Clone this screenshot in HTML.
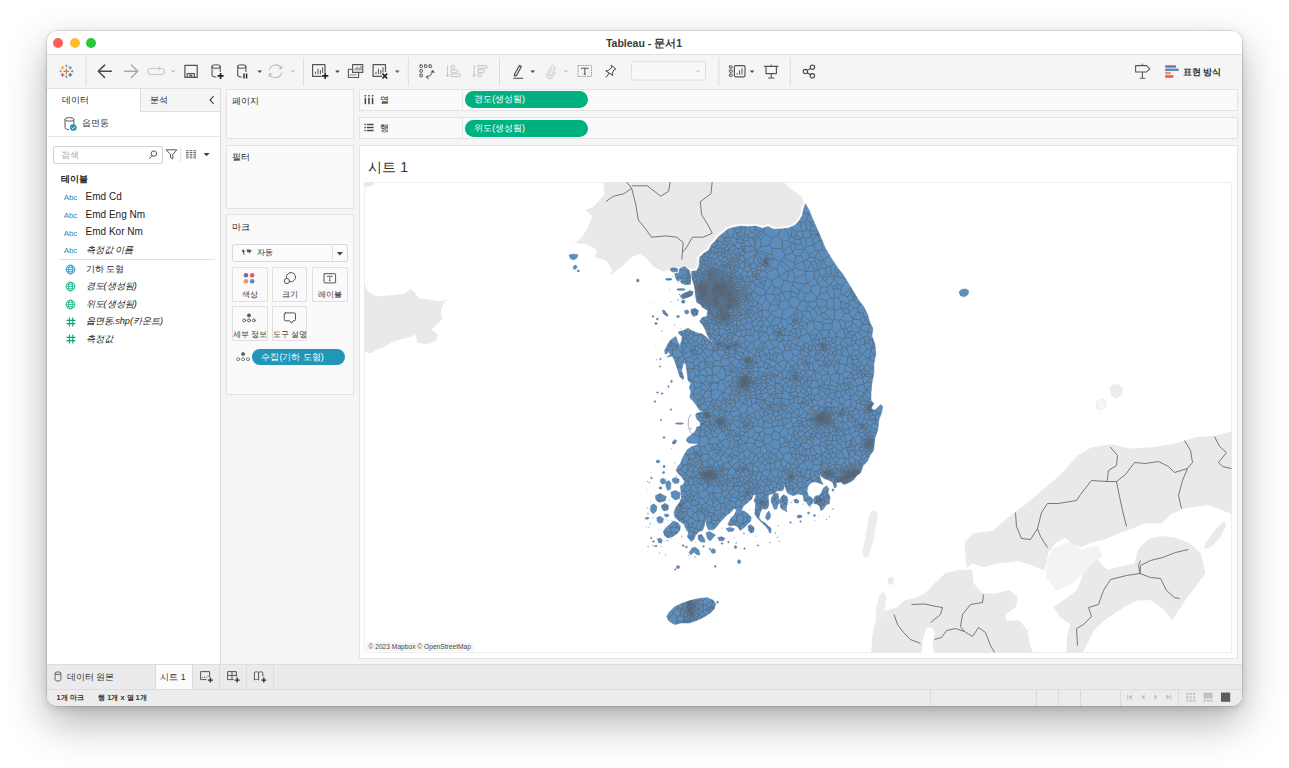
<!DOCTYPE html>
<html lang="ko">
<head>
<meta charset="utf-8">
<title>Tableau - 문서1</title>
<style>
*{box-sizing:border-box;margin:0;padding:0}
html,body{width:1289px;height:768px;overflow:hidden;background:#fff}
body{font-family:"Liberation Sans",sans-serif;font-size:11px;color:#333;position:relative}
#win{position:absolute;left:46.5px;top:31px;width:1195.5px;height:675px;border-radius:10px;background:#f5f5f5;overflow:hidden}
#shadow{position:absolute;left:46.5px;top:31px;width:1195.5px;height:675px;border-radius:10px;box-shadow:0 0 0 .5px rgba(0,0,0,.2),0 17px 42px rgba(0,0,0,.30),0 3px 9px rgba(0,0,0,.13)}
#o{position:absolute;left:-46.5px;top:-31px;width:1289px;height:768px}
.a{position:absolute}
.t{position:absolute;white-space:nowrap;line-height:14px;height:14px;overflow:visible}
svg{position:absolute;overflow:visible}
.card{position:absolute;background:#fafafa;border:1px solid #e3e3e3}
.vsep{position:absolute;width:1px;background:#dcdcdc}
.hsep{position:absolute;height:1px;background:#e0e0e0}
.pill{position:absolute;border-radius:8px;color:#fff;font-size:10.5px;line-height:15px;white-space:nowrap;overflow:hidden}
.mbtn{position:absolute;background:#fafafa;border:1px solid #dedede;border-radius:1px}
.mbtn .t{width:100%;text-align:center;left:0;font-size:9px}
.fld{font-size:10px;color:#222}
.fldk{font-size:9.2px;color:#222}
.it{font-style:italic}
.abc{position:absolute;font-size:8px;color:#2b8cb0;letter-spacing:-.2px;line-height:10px;white-space:nowrap}
.hash{position:absolute;font-size:11px;color:#00a27a;line-height:12px;font-weight:bold}
</style>
</head>
<body>
<div id="shadow"></div>
<div id="win"><div id="o">

<!-- title bar -->
<div class="a" id="titlebar" style="left:46px;top:31px;width:1197px;height:24px;background:#fff;border-bottom:1px solid #e2e2e2"></div>
<div class="a" style="left:53px;top:38px;width:10.4px;height:10.4px;border-radius:50%;background:#fe5f57"></div>
<div class="a" style="left:69.6px;top:38px;width:10.4px;height:10.4px;border-radius:50%;background:#febc2e"></div>
<div class="a" style="left:86.1px;top:38px;width:10.4px;height:10.4px;border-radius:50%;background:#28c840"></div>
<div class="t" id="wtitle" style="left:544px;width:200px;text-align:center;top:35.9px;font-size:10.5px;font-weight:bold;color:#3a3a3a">Tableau - 문서1</div>

<!-- toolbar placeholder -->

<svg id="tbicons" width="1289" height="768" viewBox="0 0 1289 768" style="left:0;top:0" fill="none" stroke-linecap="round" stroke-linejoin="round">
<!-- tableau logo -->
<g stroke-width="1.25" stroke-linecap="butt">
<path d="M66.4 68.4v5.8M63.5 71.3h5.8" stroke="#e8762d" stroke-width="1.3"/>
<path d="M62.6 65.9v3.6M60.8 67.7h3.6" stroke="#f5a623" stroke-width="1.1"/>
<path d="M70.2 65.9v3.6M68.4 67.7h3.6" stroke="#4e9bb8" stroke-width="1.1"/>
<path d="M62.6 73.1v3.6M60.8 74.9h3.6" stroke="#ea4a5a" stroke-width="1.1"/>
<path d="M70.2 73.1v3.6M68.4 74.9h3.6" stroke="#3f6fa5" stroke-width="1.1"/>
<path d="M66.4 64.6v2.4M65.2 65.8h2.4" stroke="#5b8fb5" stroke-width=".9"/>
<path d="M66.4 75.6v2.4M65.2 76.8h2.4" stroke="#6d8cab" stroke-width=".9"/>
<path d="M60.6 70.1v2.4M59.4 71.3h2.4" stroke="#6aa0c4" stroke-width=".9"/>
<path d="M72.2 70.1v2.4M71 71.3h2.4" stroke="#5d7fa8" stroke-width=".9"/>
</g>
<!-- separators -->
<g stroke="#dcdcdc" stroke-width="1" stroke-linecap="butt">
<path d="M86 57.5v28.5M303.4 57.5v28.5M408.3 57.5v28.5M499.5 57.5v28.5M718.9 57.5v28.5M790.3 57.5v28.5"/>
</g>
<!-- back / forward -->
<path d="M111.4 71.3H98.6M104.6 65.1l-6.3 6.2 6.3 6.2" stroke="#4a4a4a" stroke-width="1.5"/>
<path d="M124.6 71.3h12.8M131.4 65.1l6.3 6.2-6.3 6.2" stroke="#a9a9a9" stroke-width="1.4"/>
<!-- replay -->
<path d="M159.6 68.5h1.8a3 3 0 0 1 0 6h-10.6a3 3 0 0 1 0-6h8.8M158.6 66.9l1.8 1.6-1.8 1.6" stroke="#c9c9c9" stroke-width="1.1"/>
<path d="M170.9 70.4h4.4l-2.2 2.4z" fill="#b5b5b5" stroke="none"/>
<!-- save -->
<path d="M184.9 65.4h12.3v12h-12.3z" stroke="#555" stroke-width="1.25"/>
<path d="M187.2 77.2v-3.6h7.2v3.6M189.8 77.2v-1.8h2v1.8" stroke="#555" stroke-width="1.1"/>
<!-- db add -->
<g stroke="#555" stroke-width="1.1">
<ellipse cx="216.1" cy="66.5" rx="4.1" ry="1.8"/>
<path d="M212 66.5v8.6c0 1 1.6 1.9 4 1.9M220.2 66.5v5"/>
</g>
<path d="M220.6 72.9v6M217.6 75.9h6" stroke="#222" stroke-width="1.7" stroke-linecap="butt"/>
<!-- db pause -->
<g stroke="#555" stroke-width="1.1">
<ellipse cx="241.8" cy="66.5" rx="4.1" ry="1.8"/>
<path d="M237.7 66.5v8.6c0 1 1.6 1.9 3.6 1.9M245.9 66.5v5"/>
</g>
<path d="M244 73.4v5.2M246.6 73.4v5.2" stroke="#222" stroke-width="1.4" stroke-linecap="butt"/>
<path d="M257.4 70.4h4.6l-2.3 2.5z" fill="#444" stroke="none"/>
<!-- refresh -->
<g stroke="#bdbdbd" stroke-width="1.1">
<path d="M269.6 69.6a6.2 6.2 0 0 1 11.6-1.2M281.4 73a6.2 6.2 0 0 1-11.6 1.2"/>
<path d="M281.6 66.2v2.6h-2.6M269.4 76.4v-2.6h2.6"/>
</g>
<path d="M290.7 70.4h4.4l-2.2 2.4z" fill="#c4c4c4" stroke="none"/>
<!-- new worksheet -->
<path d="M325 72v-7.4h-12.4v11.8h8.6" stroke="#555" stroke-width="1.2"/>
<path d="M315.6 74.2v-2.4M318 74.2v-5.6M320.4 74.2v-4.2M322.6 73v-5.8" stroke="#555" stroke-width="1" stroke-linecap="butt"/>
<path d="M325.2 72.8v6.2M322.1 75.9h6.2" stroke="#222" stroke-width="1.7" stroke-linecap="butt"/>
<path d="M335.1 70.4h4.6l-2.3 2.5z" fill="#444" stroke="none"/>
<!-- duplicate -->
<g stroke="#555" stroke-width="1.1">
<path d="M352.6 64.6h10.2v7.8h-10.2z" fill="#f5f5f5"/>
<path d="M352.6 69.2h-4.2v8.3h10.2v-5"/>
</g>
<path d="M355 70.4v-2M357 70.4v-3.6M359 70.4v-2.8M361 70.4v-4.2M350.4 75.6v-1.4M352.2 75.6v-1.4M354 75.6v-1.4M355.8 75.6v-1.4" stroke="#555" stroke-width=".9" stroke-linecap="butt"/>
<!-- clear sheet -->
<path d="M385.5 71.6v-7h-12.4v11.8h8.4" stroke="#555" stroke-width="1.2"/>
<path d="M376 74.2v-2.4M378.4 74.2v-5.6M380.8 74.2v-4.2M383 72.6v-5.4" stroke="#555" stroke-width="1" stroke-linecap="butt"/>
<path d="M382.4 73.7l4.8 4.8M387.2 73.7l-4.8 4.8" stroke="#222" stroke-width="1.7" stroke-linecap="butt"/>
<path d="M395 70.4h4.6l-2.3 2.5z" fill="#555" stroke="none"/>
<!-- swap -->
<g stroke="#555" stroke-width="1">
<rect x="419.8" y="64.9" width="2.6" height="2.6" rx=".6"/><rect x="424.4" y="64.9" width="2.6" height="2.6" rx=".6"/><rect x="429" y="64.9" width="2.6" height="2.6" rx=".6"/>
<rect x="419.8" y="69.6" width="2.6" height="2.6" rx=".6"/><rect x="419.8" y="74.2" width="2.6" height="2.6" rx=".6"/>
<path d="M426.4 77.2c3.4-.4 6-3 6.4-6.4M428.2 75.6l-2 1.7 2.1 1.4M431 72.4l1.8-1.9 1.3 2.2"/>
</g>
<!-- sort asc / desc (disabled) -->
<g stroke="#c6c6c6" stroke-width="1">
<path d="M447.6 65.6v11M446.2 75l1.4 1.7 1.4-1.7"/>
<rect x="451" y="65.6" width="3.6" height="2.6" rx=".7"/><rect x="451" y="69.8" width="6.6" height="2.6" rx=".7"/><rect x="451" y="74" width="9.4" height="2.6" rx=".7"/>
<path d="M474.2 65.6v11M472.8 75l1.4 1.7 1.4-1.7"/>
<rect x="477.6" y="65.6" width="9.6" height="2.6" rx=".7"/><rect x="477.6" y="69.8" width="6.8" height="2.6" rx=".7"/><rect x="477.6" y="74" width="3.8" height="2.6" rx=".7"/>
</g>
<!-- highlighter -->
<path d="M519.6 65.4l1.8 1-4.8 9-2.3.6.5-2.3zM513.8 78.3h9" stroke="#444" stroke-width="1.1"/>
<path d="M530.4 70.4h4.6l-2.3 2.5z" fill="#444" stroke="none"/>
<!-- paperclip -->
<path d="M552.4 68.2l-3.6 6.6a1.3 1.3 0 0 0 2.3 1.2l3.8-7.2a2.3 2.3 0 0 0-4-2.2l-4 7.4a3.3 3.3 0 0 0 5.8 3.1l2.6-4.9" stroke="#c2c2c2" stroke-width=".9"/>
<path d="M563.6 70.4h4.4l-2.2 2.4z" fill="#c4c4c4" stroke="none"/>
<!-- text box -->
<rect x="578.1" y="65.5" width="13.4" height="11" stroke="#777" stroke-width=".8" stroke-dasharray="1.4 1.1" stroke-linecap="butt"/>
<path d="M581.6 68.2h6.4M581.6 68.2v1M588 68.2v1M584.8 68.2v6M583.6 74.2h2.4" stroke="#444" stroke-width=".9" stroke-linecap="butt"/>
<!-- pin -->
<path d="M611.6 65.4l4.2 3.6-1.6.6-2 3.6.6 2.2-7-4.4 2.4-.4 3.4-3zM609.2 73.2l-3 4" stroke="#444" stroke-width="1"/>
<!-- combo -->
<rect x="631.5" y="61.8" width="74" height="18.2" rx="2" fill="#f8f8f8" stroke="#dedede" stroke-width="1"/>
<path d="M695.8 70.4h4.4l-2.2 2.4z" fill="#cdcdcd" stroke="none"/>
<!-- show/hide cards -->
<g stroke="#555" stroke-width="1">
<rect x="729.4" y="66" width="2.9" height="2.2" rx=".5"/><rect x="729.4" y="70.1" width="2.9" height="2.2" rx=".5"/><rect x="729.4" y="74.2" width="2.9" height="2.2" rx=".5"/>
<rect x="734.4" y="65.6" width="10.6" height="11.2" rx="1.2" stroke-width="1.2"/>
<path d="M737.2 74.6v-1.6M739.6 74.6v-4.4M742 74.6v-6.4" stroke-linecap="butt"/>
</g>
<path d="M749.8 70.4h4.6l-2.3 2.5z" fill="#444" stroke="none"/>
<!-- presentation -->
<path d="M764.4 66.4h13.6M766 66.6v7h10.4v-7M771.2 73.8v4M768.4 78h5.6M771.2 65v1.2" stroke="#555" stroke-width="1.15"/>
<!-- share -->
<g stroke="#444" stroke-width="1.1">
<circle cx="812.4" cy="67.2" r="2.2"/><circle cx="805.4" cy="71.6" r="2.2"/><circle cx="812.4" cy="75.8" r="2.2"/>
<path d="M807.3 70.4l3.2-2M807.3 72.8l3.2 1.9"/>
</g>
<!-- guide signpost -->
<path d="M1135.6 65.6h11l3.2 3.2-3.2 3.2h-11zM1142.4 64v1.4M1142.4 72.2v6.1M1140.2 78.3h4.6" stroke="#555" stroke-width="1.05"/>
<!-- show me -->
<g stroke="none">
<rect x="1165.2" y="65.3" width="10.7" height="2.4" fill="#7f6c9e"/>
<rect x="1165.2" y="68.6" width="13.5" height="2.4" fill="#4e8fc4"/>
<rect x="1165.2" y="71.9" width="5.6" height="2.4" fill="#f59350"/>
<rect x="1165.2" y="75.2" width="8.2" height="2.6" fill="#ec5563"/>
</g>
</svg>
<div class="t" style="left:1182.5px;top:64.5px;font-size:8.6px;font-weight:bold;color:#2e2e2e">표현 방식</div>


<!-- left data pane -->
<div class="a" id="leftpane" style="left:46px;top:88px;width:175px;height:576px;background:#fff;border-right:1px solid #dedede;border-top:1px solid #e2e2e2"></div>


<!-- left pane content -->
<div class="a" style="left:139.5px;top:88px;width:81.5px;height:23.5px;background:#f5f5f5;border-left:1px solid #dedede;border-right:1px solid #dedede;border-bottom:1px solid #dedede;border-top:1px solid #e2e2e2"></div>
<div class="t" style="left:61.5px;top:93px;font-size:8.8px;color:#2a2a2a">데이터</div>
<div class="t" style="left:150.3px;top:93px;font-size:8.8px;color:#2a2a2a">분석</div>
<svg width="8" height="10" viewBox="0 0 8 10" style="left:207.5px;top:95px" fill="none" stroke="#444" stroke-width="1.1"><path d="M5.6 1.2L2 5l3.6 3.8"/></svg>
<svg width="14" height="16" viewBox="0 0 14 16" style="left:63px;top:116px" fill="none" stroke="#555" stroke-width="1"><ellipse cx="6.4" cy="3.4" rx="4.4" ry="1.8"/><path d="M2 3.4v8.4c0 1 1.8 1.8 4 1.8M10.8 3.4v5"/><circle cx="10.3" cy="11.5" r="3.3" fill="#1b8fb8" stroke="none"/><path d="M8.7 11.6l1.2 1.2 2-2.3" stroke="#fff" stroke-width="1"/></svg>
<div class="t" style="left:81.5px;top:116.3px;font-size:8.8px;color:#333">읍면동</div>
<div class="hsep" style="left:47px;top:136px;width:173px;background:#e6e6e6"></div>
<div class="a" style="left:53.3px;top:145.5px;width:109.4px;height:18.8px;border:1px solid #d2d2d2;border-radius:2px;background:#fff"></div>
<div class="t" style="left:60.5px;top:148px;font-size:8.8px;color:#a8a8a8">검색</div>
<svg width="130" height="20" viewBox="145 145 130 20" style="left:145px;top:145px" fill="none" stroke="#555" stroke-width="1" stroke-linecap="round" stroke-linejoin="round">
<circle cx="153.9" cy="153.6" r="2.7"/><path d="M152.1 155.7l-2.6 3"/>
<path d="M166.4 149.8h10.4l-4 4.8v4.2l-2.4-1.2v-3z"/>
<path d="M180.8 147v14.4" stroke="#dcdcdc"/>
<g stroke="#666" stroke-width="1" stroke-linecap="butt"><path d="M186 150.7h2.6M189.7 150.7h2.6M193.4 150.7h2.6M186 152.5h2.6M189.7 152.5h2.6M193.4 152.5h2.6M186 154.3h2.6M189.7 154.3h2.6M193.4 154.3h2.6M186 156.1h2.6M189.7 156.1h2.6M193.4 156.1h2.6M186 157.9h2.6M189.7 157.9h2.6M193.4 157.9h2.6"/></g>
<path d="M203.6 153h6l-3 3.2z" fill="#444" stroke="none"/>
</svg>
<div class="t" style="left:61.2px;top:171.5px;font-size:8.8px;font-weight:bold;color:#222">테이블</div>

<div class="abc" style="left:63.8px;top:193.3px">Abc</div><div class="t fld" style="left:85.6px;top:189.8px">Emd Cd</div>
<div class="abc" style="left:63.8px;top:211px">Abc</div><div class="t fld" style="left:85.6px;top:207.5px">Emd Eng Nm</div>
<div class="abc" style="left:63.8px;top:228.5px">Abc</div><div class="t fld" style="left:85.6px;top:225px">Emd Kor Nm</div>
<div class="abc" style="left:63.8px;top:246.2px">Abc</div><div class="t fldk it" style="left:85.6px;top:242.8px">측정값 이름</div>
<div class="hsep" style="left:59.3px;top:259px;width:155.7px"></div>
<svg width="11" height="11" viewBox="-5.5 -5.5 11 11" style="left:64.9px;top:263.7px" fill="none" stroke="#2b9bc8" stroke-width="1"><circle r="4.4"/><ellipse rx="2" ry="4.4"/><path d="M-4.4 0h8.8M-3.8 -2.2h7.6M-3.8 2.2h7.6" stroke-width=".8"/></svg>
<div class="t fldk" style="left:85.6px;top:261.8px">기하 도형</div>
<svg width="11" height="11" viewBox="-5.5 -5.5 11 11" style="left:64.9px;top:281.1px" fill="none" stroke="#1fb98c" stroke-width="1"><circle r="4.4"/><ellipse rx="2" ry="4.4"/><path d="M-4.4 0h8.8M-3.8 -2.2h7.6M-3.8 2.2h7.6" stroke-width=".8"/></svg>
<div class="t fldk it" style="left:85.6px;top:279.2px">경도(생성됨)</div>
<svg width="11" height="11" viewBox="-5.5 -5.5 11 11" style="left:64.9px;top:298.6px" fill="none" stroke="#1fb98c" stroke-width="1"><circle r="4.4"/><ellipse rx="2" ry="4.4"/><path d="M-4.4 0h8.8M-3.8 -2.2h7.6M-3.8 2.2h7.6" stroke-width=".8"/></svg>
<div class="t fldk it" style="left:85.6px;top:296.8px">위도(생성됨)</div>
<svg width="10" height="10" viewBox="0 0 10 10" style="left:65.6px;top:317px" fill="none" stroke="#00a67c" stroke-width="1.1"><path d="M3.4 .6v8.8M6.8 .6v8.8M.6 3.4h8.8M.6 6.6h8.8"/></svg>
<div class="t fldk it" style="left:85.6px;top:314.4px">읍면동.shp(카운트)</div>
<svg width="10" height="10" viewBox="0 0 10 10" style="left:65.6px;top:334.3px" fill="none" stroke="#00a67c" stroke-width="1.1"><path d="M3.4 .6v8.8M6.8 .6v8.8M.6 3.4h8.8M.6 6.6h8.8"/></svg>
<div class="t fldk it" style="left:85.6px;top:332px">측정값</div>

<!-- cards -->
<div class="card" style="left:226px;top:88.5px;width:128px;height:50.5px"></div>
<div class="card" style="left:226px;top:144.5px;width:128px;height:64.5px"></div>
<div class="card" style="left:226px;top:214px;width:128px;height:181px"></div>

<!-- shelves -->
<div class="card" style="left:359px;top:88.5px;width:879px;height:22.5px"></div>
<div class="card" style="left:359px;top:116.5px;width:879px;height:22.5px"></div>


<!-- card contents -->
<div class="t" style="left:231.7px;top:93.8px;font-size:8.8px;color:#2a2a2a">페이지</div>
<div class="t" style="left:231.7px;top:150.3px;font-size:8.8px;color:#2a2a2a">필터</div>
<div class="t" style="left:231.7px;top:220.3px;font-size:8.8px;color:#2a2a2a">마크</div>
<div class="a" style="left:231.8px;top:244.2px;width:116px;height:17.5px;border:1px solid #d8d8d8;border-radius:2px;background:#fbfbfb"></div>
<div class="vsep" style="left:332.3px;top:245.6px;height:15px;background:#dedede"></div>
<svg width="12" height="8" viewBox="0 0 12 8" style="left:241px;top:248.6px" fill="#555" stroke="none"><path d="M.6 1.2l1.8-.6 1 .8.4 1.6-.8.2.6 2.6-.8.2-.8-2.4-.6-1zM5 .6l2.2-.2 2.4.4 1.2 1-.6.8-1 .2-.4 1.6-.8-.2-.2-1.2-1 .6-.8-.6.2-1.2z"/></svg>
<div class="t" style="left:257px;top:246.3px;font-size:7.6px;color:#333">자동</div>
<svg width="8" height="6" viewBox="0 0 8 6" style="left:336.4px;top:251.2px"><path d="M.8 1h6.2L3.9 4.6z" fill="#444"/></svg>

<div class="mbtn" style="left:231.8px;top:266.8px;width:35.8px;height:34.8px"><div class="t" style="top:20.4px;font-size:7.6px">색상</div></div>
<div class="mbtn" style="left:272.2px;top:266.8px;width:35.3px;height:34.8px"><div class="t" style="top:20.4px;font-size:7.6px">크기</div></div>
<div class="mbtn" style="left:312.1px;top:266.8px;width:35.7px;height:34.8px"><div class="t" style="top:20.4px;font-size:7.6px">레이블</div></div>
<div class="mbtn" style="left:231.8px;top:306.3px;width:35.8px;height:34.9px"><div class="t" style="top:20.6px;font-size:7.6px">세부 정보</div></div>
<div class="mbtn" style="left:272.2px;top:306.3px;width:35.3px;height:34.9px"><div class="t" style="top:20.6px;font-size:7.6px">도구 설명</div></div>
<svg width="130" height="130" viewBox="226 262 130 130" style="left:226px;top:262px" fill="none" stroke="#555" stroke-width="1" stroke-linecap="round" stroke-linejoin="round">
<g stroke="none"><circle cx="246" cy="275.2" r="2.3" fill="#8165a8"/><circle cx="252.2" cy="275.2" r="2.3" fill="#ec5563"/><circle cx="246" cy="281.3" r="2.3" fill="#f59350"/><circle cx="252.2" cy="281.3" r="2.3" fill="#4e8fc4"/></g>
<circle cx="291" cy="277.2" r="4.6"/><circle cx="286.9" cy="281" r="2.6" fill="#fafafa"/>
<rect x="324" y="273.7" width="11.6" height="9.2" rx=".6"/><path d="M327.4 276.2h4.8M327.4 276.2v.8M332.2 276.2v.8M329.8 276.2v4.4M328.9 280.6h1.8" stroke-width=".85" stroke-linecap="butt"/>
<circle cx="249" cy="315.4" r="1.5" fill="#555"/><circle cx="244.2" cy="320.4" r="1.5" stroke-width=".9"/><circle cx="249" cy="320.4" r="1.5" stroke-width=".9"/><circle cx="253.8" cy="320.4" r="1.5" stroke-width=".9"/>
<path d="M285.4 312.9h9a1.1 1.1 0 0 1 1.1 1.1v5.7a1.1 1.1 0 0 1-1.1 1.1h-1.4l-1.4 2.4-1.9-2.4h-4.3a1.1 1.1 0 0 1-1.1-1.1V314a1.1 1.1 0 0 1 1.1-1.1z"/>
<circle cx="243.1" cy="354" r="1.5" fill="#666" stroke="#666"/><circle cx="238.2" cy="359.2" r="1.5" stroke="#777" stroke-width=".9"/><circle cx="243.1" cy="359.2" r="1.5" stroke="#777" stroke-width=".9"/><circle cx="248" cy="359.2" r="1.5" stroke="#777" stroke-width=".9"/>
</svg>
<div class="pill" style="left:252.4px;top:348.8px;width:92.6px;height:16.5px;background:#2196b7;line-height:16.5px;padding-left:9px;font-size:8.8px">수집(기하 도형)</div>

<!-- shelf contents -->
<div class="vsep" style="left:461.7px;top:89.5px;height:20.5px;background:#e6e6e6"></div>
<div class="vsep" style="left:461.7px;top:117.5px;height:20.5px;background:#e6e6e6"></div>
<svg width="12" height="10" viewBox="0 0 12 10" style="left:364.4px;top:95px" fill="#444" stroke="none"><rect x=".6" y="0" width="1.5" height="1.5"/><rect x=".6" y="2.8" width="1.5" height="6.4"/><rect x="4.2" y="0" width="1.5" height="1.5"/><rect x="4.2" y="2.8" width="1.5" height="6.4"/><rect x="7.8" y="0" width="1.5" height="1.5"/><rect x="7.8" y="2.8" width="1.5" height="6.4"/></svg>
<div class="t" style="left:380px;top:92.8px;font-size:8.8px;color:#2a2a2a">열</div>
<svg width="12" height="10" viewBox="0 0 12 10" style="left:364.4px;top:123.2px" fill="#444" stroke="none"><rect x=".4" y=".8" width="1.4" height="1.4"/><rect x="2.8" y=".8" width="6.8" height="1.4"/><rect x=".4" y="3.8" width="1.4" height="1.4"/><rect x="2.8" y="3.8" width="6.8" height="1.4"/><rect x=".4" y="6.8" width="1.4" height="1.4"/><rect x="2.8" y="6.8" width="6.8" height="1.4"/></svg>
<div class="t" style="left:380px;top:120.8px;font-size:8.8px;color:#2a2a2a">행</div>
<div class="pill" style="left:464.8px;top:91px;width:123.5px;height:17px;border-radius:8.5px;background:#00b180;line-height:17px;padding-left:9.4px;font-size:8.8px">경도(생성됨)</div>
<div class="pill" style="left:464.8px;top:119.5px;width:123.5px;height:17px;border-radius:8.5px;background:#00b180;line-height:17px;padding-left:9.4px;font-size:8.8px">위도(생성됨)</div>

<!-- view -->
<div class="card" id="view" style="left:359px;top:144.5px;width:879px;height:514.5px;background:#fff"></div>


<!-- view content -->
<div class="t" style="left:368.4px;top:155.6px;font-size:14px;line-height:22px;height:22px;color:#333">시트 1</div>
<div id="map" class="a" style="left:363.5px;top:181.5px;width:868.5px;height:471.5px;overflow:hidden;background:#fff;outline:1px solid #f0f0f0;outline-offset:-1px"><!--MAP--><svg id="mapsvg" width="868.5" height="471.5" viewBox="363.5 181.5 868.5 471.5" style="left:0;top:0">
<defs><clipPath id="skc"><polygon points="804.9,203.2 808.5,209.6 812.2,218.7 816.7,228.7 820.4,236.9 824.9,247.9 830.4,257 836.8,267 842.2,273.4 847.7,282.5 853.2,291.6 857.7,298.9 863.2,306.2 866.9,313.5 869.6,322.6 872.4,327.8 871.4,335.6 874.4,343.4 875.4,353.2 873.4,363 873.4,372.7 871.4,382.5 870.5,392.3 870.5,400 873.4,403 870.5,407.9 874.4,409.8 880.2,404 882.2,405.9 881.2,411.8 878.3,419.6 877.3,429.4 874.4,437.2 873.4,447 873,450 869.5,454.7 867.1,460.5 862.5,465.2 860.1,472.3 856,475.2 853.1,479.3 849.6,481.6 843.7,484 840.2,481.6 835.5,482.2 834.3,487.5 832,481.6 827.3,479.3 823.8,478.1 820.3,475.2 818.5,472.8 820.3,479.3 822.6,484 815.6,481.6 812.1,481.6 808.6,484 807,487 806.5,491 808,495.5 811,497 812.7,499.5 811.8,502.9 809.3,505.5 807.6,504.6 805.9,501.2 803.4,500.4 803,496 802.5,494.5 797.5,493.2 792.4,495.3 787.3,492.8 785.6,489.4 784.3,483.5 783,489 781.4,490.2 777.1,490.2 772.9,492.8 767.8,494.5 767.8,498.7 768.3,503.8 767.4,507.6 765.3,508.8 761.9,508 760.5,510 759.4,513.1 758.5,517.3 761.1,520.7 764.5,522.4 767.8,525.8 770.4,527.5 770.4,532.5 768.8,532 767.8,529.1 764.5,524.9 760.7,521.5 756,516.5 754.3,513.1 754.7,508 755.2,503 753.5,500.4 754.5,497.5 756,493.5 752.5,494.7 751.3,498.2 747.8,501.7 743.1,505.2 740.8,509.9 744.3,511.1 747.8,513.4 750.7,517 750.2,520.5 746.6,524 743.1,527.5 739.6,529.8 737.3,526.3 733.8,524.6 729.1,525.2 727.3,524 730.2,518.1 733.8,514.6 736.1,509.9 733.8,507.6 730.2,511.7 725.5,515.2 722,519.3 718.5,522.8 716.2,526.3 712.7,529.3 708,529.3 706.2,525.2 705,518.1 703.9,525.2 702.1,529.8 698.6,531 695.1,534.5 693.3,539.2 690.4,541 686.9,536.3 688,532.2 685.7,528.7 683.4,523.4 678.7,520.5 674.6,517 673.4,511.7 675.7,506.4 679.3,501.7 681,497 680.4,490 679.9,485.3 682.8,484.2 684,480.7 681,476 678.1,473.6 675.8,470.1 676.9,466.6 679.9,463.1 681.6,458.4 684,453.7 686.9,449 691.6,446.1 698.6,444.1 695.1,443.1 688.1,442.5 685.7,440.2 686.9,437.3 691.6,433.8 695.1,430.2 696.3,426.7 699.8,425.6 699.8,422 696.3,418.5 695.1,415 695.7,413 703.9,410.6 699.2,410 696.3,405.3 692.8,400.7 689.3,397.1 690.4,391.3 688.7,386.6 690.4,383.1 687.5,379.5 686.3,370.2 685.2,363.1 683,362.3 681.1,370.2 683.4,377.2 682.2,379 679.3,376 677.5,370.2 675.2,363.1 673.4,358.4 671.7,355.5 666.4,356.7 669.9,353.8 668.2,351.4 664.7,353.8 664.1,350.2 666.4,345.6 669.3,340.3 673.4,337.3 675.5,336 677,341 679.3,345.5 681,340.6 681.7,335.9 678.5,333.5 678.1,331.2 682.8,330 687.5,327.7 691,330 696.9,332.4 701.6,333.5 706.3,337.1 711,341.2 713.3,340 709.8,339.4 706.9,334.7 705.1,330 702.8,325.3 699.2,320.7 701.6,317.1 706.3,316 707.4,310.1 701.6,306.6 700.4,304.2 696.3,301.9 695.1,296 694.5,290.2 694,285.5 691.6,278.4 691,270.8 696.3,270.2 698.1,266.7 698.6,264.3 699.2,257 702.8,253.3 708.3,249.7 711,244.2 714.7,240.6 718.3,236 722.9,232.4 727.4,228.7 732.9,226.9 740.2,225.6 747.5,226.3 754.8,225.6 762.1,227.8 767.5,226 773,228.7 780.3,228.4 787.6,227.8 794,225.1 798.5,220.5 801.8,215 803.1,208.7" /><polygon points="666.2,616.2 668.1,612.4 673.9,606.5 681.7,602.7 690.4,599.8 700.1,597.8 706.9,597.2 712.7,599.8 715.3,603.6 713.7,608.5 709.8,612.4 704,616.2 696.2,620.1 688.5,622.5 680.7,622.5 674.9,624 672,623 668.1,620.1" /><polygon points="679.3,267.9 684,266.1 688.7,269.7 690.4,276.1 689.9,283.7 685.2,284.3 680.5,282.5 679.9,278.4 677.5,274.9 678.7,270.2" /><polygon points="669.9,268.2 673.5,267.2 677.3,268.4 676.8,271.2 672.5,271.6 670.4,270.4" /><polygon points="674.2,273 677.2,272.6 678.6,276 679.2,280 676.8,280.3 675,277" /><polygon points="679.3,295.4 684,292.5 689.9,290.2 692.8,291.3 691.6,294.9 686.3,297.2 682.2,298.4" /><polygon points="662.9,531 665.2,527.5 669.3,524 672.8,520.5 677.5,522.2 679.8,525.7 679.3,529.8 676.3,533.4 671.6,536.3 667.5,537.5 664,535.1" /><polygon points="697.4,535.1 700.9,533.9 703.9,538 704.5,541.6 700.4,541.6 698,539.2" /><polygon points="705.6,532.2 709.1,531 715,534.5 712.7,536.9 709.7,540.4 706.8,538" /><polygon points="717.3,537 721,536.3 724.4,538 722.5,540.4 718.5,540" /><polygon points="725.5,528 729.5,526.9 733.8,528.2 732.5,530.8 727.5,531" /><polygon points="688.6,552.1 691.6,547.4 695.1,546.8 698.6,549.8 699.2,554.5 696,554 693.5,551.5 690.4,554.5" /><polygon points="710.1,550 712.5,548 715,549.5 714.6,552.4 711.5,552.7" /><polygon points="771.2,497 773.8,492.3 777.6,493.2 778.4,498.7 779.7,502.1 777.1,504.6 776.3,508.4 773.8,508.8 772.1,504.6 770.4,500.4" /><polygon points="780.5,497 783.1,494 786.5,496.2 787.3,500.4 786.5,504.6 785.6,508.8 786.5,511.4 783.9,509.7 781.4,508.8 779.7,506.3 780.1,502.9 779,500" /><polygon points="826.2,485.2 828.3,488.5 827.5,491.9 829.6,497 828.8,502.9 825.4,504.6 822.8,508.8 820.3,510.1 819.5,506.3 816.9,503.8 813.5,502.9 812.9,498.7 815.2,495.3 818.6,495.3 821.1,491.9 822.8,487.7" /><polygon points="833.6,483 835.6,482.6 836,486 834.6,487.7 833.4,485.5" /><polygon points="747.5,526 750,524 753.5,527 753,531.5 750,532.5 748,530" /><polygon points="796.6,515.5 799,514.8 800.8,516 799.5,517.3 797,517.2" /><polygon points="650.3,505 653.5,503.5 656.4,506 655.8,510.5 652.8,513.4 650,510.5" /><polygon points="655.2,495 659.5,493 663.4,495.5 662.5,500 658.5,501.7 655.6,499" /><polygon points="661.1,504.5 664.5,502.9 668.1,505 667.5,509.5 663.5,510.5 661.3,508" /><polygon points="656.4,517 659.5,515.8 662.9,518 662.3,522 658.5,522.8 656.6,520.5" /><polygon points="664,513.8 667,513.4 668.7,515 667,516.4 664.4,516" /><polygon points="644.7,517.2 647,516.7 648.8,517.6 647.2,518.7 645,518.6" /><polygon points="659.9,479 663,477.7 665.2,480 664.6,483 661.5,483.6 660,481.5" /><polygon points="665.2,481.5 668.5,480 670.5,483 670,488.5 667.2,490 665.5,486" /><polygon points="671.7,478.5 675,477.1 678.7,479 678,482.5 674,483 672,481" /><polygon points="670.5,491.5 675,490 679.9,492.5 679,498 674.5,499.4 671,496.5" /><polygon points="655.2,495.5 660,493.5 665.8,496 664.5,500.5 659,501.8 655.6,499.5" /><polygon points="671.7,441.5 674.5,439 676.3,440.2 675,442.8 672.5,443.7" /><polygon points="568.5,254.6 572,253.6 577.3,254.2 576.5,257.3 573.5,259.3 570,258.2" /><polygon points="572.6,266 575,264.6 576.7,266 575.5,268.5 573.2,268.7" /><polygon points="958.6,291.5 961,289 965.5,288.4 968.2,290.3 967.5,294 964,296.2 960,295.3" /><polygon points="793.3,499.6 796,498.6 798.6,500.4 797.5,502.7 794.5,502.3" /><polygon points="766.2,513.1 768.3,510.5 770,513.9 769.5,518.1 767,519.8 764.9,517.3" /><polygon points="690.4,309 694.5,307.8 698,310 697,314.5 693,316 690.8,313" /><polygon points="684,310.2 686.8,309.5 688.7,311.3 687.2,313.6 684.6,313" /><polygon points="661.7,310 663.5,309.5 667.6,314.6 666.6,316 663,313" /><polygon points="657,538.5 659.5,537.5 661.7,539.5 660.8,542.7 658,542" /><ellipse cx="577.8" cy="270.4" rx="1.1" ry="1"/><ellipse cx="637.3" cy="280" rx="1.3" ry="1.6"/><ellipse cx="668.2" cy="278.8" rx="3.2" ry="1"/><ellipse cx="680.5" cy="289" rx="4.2" ry="0.9"/><ellipse cx="682.8" cy="301.2" rx="1.7" ry="1.6"/><ellipse cx="664" cy="312.3" rx="1.2" ry="1.2"/><ellipse cx="656.8" cy="318.5" rx="1" ry="1"/><ellipse cx="652.5" cy="316" rx="1" ry="0.8"/><ellipse cx="655.5" cy="323" rx="1.3" ry="1"/><ellipse cx="677.5" cy="316" rx="1.5" ry="1"/><ellipse cx="657.5" cy="461" rx="1.8" ry="1.4"/><ellipse cx="663.6" cy="466" rx="1" ry="1.2"/><ellipse cx="663" cy="472" rx="1.2" ry="1"/><ellipse cx="651" cy="477.5" rx="1" ry="0.8"/><ellipse cx="660" cy="487.5" rx="1.5" ry="1.2"/><ellipse cx="735" cy="546.5" rx="1.2" ry="1.5"/><ellipse cx="738.6" cy="561.2" rx="1.6" ry="2"/><ellipse cx="714.7" cy="565.9" rx="0.9" ry="0.9"/><ellipse cx="677.5" cy="566.5" rx="1.6" ry="1.6"/><ellipse cx="674.8" cy="569" rx="0.8" ry="0.8"/><ellipse cx="717" cy="601.7" rx="0.9" ry="1"/><ellipse cx="799.2" cy="515.9" rx="2.2" ry="1.4"/><ellipse cx="751.7" cy="529" rx="1.7" ry="2.8"/><ellipse cx="808" cy="512.5" rx="1" ry="1"/><ellipse cx="814" cy="515" rx="1" ry="1"/><ellipse cx="800" cy="521" rx="0.8" ry="0.8"/><ellipse cx="790" cy="522" rx="0.8" ry="0.8"/><ellipse cx="832.5" cy="489.5" rx="0.9" ry="1.2"/><ellipse cx="653" cy="541" rx="1" ry="0.8"/><ellipse cx="655.5" cy="545.5" rx="1.2" ry="0.8"/><ellipse cx="650.8" cy="537.5" rx="0.8" ry="0.8"/><ellipse cx="682.5" cy="545" rx="1" ry="0.8"/><ellipse cx="686" cy="546.5" rx="0.8" ry="1"/><ellipse cx="703" cy="546" rx="0.8" ry="0.8"/><ellipse cx="721.5" cy="543" rx="0.9" ry="0.8"/><ellipse cx="728" cy="541.5" rx="0.8" ry="0.8"/><ellipse cx="683.5" cy="343.5" rx="0.8" ry="0.8"/><ellipse cx="660" cy="358.5" rx="0.8" ry="0.8"/><ellipse cx="659.5" cy="366" rx="0.7" ry="0.7"/><ellipse cx="671" cy="381" rx="0.9" ry="1.1"/><ellipse cx="668" cy="386" rx="0.6" ry="0.9"/><ellipse cx="657" cy="392" rx="0.9" ry="0.7"/><ellipse cx="661.5" cy="393" rx="0.9" ry="0.7"/><ellipse cx="654.5" cy="401" rx="0.9" ry="0.8"/><ellipse cx="670.5" cy="409" rx="0.8" ry="0.8"/><ellipse cx="660.5" cy="419.5" rx="0.7" ry="0.7"/><ellipse cx="679" cy="423" rx="4" ry="0.7"/><ellipse cx="663.5" cy="437" rx="0.9" ry="1"/><ellipse cx="709.5" cy="548.5" rx="0.8" ry="0.8"/><ellipse cx="744" cy="548" rx="0.8" ry="0.8"/><ellipse cx="757.5" cy="545" rx="0.7" ry="0.7"/></clipPath>
<radialGradient id="cg"><stop offset="0" stop-color="#525a65" stop-opacity=".95"/><stop offset=".6" stop-color="#525a65" stop-opacity=".7"/><stop offset="1" stop-color="#525a65" stop-opacity="0"/></radialGradient>
<filter id="sb" x="-5%" y="-5%" width="110%" height="110%"><feGaussianBlur stdDeviation=".7"/></filter></defs>
<g fill="#e9e9e9" filter="url(#sb)">
<polygon points="602.5,180 604.1,193.7 593,206.3 585,209.5 591.5,215.8 586.8,228.4 580.5,237.8 574.2,242.6 586.8,244.1 596.2,248.9 594.6,256.7 605.7,259.9 612,269.3 608.8,275.6 621.4,266.2 630.9,256.7 638.7,253.6 645,256.7 652.9,266.2 662.4,270.9 670.2,269.3 680,266.2 690,268 697.4,269.7 700,300 760,300 800,240 804.9,203.2 800,195 790,188 781.6,180" />
<polygon points="360,283.5 363.8,283.5 367.9,291.4 375.7,296.1 391.5,294.5 404.1,293 410.4,288.2 415.1,293 418.3,297.7 429.3,299.3 438.7,300.8 447.6,299.3 443.5,302.4 440.3,310.3 441.9,318.2 435.6,324.5 430.9,329.2 437.2,333.9 435.6,340.2 426.1,344.3 416.7,341.8 415.1,333.9 408.8,337 400.9,338.6 391.5,341.8 383.6,346.5 375.7,349.6 371,352.8 363.8,351.2 360,351.2" />
<polygon points="360,180 374,180 373,184.5 368,186 363.8,187.5 360,188" />
<polygon points="1240,428 1231.3,430.5 1214.9,435.2 1196.1,436.4 1172.7,443.4 1149.2,447 1128.2,448.1 1111.7,443.4 1090.6,447 1076.6,455.2 1060.2,473.9 1043.8,488 1027.4,502 1008.6,516.1 992.2,530.2 973.4,532.5 964.1,541.9 965,556 966.4,567.7 971.1,563 982.8,566.5 996.9,563 1018,560.6 1032,565.3 1043.8,570 1046.1,560.6 1048.4,551.3 1055.5,541.9 1064.9,537.2 1071.9,544.2 1081.3,546.6 1090.6,541.9 1102.4,539.5 1118.8,532.5 1132.8,527.8 1144.6,523.1 1161,523.1 1170.3,513.8 1184.4,507.9 1207.9,504.4 1231.3,513.8 1240,517" />
<polygon points="1086.7,565.9 1096.8,559.1 1107,569.3 1120.5,565.9 1134.1,562.5 1137.4,549 1147.6,538.8 1161.1,535.4 1174.7,537.1 1188.2,542.2 1200.1,552.3 1205.1,572.7 1195,586.2 1184.8,599.7 1178.1,609.9 1171.3,620 1164.5,609.9 1151,599.7 1137.4,599.7 1123.9,606.5 1113.7,613.3 1103.6,620 1093.4,630.2 1086.7,643.7 1079.9,656 1066.3,656 1066.3,637 1069.7,623.4 1059.6,616.7 1052.8,606.5 1063,599.7 1076.5,589.6 1081.6,576" />
<polygon points="1223.8,520.2 1215.3,528.6 1205.1,542.2 1203.5,549 1211.9,545.6 1220.4,535.4 1225.5,525.3" />
<polygon points="971.6,569.3 958,569.3 944.5,572.7 934.3,582.8 924.2,593 914,598 903.9,599.7 897.1,606.5 886.9,609.9 880,612.5 876,618 873,628 871.5,640 870.5,656 1034.2,656 1029.1,643.7 1027.4,630.2 1019,620 1005.4,620 1005.4,613.3 1015.6,606.5 1017.3,596.3 1008.8,589.6 995.3,593 981.7,593 973.2,582.8" />
<polygon points="887,579 890.5,576 893.7,578.5 893,583 889.5,584.5 887.2,582.5" />
</g>
<polygon points="1046,562 1052,548 1066,542 1082,549 1098,545 1102,556 1092,562 1084,572 1070,584 1056,590 1046,578" fill="#f3f3f3" filter="url(#sb)"/>
<polygon points="920.8,656 922,640 926,628 931,626.8 934.3,632 932,644 934,656" fill="#fff" filter="url(#sb)"/>
<g fill="#ececec" filter="url(#sb)"><polygon points="870.5,510.5 875.5,510 877.5,515 876,523 874.5,531 872.5,541 870,550 867,557 863,556.5 862,550 864,541 866,531 867.5,520" /><polygon points="878,597 882.5,590.5 886,597 884,611 879,622 875,617 876,606" /><polygon points="1109,388 1112,384 1118,383.7 1122.5,388 1121.5,394.5 1116,398 1110.5,395.5" /></g>
<polygon points="1095.5,402 1100,398.7 1105,400 1106,405.5 1101.5,409.7 1096.5,408" fill="#f6f6f6" stroke="#e6e6e6" stroke-width=".8"/>
<g fill="none" stroke="#626262" stroke-width=".85" stroke-linejoin="round">
<polyline points="626,181.5 631.2,187.9 635.2,203.7 637.8,219.6 644.4,227.5 651,236.7 665.5,235.4 676.1,236.7 682.7,242 681.3,259.1" />
<polyline points="631.2,187.9 623.3,193.2 612.8,195.8 605.4,201.1" />
<polyline points="631.2,185.3 647,185.3 660.2,195.8 668.2,190.6 669.5,181.5" />
<polyline points="711.7,181.5 710.4,193.2 699.8,201.1 701.1,214.3 707.7,224.8 711.7,232.8 702.4,236.7 691.9,236.7 686.6,246 682.7,251.2" />
<polyline points="1109.7,446.4 1117,455 1116,465 1108,470 1106.5,481 1091,480 1080,494 1076,500 1058,503 1047,503 1041,512 1037,528 1040,536 1047,547" />
<polyline points="1015,512 1016,526 1021,538 1030,539 1037,528" />
<polyline points="1106.5,481 1116,481 1125,474 1134,462 1145,463 1158,461 1168,466 1174,472 1187,468 1192,462 1190,450 1184,440" />
<polyline points="1116,481 1119,496 1122,510 1126,526" />
<polyline points="1187,468 1182,480 1178,495 1181,508" />
<polyline points="1214,436 1219,446 1226,452 1218,462 1222,466 1231,468" />
<polyline points="1188,549 1175,552 1162,557 1150,560 1140,565 1139.5,573 1126,575 1110,579 1103,590 1098,604 1088,607 1091,616 1083,624 1076,628 1077,645" />
<polyline points="1139.5,573 1150,577 1160,578 1166,590 1174,597 1179,598" />
<polyline points="1139.5,573 1138,565 1140,560" />
<polyline points="911,604 924,603.5 936,606 942,607 940,614 930,622" />
<polyline points="893.5,614 897,624 903,632 910,639 920,643" />
<polyline points="983,594 982,602 970,604 962,614 960,626 964,631 972,636 978,627 985,632 990,645 994,652" />
<polyline points="964,631 955,628 946,630 941,637 934,639" />
</g>
<polygon points="804.9,203.2 808.5,209.6 812.2,218.7 816.7,228.7 820.4,236.9 824.9,247.9 830.4,257 836.8,267 842.2,273.4 847.7,282.5 853.2,291.6 857.7,298.9 863.2,306.2 866.9,313.5 869.6,322.6 872.4,327.8 871.4,335.6 874.4,343.4 875.4,353.2 873.4,363 873.4,372.7 871.4,382.5 870.5,392.3 870.5,400 873.4,403 870.5,407.9 874.4,409.8 880.2,404 882.2,405.9 881.2,411.8 878.3,419.6 877.3,429.4 874.4,437.2 873.4,447 873,450 869.5,454.7 867.1,460.5 862.5,465.2 860.1,472.3 856,475.2 853.1,479.3 849.6,481.6 843.7,484 840.2,481.6 835.5,482.2 834.3,487.5 832,481.6 827.3,479.3 823.8,478.1 820.3,475.2 818.5,472.8 820.3,479.3 822.6,484 815.6,481.6 812.1,481.6 808.6,484 807,487 806.5,491 808,495.5 811,497 812.7,499.5 811.8,502.9 809.3,505.5 807.6,504.6 805.9,501.2 803.4,500.4 803,496 802.5,494.5 797.5,493.2 792.4,495.3 787.3,492.8 785.6,489.4 784.3,483.5 783,489 781.4,490.2 777.1,490.2 772.9,492.8 767.8,494.5 767.8,498.7 768.3,503.8 767.4,507.6 765.3,508.8 761.9,508 760.5,510 759.4,513.1 758.5,517.3 761.1,520.7 764.5,522.4 767.8,525.8 770.4,527.5 770.4,532.5 768.8,532 767.8,529.1 764.5,524.9 760.7,521.5 756,516.5 754.3,513.1 754.7,508 755.2,503 753.5,500.4 754.5,497.5 756,493.5 752.5,494.7 751.3,498.2 747.8,501.7 743.1,505.2 740.8,509.9 744.3,511.1 747.8,513.4 750.7,517 750.2,520.5 746.6,524 743.1,527.5 739.6,529.8 737.3,526.3 733.8,524.6 729.1,525.2 727.3,524 730.2,518.1 733.8,514.6 736.1,509.9 733.8,507.6 730.2,511.7 725.5,515.2 722,519.3 718.5,522.8 716.2,526.3 712.7,529.3 708,529.3 706.2,525.2 705,518.1 703.9,525.2 702.1,529.8 698.6,531 695.1,534.5 693.3,539.2 690.4,541 686.9,536.3 688,532.2 685.7,528.7 683.4,523.4 678.7,520.5 674.6,517 673.4,511.7 675.7,506.4 679.3,501.7 681,497 680.4,490 679.9,485.3 682.8,484.2 684,480.7 681,476 678.1,473.6 675.8,470.1 676.9,466.6 679.9,463.1 681.6,458.4 684,453.7 686.9,449 691.6,446.1 698.6,444.1 695.1,443.1 688.1,442.5 685.7,440.2 686.9,437.3 691.6,433.8 695.1,430.2 696.3,426.7 699.8,425.6 699.8,422 696.3,418.5 695.1,415 695.7,413 703.9,410.6 699.2,410 696.3,405.3 692.8,400.7 689.3,397.1 690.4,391.3 688.7,386.6 690.4,383.1 687.5,379.5 686.3,370.2 685.2,363.1 683,362.3 681.1,370.2 683.4,377.2 682.2,379 679.3,376 677.5,370.2 675.2,363.1 673.4,358.4 671.7,355.5 666.4,356.7 669.9,353.8 668.2,351.4 664.7,353.8 664.1,350.2 666.4,345.6 669.3,340.3 673.4,337.3 675.5,336 677,341 679.3,345.5 681,340.6 681.7,335.9 678.5,333.5 678.1,331.2 682.8,330 687.5,327.7 691,330 696.9,332.4 701.6,333.5 706.3,337.1 711,341.2 713.3,340 709.8,339.4 706.9,334.7 705.1,330 702.8,325.3 699.2,320.7 701.6,317.1 706.3,316 707.4,310.1 701.6,306.6 700.4,304.2 696.3,301.9 695.1,296 694.5,290.2 694,285.5 691.6,278.4 691,270.8 696.3,270.2 698.1,266.7 698.6,264.3 699.2,257 702.8,253.3 708.3,249.7 711,244.2 714.7,240.6 718.3,236 722.9,232.4 727.4,228.7 732.9,226.9 740.2,225.6 747.5,226.3 754.8,225.6 762.1,227.8 767.5,226 773,228.7 780.3,228.4 787.6,227.8 794,225.1 798.5,220.5 801.8,215 803.1,208.7" fill="none" stroke="#fff" stroke-width="4.5" stroke-opacity=".85" filter="url(#sb)"/>
<g fill="#5b8ebf" stroke="#56789a" stroke-width=".5" stroke-linejoin="round">
<polygon points="804.9,203.2 808.5,209.6 812.2,218.7 816.7,228.7 820.4,236.9 824.9,247.9 830.4,257 836.8,267 842.2,273.4 847.7,282.5 853.2,291.6 857.7,298.9 863.2,306.2 866.9,313.5 869.6,322.6 872.4,327.8 871.4,335.6 874.4,343.4 875.4,353.2 873.4,363 873.4,372.7 871.4,382.5 870.5,392.3 870.5,400 873.4,403 870.5,407.9 874.4,409.8 880.2,404 882.2,405.9 881.2,411.8 878.3,419.6 877.3,429.4 874.4,437.2 873.4,447 873,450 869.5,454.7 867.1,460.5 862.5,465.2 860.1,472.3 856,475.2 853.1,479.3 849.6,481.6 843.7,484 840.2,481.6 835.5,482.2 834.3,487.5 832,481.6 827.3,479.3 823.8,478.1 820.3,475.2 818.5,472.8 820.3,479.3 822.6,484 815.6,481.6 812.1,481.6 808.6,484 807,487 806.5,491 808,495.5 811,497 812.7,499.5 811.8,502.9 809.3,505.5 807.6,504.6 805.9,501.2 803.4,500.4 803,496 802.5,494.5 797.5,493.2 792.4,495.3 787.3,492.8 785.6,489.4 784.3,483.5 783,489 781.4,490.2 777.1,490.2 772.9,492.8 767.8,494.5 767.8,498.7 768.3,503.8 767.4,507.6 765.3,508.8 761.9,508 760.5,510 759.4,513.1 758.5,517.3 761.1,520.7 764.5,522.4 767.8,525.8 770.4,527.5 770.4,532.5 768.8,532 767.8,529.1 764.5,524.9 760.7,521.5 756,516.5 754.3,513.1 754.7,508 755.2,503 753.5,500.4 754.5,497.5 756,493.5 752.5,494.7 751.3,498.2 747.8,501.7 743.1,505.2 740.8,509.9 744.3,511.1 747.8,513.4 750.7,517 750.2,520.5 746.6,524 743.1,527.5 739.6,529.8 737.3,526.3 733.8,524.6 729.1,525.2 727.3,524 730.2,518.1 733.8,514.6 736.1,509.9 733.8,507.6 730.2,511.7 725.5,515.2 722,519.3 718.5,522.8 716.2,526.3 712.7,529.3 708,529.3 706.2,525.2 705,518.1 703.9,525.2 702.1,529.8 698.6,531 695.1,534.5 693.3,539.2 690.4,541 686.9,536.3 688,532.2 685.7,528.7 683.4,523.4 678.7,520.5 674.6,517 673.4,511.7 675.7,506.4 679.3,501.7 681,497 680.4,490 679.9,485.3 682.8,484.2 684,480.7 681,476 678.1,473.6 675.8,470.1 676.9,466.6 679.9,463.1 681.6,458.4 684,453.7 686.9,449 691.6,446.1 698.6,444.1 695.1,443.1 688.1,442.5 685.7,440.2 686.9,437.3 691.6,433.8 695.1,430.2 696.3,426.7 699.8,425.6 699.8,422 696.3,418.5 695.1,415 695.7,413 703.9,410.6 699.2,410 696.3,405.3 692.8,400.7 689.3,397.1 690.4,391.3 688.7,386.6 690.4,383.1 687.5,379.5 686.3,370.2 685.2,363.1 683,362.3 681.1,370.2 683.4,377.2 682.2,379 679.3,376 677.5,370.2 675.2,363.1 673.4,358.4 671.7,355.5 666.4,356.7 669.9,353.8 668.2,351.4 664.7,353.8 664.1,350.2 666.4,345.6 669.3,340.3 673.4,337.3 675.5,336 677,341 679.3,345.5 681,340.6 681.7,335.9 678.5,333.5 678.1,331.2 682.8,330 687.5,327.7 691,330 696.9,332.4 701.6,333.5 706.3,337.1 711,341.2 713.3,340 709.8,339.4 706.9,334.7 705.1,330 702.8,325.3 699.2,320.7 701.6,317.1 706.3,316 707.4,310.1 701.6,306.6 700.4,304.2 696.3,301.9 695.1,296 694.5,290.2 694,285.5 691.6,278.4 691,270.8 696.3,270.2 698.1,266.7 698.6,264.3 699.2,257 702.8,253.3 708.3,249.7 711,244.2 714.7,240.6 718.3,236 722.9,232.4 727.4,228.7 732.9,226.9 740.2,225.6 747.5,226.3 754.8,225.6 762.1,227.8 767.5,226 773,228.7 780.3,228.4 787.6,227.8 794,225.1 798.5,220.5 801.8,215 803.1,208.7" />
<polygon points="666.2,616.2 668.1,612.4 673.9,606.5 681.7,602.7 690.4,599.8 700.1,597.8 706.9,597.2 712.7,599.8 715.3,603.6 713.7,608.5 709.8,612.4 704,616.2 696.2,620.1 688.5,622.5 680.7,622.5 674.9,624 672,623 668.1,620.1" />
<polygon points="679.3,267.9 684,266.1 688.7,269.7 690.4,276.1 689.9,283.7 685.2,284.3 680.5,282.5 679.9,278.4 677.5,274.9 678.7,270.2" />
<polygon points="669.9,268.2 673.5,267.2 677.3,268.4 676.8,271.2 672.5,271.6 670.4,270.4" />
<polygon points="674.2,273 677.2,272.6 678.6,276 679.2,280 676.8,280.3 675,277" />
<polygon points="679.3,295.4 684,292.5 689.9,290.2 692.8,291.3 691.6,294.9 686.3,297.2 682.2,298.4" />
<polygon points="662.9,531 665.2,527.5 669.3,524 672.8,520.5 677.5,522.2 679.8,525.7 679.3,529.8 676.3,533.4 671.6,536.3 667.5,537.5 664,535.1" />
<polygon points="697.4,535.1 700.9,533.9 703.9,538 704.5,541.6 700.4,541.6 698,539.2" />
<polygon points="705.6,532.2 709.1,531 715,534.5 712.7,536.9 709.7,540.4 706.8,538" />
<polygon points="717.3,537 721,536.3 724.4,538 722.5,540.4 718.5,540" />
<polygon points="725.5,528 729.5,526.9 733.8,528.2 732.5,530.8 727.5,531" />
<polygon points="688.6,552.1 691.6,547.4 695.1,546.8 698.6,549.8 699.2,554.5 696,554 693.5,551.5 690.4,554.5" />
<polygon points="710.1,550 712.5,548 715,549.5 714.6,552.4 711.5,552.7" />
<polygon points="771.2,497 773.8,492.3 777.6,493.2 778.4,498.7 779.7,502.1 777.1,504.6 776.3,508.4 773.8,508.8 772.1,504.6 770.4,500.4" />
<polygon points="780.5,497 783.1,494 786.5,496.2 787.3,500.4 786.5,504.6 785.6,508.8 786.5,511.4 783.9,509.7 781.4,508.8 779.7,506.3 780.1,502.9 779,500" />
<polygon points="826.2,485.2 828.3,488.5 827.5,491.9 829.6,497 828.8,502.9 825.4,504.6 822.8,508.8 820.3,510.1 819.5,506.3 816.9,503.8 813.5,502.9 812.9,498.7 815.2,495.3 818.6,495.3 821.1,491.9 822.8,487.7" />
<polygon points="833.6,483 835.6,482.6 836,486 834.6,487.7 833.4,485.5" />
<polygon points="747.5,526 750,524 753.5,527 753,531.5 750,532.5 748,530" />
<polygon points="796.6,515.5 799,514.8 800.8,516 799.5,517.3 797,517.2" />
<polygon points="650.3,505 653.5,503.5 656.4,506 655.8,510.5 652.8,513.4 650,510.5" />
<polygon points="655.2,495 659.5,493 663.4,495.5 662.5,500 658.5,501.7 655.6,499" />
<polygon points="661.1,504.5 664.5,502.9 668.1,505 667.5,509.5 663.5,510.5 661.3,508" />
<polygon points="656.4,517 659.5,515.8 662.9,518 662.3,522 658.5,522.8 656.6,520.5" />
<polygon points="664,513.8 667,513.4 668.7,515 667,516.4 664.4,516" />
<polygon points="644.7,517.2 647,516.7 648.8,517.6 647.2,518.7 645,518.6" />
<polygon points="659.9,479 663,477.7 665.2,480 664.6,483 661.5,483.6 660,481.5" />
<polygon points="665.2,481.5 668.5,480 670.5,483 670,488.5 667.2,490 665.5,486" />
<polygon points="671.7,478.5 675,477.1 678.7,479 678,482.5 674,483 672,481" />
<polygon points="670.5,491.5 675,490 679.9,492.5 679,498 674.5,499.4 671,496.5" />
<polygon points="655.2,495.5 660,493.5 665.8,496 664.5,500.5 659,501.8 655.6,499.5" />
<polygon points="671.7,441.5 674.5,439 676.3,440.2 675,442.8 672.5,443.7" />
<polygon points="568.5,254.6 572,253.6 577.3,254.2 576.5,257.3 573.5,259.3 570,258.2" />
<polygon points="572.6,266 575,264.6 576.7,266 575.5,268.5 573.2,268.7" />
<polygon points="958.6,291.5 961,289 965.5,288.4 968.2,290.3 967.5,294 964,296.2 960,295.3" />
<polygon points="793.3,499.6 796,498.6 798.6,500.4 797.5,502.7 794.5,502.3" />
<polygon points="766.2,513.1 768.3,510.5 770,513.9 769.5,518.1 767,519.8 764.9,517.3" />
<polygon points="690.4,309 694.5,307.8 698,310 697,314.5 693,316 690.8,313" />
<polygon points="684,310.2 686.8,309.5 688.7,311.3 687.2,313.6 684.6,313" />
<polygon points="661.7,310 663.5,309.5 667.6,314.6 666.6,316 663,313" />
<polygon points="657,538.5 659.5,537.5 661.7,539.5 660.8,542.7 658,542" />
<ellipse cx="577.8" cy="270.4" rx="1.1" ry="1"/>
<ellipse cx="637.3" cy="280" rx="1.3" ry="1.6"/>
<ellipse cx="668.2" cy="278.8" rx="3.2" ry="1"/>
<ellipse cx="680.5" cy="289" rx="4.2" ry="0.9"/>
<ellipse cx="682.8" cy="301.2" rx="1.7" ry="1.6"/>
<ellipse cx="664" cy="312.3" rx="1.2" ry="1.2"/>
<ellipse cx="656.8" cy="318.5" rx="1" ry="1"/>
<ellipse cx="652.5" cy="316" rx="1" ry="0.8"/>
<ellipse cx="655.5" cy="323" rx="1.3" ry="1"/>
<ellipse cx="677.5" cy="316" rx="1.5" ry="1"/>
<ellipse cx="657.5" cy="461" rx="1.8" ry="1.4"/>
<ellipse cx="663.6" cy="466" rx="1" ry="1.2"/>
<ellipse cx="663" cy="472" rx="1.2" ry="1"/>
<ellipse cx="651" cy="477.5" rx="1" ry="0.8"/>
<ellipse cx="660" cy="487.5" rx="1.5" ry="1.2"/>
<ellipse cx="735" cy="546.5" rx="1.2" ry="1.5"/>
<ellipse cx="738.6" cy="561.2" rx="1.6" ry="2"/>
<ellipse cx="714.7" cy="565.9" rx="0.9" ry="0.9"/>
<ellipse cx="677.5" cy="566.5" rx="1.6" ry="1.6"/>
<ellipse cx="674.8" cy="569" rx="0.8" ry="0.8"/>
<ellipse cx="717" cy="601.7" rx="0.9" ry="1"/>
<ellipse cx="799.2" cy="515.9" rx="2.2" ry="1.4"/>
<ellipse cx="751.7" cy="529" rx="1.7" ry="2.8"/>
<ellipse cx="808" cy="512.5" rx="1" ry="1"/>
<ellipse cx="814" cy="515" rx="1" ry="1"/>
<ellipse cx="800" cy="521" rx="0.8" ry="0.8"/>
<ellipse cx="790" cy="522" rx="0.8" ry="0.8"/>
<ellipse cx="832.5" cy="489.5" rx="0.9" ry="1.2"/>
<ellipse cx="653" cy="541" rx="1" ry="0.8"/>
<ellipse cx="655.5" cy="545.5" rx="1.2" ry="0.8"/>
<ellipse cx="650.8" cy="537.5" rx="0.8" ry="0.8"/>
<ellipse cx="682.5" cy="545" rx="1" ry="0.8"/>
<ellipse cx="686" cy="546.5" rx="0.8" ry="1"/>
<ellipse cx="703" cy="546" rx="0.8" ry="0.8"/>
<ellipse cx="721.5" cy="543" rx="0.9" ry="0.8"/>
<ellipse cx="728" cy="541.5" rx="0.8" ry="0.8"/>
<ellipse cx="683.5" cy="343.5" rx="0.8" ry="0.8"/>
<ellipse cx="660" cy="358.5" rx="0.8" ry="0.8"/>
<ellipse cx="659.5" cy="366" rx="0.7" ry="0.7"/>
<ellipse cx="671" cy="381" rx="0.9" ry="1.1"/>
<ellipse cx="668" cy="386" rx="0.6" ry="0.9"/>
<ellipse cx="657" cy="392" rx="0.9" ry="0.7"/>
<ellipse cx="661.5" cy="393" rx="0.9" ry="0.7"/>
<ellipse cx="654.5" cy="401" rx="0.9" ry="0.8"/>
<ellipse cx="670.5" cy="409" rx="0.8" ry="0.8"/>
<ellipse cx="660.5" cy="419.5" rx="0.7" ry="0.7"/>
<ellipse cx="679" cy="423" rx="4" ry="0.7"/>
<ellipse cx="663.5" cy="437" rx="0.9" ry="1"/>
<ellipse cx="709.5" cy="548.5" rx="0.8" ry="0.8"/>
<ellipse cx="744" cy="548" rx="0.8" ry="0.8"/>
<ellipse cx="757.5" cy="545" rx="0.7" ry="0.7"/>
<circle cx="652.1" cy="517.4" r="0.60" stroke="none" opacity="0.56"/>
<circle cx="648.9" cy="482.3" r="0.77" stroke="none" opacity="0.80"/>
<circle cx="665.3" cy="518.6" r="0.63" stroke="none" opacity="0.66"/>
<circle cx="652.6" cy="544.9" r="0.64" stroke="none" opacity="0.75"/>
<circle cx="664.4" cy="526.2" r="0.42" stroke="none" opacity="0.87"/>
<circle cx="646.8" cy="489.1" r="0.47" stroke="none" opacity="0.74"/>
<circle cx="663.7" cy="471.6" r="0.38" stroke="none" opacity="0.95"/>
<circle cx="649.9" cy="486.4" r="0.31" stroke="none" opacity="0.89"/>
<circle cx="648.4" cy="526.8" r="0.75" stroke="none" opacity="0.56"/>
<circle cx="650.1" cy="471.7" r="0.45" stroke="none" opacity="0.84"/>
<circle cx="669.0" cy="499.9" r="0.67" stroke="none" opacity="0.57"/>
<circle cx="648.7" cy="508.4" r="0.42" stroke="none" opacity="0.89"/>
<circle cx="681.4" cy="535.8" r="0.69" stroke="none" opacity="0.92"/>
<circle cx="653.2" cy="529.5" r="0.37" stroke="none" opacity="0.73"/>
<circle cx="688.2" cy="555.0" r="0.68" stroke="none" opacity="0.56"/>
<circle cx="658.4" cy="503.9" r="0.33" stroke="none" opacity="0.90"/>
<circle cx="647.1" cy="480.9" r="0.58" stroke="none" opacity="0.80"/>
<circle cx="649.7" cy="523.3" r="0.78" stroke="none" opacity="0.91"/>
<circle cx="647.7" cy="546.2" r="0.66" stroke="none" opacity="0.87"/>
<circle cx="658.2" cy="529.1" r="0.48" stroke="none" opacity="0.84"/>
<circle cx="661.0" cy="545.9" r="0.51" stroke="none" opacity="0.77"/>
<circle cx="650.3" cy="500.9" r="0.57" stroke="none" opacity="0.56"/>
<circle cx="653.5" cy="545.9" r="0.69" stroke="none" opacity="0.80"/>
<circle cx="694.6" cy="541.8" r="0.45" stroke="none" opacity="0.81"/>
<circle cx="663.7" cy="541.2" r="0.49" stroke="none" opacity="0.61"/>
<circle cx="676.1" cy="475.9" r="0.58" stroke="none" opacity="0.88"/>
<circle cx="683.8" cy="546.3" r="0.55" stroke="none" opacity="0.90"/>
<circle cx="665.4" cy="478.6" r="0.61" stroke="none" opacity="0.73"/>
<circle cx="668.6" cy="550.9" r="0.37" stroke="none" opacity="0.80"/>
<circle cx="667.8" cy="520.2" r="0.55" stroke="none" opacity="0.60"/>
<circle cx="654.4" cy="471.1" r="0.33" stroke="none" opacity="0.73"/>
<circle cx="656.4" cy="537.8" r="0.57" stroke="none" opacity="0.67"/>
<circle cx="659.0" cy="552.4" r="0.68" stroke="none" opacity="0.72"/>
<circle cx="667.3" cy="540.1" r="0.79" stroke="none" opacity="0.58"/>
<circle cx="672.9" cy="476.8" r="0.33" stroke="none" opacity="0.64"/>
<circle cx="666.2" cy="540.2" r="0.60" stroke="none" opacity="0.56"/>
<circle cx="647.5" cy="512.9" r="0.74" stroke="none" opacity="0.92"/>
<circle cx="665.1" cy="554.3" r="0.76" stroke="none" opacity="0.71"/>
<circle cx="653.4" cy="524.6" r="0.34" stroke="none" opacity="0.82"/>
<circle cx="689.5" cy="557.0" r="0.52" stroke="none" opacity="0.60"/>
<circle cx="654.1" cy="516.3" r="0.38" stroke="none" opacity="0.92"/>
<circle cx="671.9" cy="501.5" r="0.38" stroke="none" opacity="0.79"/>
<circle cx="646.8" cy="507.2" r="0.59" stroke="none" opacity="0.76"/>
<circle cx="694.5" cy="556.6" r="0.77" stroke="none" opacity="0.87"/>
<circle cx="671.3" cy="519.8" r="0.50" stroke="none" opacity="0.71"/>
<circle cx="647.3" cy="545.9" r="0.42" stroke="none" opacity="0.56"/>
<circle cx="670.7" cy="538.2" r="0.52" stroke="none" opacity="0.70"/>
<circle cx="645.6" cy="526.3" r="0.57" stroke="none" opacity="0.90"/>
<circle cx="756.1" cy="540.9" r="0.31" stroke="none" opacity="0.56"/>
<circle cx="780.8" cy="511.8" r="0.33" stroke="none" opacity="0.60"/>
<circle cx="749.4" cy="509.6" r="0.59" stroke="none" opacity="0.55"/>
<circle cx="752.0" cy="516.5" r="0.49" stroke="none" opacity="0.57"/>
<circle cx="774.8" cy="532.5" r="0.67" stroke="none" opacity="0.93"/>
<circle cx="747.9" cy="534.1" r="0.52" stroke="none" opacity="0.64"/>
<circle cx="755.6" cy="535.8" r="0.52" stroke="none" opacity="0.76"/>
<circle cx="802.7" cy="503.7" r="0.64" stroke="none" opacity="0.57"/>
<circle cx="733.6" cy="537.6" r="0.64" stroke="none" opacity="0.71"/>
<circle cx="809.4" cy="506.4" r="0.79" stroke="none" opacity="0.64"/>
<circle cx="741.3" cy="530.4" r="0.45" stroke="none" opacity="0.70"/>
<circle cx="822.8" cy="514.6" r="0.44" stroke="none" opacity="0.82"/>
<circle cx="819.2" cy="515.4" r="0.49" stroke="none" opacity="0.84"/>
<circle cx="777.8" cy="535.5" r="0.49" stroke="none" opacity="0.69"/>
<circle cx="777.7" cy="525.1" r="0.65" stroke="none" opacity="0.92"/>
<circle cx="814.4" cy="520.1" r="0.49" stroke="none" opacity="0.92"/>
<circle cx="753.3" cy="541.6" r="0.35" stroke="none" opacity="0.73"/>
<circle cx="769.7" cy="542.1" r="0.74" stroke="none" opacity="0.61"/>
<circle cx="783.3" cy="532.7" r="0.38" stroke="none" opacity="0.88"/>
<circle cx="743.7" cy="533.4" r="0.60" stroke="none" opacity="0.75"/>
<circle cx="762.3" cy="524.7" r="0.43" stroke="none" opacity="0.65"/>
<circle cx="828.8" cy="516.3" r="0.73" stroke="none" opacity="0.79"/>
<circle cx="832.4" cy="508.5" r="0.77" stroke="none" opacity="0.86"/>
<circle cx="776.7" cy="536.9" r="0.66" stroke="none" opacity="0.73"/>
<circle cx="785.7" cy="511.9" r="0.31" stroke="none" opacity="0.82"/>
<circle cx="735.6" cy="542.5" r="0.79" stroke="none" opacity="0.91"/>
<circle cx="830.2" cy="508.3" r="0.38" stroke="none" opacity="0.64"/>
<circle cx="748.8" cy="506.0" r="0.38" stroke="none" opacity="0.56"/>
<circle cx="826.0" cy="518.8" r="0.61" stroke="none" opacity="0.73"/>
<circle cx="730.1" cy="516.0" r="0.46" stroke="none" opacity="0.78"/>
<circle cx="729.4" cy="547.8" r="0.42" stroke="none" opacity="0.76"/>
<circle cx="778.6" cy="540.9" r="0.75" stroke="none" opacity="0.68"/>
<circle cx="721.5" cy="527.6" r="0.60" stroke="none" opacity="0.83"/>
<circle cx="790.6" cy="502.2" r="0.62" stroke="none" opacity="0.92"/>
<circle cx="769.1" cy="542.1" r="0.37" stroke="none" opacity="0.91"/>
<circle cx="743.3" cy="532.5" r="0.72" stroke="none" opacity="0.83"/>
<circle cx="676.8" cy="465.0" r="0.34" stroke="none" opacity="0.59"/>
<circle cx="674.1" cy="462.3" r="0.64" stroke="none" opacity="0.67"/>
<circle cx="671.2" cy="379.6" r="0.61" stroke="none" opacity="0.66"/>
<circle cx="656.3" cy="359.3" r="0.77" stroke="none" opacity="0.61"/>
<circle cx="665.9" cy="443.3" r="0.32" stroke="none" opacity="0.91"/>
<circle cx="661.5" cy="330.7" r="0.67" stroke="none" opacity="0.95"/>
<circle cx="690.4" cy="427.9" r="0.76" stroke="none" opacity="0.94"/>
<circle cx="674.1" cy="324.6" r="0.72" stroke="none" opacity="0.71"/>
<circle cx="653.4" cy="303.2" r="0.43" stroke="none" opacity="0.79"/>
<circle cx="675.5" cy="313.8" r="0.33" stroke="none" opacity="0.85"/>
<circle cx="670.6" cy="301.2" r="0.58" stroke="none" opacity="0.73"/>
<circle cx="655.0" cy="344.4" r="0.45" stroke="none" opacity="0.69"/>
<circle cx="680.3" cy="328.4" r="0.52" stroke="none" opacity="0.79"/>
<circle cx="689.9" cy="319.5" r="0.34" stroke="none" opacity="0.63"/>
<circle cx="658.7" cy="316.1" r="0.43" stroke="none" opacity="0.62"/>
<circle cx="671.2" cy="448.1" r="0.66" stroke="none" opacity="0.63"/>
<circle cx="672.4" cy="275.8" r="0.64" stroke="none" opacity="0.58"/>
<circle cx="677.7" cy="281.6" r="0.75" stroke="none" opacity="0.60"/>
<circle cx="677.6" cy="299.2" r="0.79" stroke="none" opacity="0.78"/>
<circle cx="685.4" cy="288.5" r="0.37" stroke="none" opacity="0.79"/>
<circle cx="667.2" cy="275.6" r="0.38" stroke="none" opacity="0.55"/>
<circle cx="689.1" cy="289.2" r="0.68" stroke="none" opacity="0.67"/>
<circle cx="679.1" cy="293.9" r="0.69" stroke="none" opacity="0.92"/>
<circle cx="669.0" cy="289.0" r="0.54" stroke="none" opacity="0.71"/>
</g>
<g clip-path="url(#skc)">
<path d="M540.1 751.1l132.7-137.9M632.5 576.6l39.9 35.6M672.8 613.2l-.4-1M671.4 357l6.2-.2M671.8 368.8l5.8-12M699.7 429.4l-15.7 .9M699.7 429.4l-.9 6.8M698.8 436.2l-14.8-5.9M838.4 248.1l-17.1 1.6M821.3 249.7l0-9.5M885.4 222.1l-64.2 18.1M706.1 635.1l-10.7-17.1M706.1 635.1l-7.1-17.1M699 618l-1.4-1.5M695.4 618.1l1.5-1.3M697.6 616.5l-.6 .3M701.1 615.9l2.9 3.4M700.9 615.9l-.2 1.1M704 619.3l-3.3-2.3M698.5 613.9l2.4 2M698.5 613.9l-.9 2.6M699 618l1.7-1M595 832.1l81.6-211M672.8 613.2l3.9 3.1M676.6 616.3l-.1 4.8M684 623.4l-1.7-2.5M676.6 621.1l5.7-.2M671.4 357l.7-7.4M672.1 349.6l-7-.5M648 349l17.1 .2M761.5 526.2l-10.4 2.2M750.7 534.1l.4-5.7M431.9 443.3l221.1 60.3M653 503.6l4.4 3.1M768.2 404.5l1.6 1.4M768.9 407l1-1.2M767.5 408.1l1.4-1.1M768.2 404.5l-1.9 0M767.5 408.1l-1.4-.9M766.3 404.4l-.3 2.8M768.4 409.9l-.9-1.8M767.4 411.5l-2.9-1.2M764.5 410.3l-.7-2.1M768.4 409.9l-1 1.6M763.8 408.2l2.2-1M637.6 416.3l42.9-40.5M669.6 370l11.5 2.9M681.1 372.8l-.6 3M677.6 356.7l1.4-.2M678.9 356.6l-3.7 10.4M874.7 297.5l-11.9 15.1M913.8 290.8l-48.8 26.3M862.8 312.7l.6 4M865.1 317.1l-1.6-.4M693.8 575.9l5.3 23.5M724 580.2l-21.7 20.2M702.3 600.3l-3.2-.9M796.4 508.6l-2-8.8M796.4 508.6l-11.9-5.8M794.4 499.9l-11.9-.6M784.4 502.8l-2.1-3.1M782.3 499.7l.1-.5M777.7 510.7l6.8-7.8M777.8 505l4.5-5.3M743 532.9l-3.4-5M739.6 527.9l-13.3 16.9M666.3 498.6l-8.6 2M661.5 489.1l-3.9 11.5M653 503.6l4.7-3M666.1 500.9l-2.8 4.8M666.1 500.9l.2 6M663.3 505.6l1.5 1.5M666.3 506.9l-1.6 .2M657.8 507.2l5.5-1.5M661.4 513.3l3.4-6.2M817.3 233.8l-5.4 4.6M817.3 233.8l1.8 6.8M811.8 238.4l1.5 5.2M819 240.6l-5.7 3.1M821.2 240.2l-2.2 .4M819 230.7l-1.3 2.1M817.7 232.8l-.5 1.1M823 259.2l-6-8M823 259.2l15.4-11.1M821.3 249.7l-4.3 .8M817 250.5l0 .7M800.3 222.2l-18.1-8.4M801 230.6l-.8-8.4M795.8 230.9l5.2-.4M795.8 230.9l-4.1-3M791.7 228l-8.8-7.7M822.9 259.4l-2.1 .7M822.9 259.4l.3 .9M816.7 269.7l0-5.4M816.7 269.7l1-.4M823.2 260.2l-5.5 9.1M820.7 260.1l-4 4.2M848.4 304l-.9 2.8M848.4 304l5.5 3.5M847.6 306.9l1.1 5.2M854 307.6l-5.2 4.5M856.8 296.9l-3.6-.8M856.8 296.9l-4.1 3M852.7 299.9l-.8-.3M851.9 299.6l1-3.2M853.2 296.1l-.3 .3M854.1 294.4l56.4-25.6M854.1 294.4l-.9 1.7M859.5 304.2l15.2-6.6M859.5 304.2l-6.8-4.3M856.9 307.6l2.6-3.4M856.9 307.6l-2.9 0M848 302.7l.5 1.4M848 302.7l1.2-2.3M849.2 300.4l2.8-.7M834.2 297.3l3.2-.3M834.2 297.3l-1.7-9.4M837.4 297l3.2-2.9M832.5 287.9l5.4 .9M840.6 294.1l-.3-4.5M837.9 288.8l2.4 .8M834.1 310l5.8-1.9M834.1 310l-.4 8.9M833.7 318.9l4.4 .7M844.3 313.1l-2.6-3.9M844.3 313.1l-4.3 6M840.1 319.1l-1.9 .5M841.8 309.2l-1-.8M840.7 308.4l-.8-.3M848.4 313l.3-1M848.4 313l-4 0M847.6 306.9l-5.8 2.3M848 302.7l-1.3 .1M846.6 302.8l-5.9 5.7M846.6 302.8l-6.6-1.9M840.1 300.9l-.2 7.3M768.9 407l1.1 .8M770 405.9l.6 1M770.5 406.9l-.5 .9M768.4 409.9l2.3 0M770.1 407.8l.7 2.1M773.6 403.6l.6 .5M770 405.9l3.7-2.3M770.5 406.9l2.9 2.8M774.2 404.1l-.7 5.7M770.7 409.9l2.8 .5M773.5 409.7l0 .7M798.2 416.2l.9 .1M804.1 410.6l-5 5.7M798.7 408.2l1.5-1.1M798.7 408.2l-.6 8M804.1 410.6l-2-2.8M802.1 407.7l-1.9-.6M768.2 404.5l2.4-2.5M773.6 403.6l-.9-1.7M770.7 401.9l2 0M863.8 393.1l5.3 5.6M863.8 393.1l-2.3 2.5M866.6 401l-5.1-5.5M867.4 400.5l.5-.4M866.6 401l.8-.5M869 398.6l-1.1 1.5M861.1 395.8l.4-.3M866.6 401l-1 .9M861.1 395.8l3 5.1M865.6 401.9l-1.5-.9M844.6 400l-2 3.7M844.6 400l-2.6-3.3M838.4 397.1l2.9-.8M838.4 397.1l1.6 6.9M839.9 404l2.7-.3M841.3 396.4l.7 .3M845 392.8l-3 3.9M850.3 396.8l-5.3-4.1M850 398.2l-5.4 1.8M850.3 396.8l-.3 1.4M849.6 355.8l3.9-6.3M858.6 349.7l-5.1-.2M858.6 349.7l1.6 2.4M849.6 355.8l6-.9M855.6 354.9l4.6-2.7M841.4 328.1l-3.2-8.5M841.4 328.1l1.4 .2M840.1 319.1l4.7 1.9M842.8 328.3l1.8-.7M844.6 327.6l.2-6.6M918.1 306.1l-48.6 18.3M869.5 324.4l-1.1-.5M865.1 317.1l.4 1.5M868.4 323.9l-2.9-5.3M868.4 323.9l-6.7 .2M865.5 318.5l-3.8 5.5M684 623.4l1.3-2M682.4 620.8l2.9 .6M683.5 617l-.6 3.2M683.5 617l1.3 3.2M682.9 620.3l1.9-.1M685.3 621.5l.9-1M696.7 653.8l-10.6-33.3M682.4 620.8l.5-.6M684.8 620.2l1.4 .1M724 580.2l-11.7 19.4M712.4 599.6l-1.2 6.1M711.2 605.7l3.1 2.1M730.7 645.5l-17.8-36.1M714.3 607.8l-1.4 1.6M713 609.4l-1.8-2.9M711.2 605.8l0 .6M698.8 436.2l.7 .6M699.5 436.8l-1.2 8M698.3 444.8l-7.4 0M672.1 442.7l18.7 2.1M668.9 441.4l3.2 1.4M671.8 469.8l4.9 .1M676.7 469.9l3.1-.5M679.8 469.4l2.6-4.3M668.9 441.4l13.7 22.9M682.4 465.1l.2-.8M671.8 469.8l5.9 8.8M676.7 469.9l4.1 5.8M677.7 478.6l3.2-2.8M674.8 485.6l3.1-3.3M677.7 478.6l.2 3.7M776.1 534.6l-12.1-11.6M761.8 524.8l2.2-1.8M745.1 442.6l1.6 6.1M745.1 442.6l-5.6 2.2M738.6 445.6l.9-.8M738.6 445.6l4.9 5.3M743.5 450.9l3.2-2.2M745.1 442.4l0 .2M745.1 442.4l-4.8-3.5M740.4 438.9l-3.3 1M737.1 439.9l2.4 4.9M760 407.7l-2.5 2.6M760 407.7l3.2 5.3M757.5 410.3l4 7M763.1 413l-.1 2.9M763 415.9l-1.5 1.4M797.8 416.4l.3-.2M797.8 416.4l-4.3-5.4M798.7 408.2l-2.4 .7M796.4 408.9l-2.9 2M699.6 448.9l.4-2.6M699.6 448.9l2 4.5M700 446.2l3.7-.1M703.7 446.1l4.2 6.3M701.6 453.3l6.3 .7M707.9 454l0-1.6M697.9 451.1l1.8-2.2M697.9 451.1l-3.3 .6M694.6 451.7l-3.7-6.8M698.3 444.8l1.7 1.4M759.5 471.2l-1.9-4.2M757.7 467l-5.2-2.7M752.5 464.3l-.3 5.3M752.2 469.6l.5 1.8M759.5 471.2l-1.3 .3M758.3 471.5l-5.6-.2M782.4 499.2l-1.1-3.1M794.4 499.9l0-1.2M781.3 496.1l13 2.5M780.8 494.9l-5.9 2.9M774.9 497.8l-1.9-6.7M773 491.1l7.3 1.6M781.3 496.1l-.5-1.2M777.8 505l-3.3-5.6M774.5 499.4l0-.9M774.4 498.5l.5-.6M774.4 498.5l-3.3-1.1M772.8 490.9l.2 .2M769.3 494.6l3.5-3.6M771.1 497.4l-1.9-2.8M734.5 523.6l-.3 5.3M734.5 523.6l1.5-3M736 520.6l3.8 2.9M734.2 528.9l4.7-4M739.8 523.5l-.9 1.5M739.6 527.9l-.7-2.9M739.8 523.5l2.6-.3M742.4 523.2l2.9 3.2M751.1 528.4l-3-2.4M748.1 526l-1.6 .4M828.8 204.3l-17.5 17.2M823.1 222l-11.8-.5M823.1 222l-11.6 3.6M811.3 221.5l-1.8 .3M811.5 225.7l-2-3.9M828.8 204.3l-20.7 9.3M808 213.6l-1.2 5.7M809.5 221.8l-2.7-2.5M808 213.6l-29.5-9.9M800.3 222.2l4.8-1.1M806.8 219.3l-1.7 1.8M801.9 231l4.6-1.4M801.9 231l.5 5.5M810.3 236.6l-5.5 1.2M810.3 236.6l-.3-2.5M810 234.1l-1-3.9M806.5 229.6l2.3 .5M802.5 236.5l2.4 1.3M801 230.6l.9 .4M805.1 221.1l1.4 8.5M795.4 233.7l5.3 4.4M795.8 230.9l-.4 2.8M800.7 238.2l1.8-1.7M811.8 238.4l-1.5-1.8M817.7 232.8l-7.8 1.4M819 230.7l-10.1-.4M811.5 225.7l-2.7 4.4M795.4 233.7l-1.1 3.4M800.7 238.2l-.6 .9M800.1 239.1l-5.5-.5M794.3 237.1l.3 1.4M791.7 228l-1 8.3M794.3 237.1l-3.5-.9M782.1 223.9l7 12.6M789.1 236.5l1.7-.2M820.7 260.1l-6.2-2.5M816.7 264.3l-2.5-4.1M814.2 260.2l.3-2.7M817 251.2l-2.5 5.7M814.4 257l.2 .6M814.4 257l-6-.1M810.4 262l.3 0M810.4 262l-4.3-2.6M810.7 262l3.5-1.8M808.4 256.9l-2.3 2.5M837.9 288.8l-2.6-3.8M832.5 287.9l-1.6-2.4M835.3 285l-4.3 .5M841.9 284.7l-1.7 4.9M841.9 284.7l-3.6-.6M835.3 285l3.1-.9M823.2 260.2l3.3 6M817.7 269.3l7.4-2.1M826.5 266.2l-1.4 1M812.3 320.6l-2.2 .3M812.3 320.6l2 7.3M807.1 333.4l-1.5-4.1M807.1 333.4l1.7 .4M807.2 322.7l2.9-1.7M808.8 333.8l5.5-5.8M807.2 322.7l-.2 .2M807.1 322.9l-1.4 6.4M846.8 296.4l2.9-2.8M846.8 296.4l-4.1-2.2M842.7 294.2l7.7-6.9M849.7 293.6l.9-2.2M850.7 291.4l-.3-4.1M849.2 300.4l-2.4-4M852.9 296.5l-3.2-2.9M840.1 300.9l-2.7-3.9M840.6 294.1l2.1 .1M841.9 284.7l6-5.4M853.6 277.7l-3.1 9.6M854.1 294.4l-3.4-3M801.5 417.5l-2.4-1.2M805.5 417l1-3.7M805.5 417l-4 .5M804.1 410.6l1.3 1.2M806.4 413.4l-1-1.6M798.4 403.3l-5.5-1.1M799.3 404.1l-.9-.8M799.3 404.1l1 2.9M796.4 408.9l-6.6-5.9M789.8 403l3.1-.8M767.4 411.5l0 2.7M764.5 410.3l-1.3 2.7M763 415.9l4.1-1.3M767.4 414.2l-.2 .5M773.5 410.4l.3 .4M773.8 410.8l-.7 1.5M767.4 414.2l5.7-1.9M803.8 381.8l-3.8 .4M803.8 381.8l-.1 1.3M803.7 383l-2.3 3.2M799.9 382.2l-.4 2.9M799.5 385l1.8 1.2M830.2 378.5l-.5-2.9M829.1 383.8l1.1-5.3M828.5 384.7l-4.7-.3M829.1 383.8l-.6 .9M823.7 384.4l.2-3.5M829.7 375.7l-5.8 5.3M763.8 408.2l-3.1-.7M760 407.6l.8-.2M766.3 404.4l-1.6-2.5M760.8 407.5l4-5.6M768.7 394.9l4.5 3.4M768.7 394.9l0-.5M768.7 394.4l.6-.3M769.3 394.1l5.7-.3M773.2 398.3l1.8-4.5M764.6 399.5l4-4.6M764.6 399.5l6 2.5M773.2 398.4l-.6 3.5M774.9 393.9l.4-.3M773.2 398.4l5.2-.8M775.3 393.5l3.1 4.1M776.5 355.8l3.1-2.8M776.5 355.8l-3.9-2M779.6 353l-5.6-.8M772.6 353.8l1.4-1.6M782.1 352l-2.5 1M782.1 352l1.6 7.4M777.2 362.7l6.6-3.3M776.5 355.8l-1.6 5.4M777.2 362.7l-1.1 .1M774.9 361.2l1.2 1.5M772 366.4l-3.9-2.7M766.5 368.1l5.5-1.7M766.3 368l1.9-4.3M871.6 448l-.1 .6M876.9 454.1l-5.5-5.6M871.6 448l1.3-2.1M872.9 445.8l1.3-.6M860.3 456l.8 2.7M860.3 456l1.9-1.5M862.2 454.5l3.4-.7M862.5 459.4l-1.4-.7M862.5 459.4l4.9-3.7M865.6 453.7l1.5 1.5M867.4 455.7l-.3-.5M852.3 473.6l1.7-1.1M851.5 472.9l.8 .6M851.5 472.9l1.7-2.1M853.1 470.9l.9 1.5M859.2 398.6l-3.8 2.1M859.2 398.6l.9 1.7M860.1 400.3l.4 2.5M860.5 402.8l-4.6 .3M855.4 400.7l.5 2.4M850.7 396.2l3.6-2.7M850.7 396.2l-.4 .6M860 396.4l-.8 2.1M860 396.4l-5.4-3M854.6 393.4l-.2 .1M850 398.2l5.4 2.4M864.1 401l-4-.7M860 396.4l1.1-.6M817.2 400.8l3.5-3.1M817.2 400.8l-3.1-1.6M813.8 395.3l.3 4M818 392.8l2.8 4.7M818 392.8l-4.2 2.5M820.8 397.8l0-.3M835 396.6l-1.8 2.1M838.4 397.1l-3.4-.5M839.8 404l-6.6-5.3M825.1 401.9l5.7 .2M825.1 401.9l-1.1-2.1M824.1 399.8l4.3-4M828.3 395.8l4 3.3M830.8 402.1l1.5-3M856.5 385.7l.2 4M856.5 385.7l.6-.7M857.1 385.1l6-1.5M856.7 389.7l7.2 2.7M863.1 383.6l2.4 5.4M863.9 392.5l1.8-3M865.6 389l.1 .4M850.9 388.1l3.5 5.4M850.9 388.1l3-2.1M853.9 386l2.6-.3M854.6 393.4l2.1-3.7M863.8 393.1l.1-.6M871.4 398.1l-2.4 .6M873.5 397.2l-7.8-7.7M892.2 389.4l-26.6 .1M853.8 379l4.5-1.8M853.8 379l3.3 6.1M863.1 383.6l.2-.4M858.3 377.2l3.7 .8M863.3 383.2l-1.2-5.3M841.8 355l-.8-1M841 354l0-.8M841 353.2l5.6-5.4M841.8 355l5.6 1.6M846.7 347.8l2 8.3M847.4 356.6l1.2-.6M942.3 355.3l-67.9-1.5M933.1 340.9l-60.7 6.4M872.4 347.3l-1.1 .3M871.3 347.6l-.8 .9M874.4 353.8l-3.7-3.2M870.4 348.5l.2 2.1M874.4 353.8l-6 3.9M870.7 350.6l-2.3 7.1M860.2 352.2l1.3 1.1M856.9 359.1l1 .3M856.9 359.1l-1.3-4.2M857.9 359.4l3.6-6.2M867 348.8l3.5-.3M867 348.8l-4.5 4.7M868.2 358l.2-.3M868.2 358l-2.3-1.2M865.9 356.8l-3.5-3.3M867.3 331.8l-.6 3.4M867.3 331.8l25.3 3.1M866.7 335.2l2.6 3.7M892.6 334.9l-20.6 4.3M871.9 339.2l-2.3 0M869.3 338.9l.3 .4M869.5 324.4l-2.3 7.2M872.4 347.3l-.4-8.1M871.3 347.6l-3-5.5M868.3 342.2l1.3-3M852.3 317.8l4.9-6.6M852.3 317.8l.1 .9M852.4 318.7l7.5 .3M857.2 311.2l.5 .4M857.8 311.6l3.4 6.1M861.2 317.6l-1.2 1.3M856.9 307.6l.3 3.7M848.4 313l3.9 4.7M844.8 321l6.9-.4M851.6 320.6l.8-1.9M862.8 312.7l-5-1.1M863.4 316.7l-2.3 1M861.7 324l-1.8-5M696.7 653.8l-8-32.2M686.2 620.3l1.6 .3M688.7 621.6l-.9-1M693 623.5l-3.1-3.3M688.7 621.6l1.2-1.4M690.2 618.4l-.4 1.3M690.2 618.4l-.3-.4M688.3 617.9l0 2.3M688.3 617.9l1.5 .1M688.3 620.1l1.5-.4M693.2 619.4l-3-.9M693 623.5l.2-4.2M689.9 620.2l-.1-.5M686.4 617.3l-.2 3M686.4 617.3l1.9 .6M687.8 620.6l.5-.5M684.5 610.8l-1.6 5M684.5 610.8l.8 .6M685.3 611.5l-1.5 4.6M682.9 615.8l.7 .3M679.4 615l3.5 .8M679.4 615l.4-1.2M679.9 613.7l4.1-3.5M684.1 610.2l.4 .6M676.6 616.3l2.8-1.3M683.5 617l.1-.9M686.4 617.3l-.7-1M685.8 616.3l-2-.2M695.4 618.1l-.9 .1M693.2 619.4l.6-.7M694.5 618.2l-.7 .4M693.5 615.2l-1.2 1.2M693.5 615.2l.9 3M693.8 618.6l-1.5-1.7M692.3 616.9l.1-.5M702.5 604.7l-.2-4.4M712.4 599.6l-7.4 5.1M702.5 604.7l.4 .4M704.9 604.6l-2.1 .4M714.6 246l3.3-1.3M714.6 246l1.7-6.4M718 244.7l-1-4.6M716.4 239.6l.6 .5M722.9 244l2-3.7M722.9 244l-1.3-.1M721.7 243.9l-.8-2.3M720.9 241.6l2.7-2.3M723.5 239.3l1.4 1M717 240.1l3.9 1.5M720.1 246.3l-2.1-1.6M720.1 246.3l1.6-2.4M631.9 110.7l84.5 128.9M631.7 109.1l91.7 128.9M723.4 238l.2 1.3M699.7 429.4l.9-.7M668.8 426.5l31.5 .6M700.6 428.7l-.4-1.6M707.4 459.3l1.8-1.7M707.4 459.3l-1.2 .7M706.2 460l-4.3 1M709.3 457.6l-1.4-3.6M700.2 457.5l.4 2.4M700.2 457.5l1.4-4.2M700.6 459.9l1.3 1.1M700.2 457.5l-2.3-2.4M697.9 455.1l-.6-1.7M697.9 451.1l-.6 1.8M697.3 452.9l0 .5M694.6 451.7l-1 1.5M697.3 452.9l-3.7 .3M691.2 490.5l-1 1.8M691.2 490.5l-1.1-1.4M687.1 494.6l3.2-2.3M687.1 494.6l-1.7-3.5M690.1 489.1l-4.7 2.1M683.4 490.1l2.2-5.1M678.7 491.1l4.8-1M677.8 482.3l1.8-.1M679.6 482.2l6 2.9M690.1 489.1l.1-4.5M685.4 491.2l-1.9-1M690.1 484.6l-1.8-.6M688.4 484l-2.7 1.1M772.5 489.9l1.3-2.9M772.5 489.9l-2.6-.5M773.8 487l-3.3-3.2M770.5 483.8l-3.4 1.2M769.9 489.4l-2.8-4.4M720.5 448l-.1 2.1M720.5 448l-1.2-.3M719.3 447.7l-.1 2.2M720.3 450.1l-1.2-.2M717 443.7l2.3 4M717 443.7l2.5-2.6M722.9 444.8l-3.2-3.7M722.9 444.8l-2.5 3.2M738.6 445.6l-.8 .3M737.1 439.9l-.5 0M737.8 445.9l-1.2-6M743.5 450.9l-.7 .7M742.8 451.7l-3.2 1M739.6 452.7l-2.8-6.1M737.8 445.9l-1.1 .7M740.5 435.9l-.8-1.3M740.5 435.9l-.1 1.5M740.4 437.4l-4.9-1.6M739.6 434.6l-4.2 1.2M742.8 434.9l-2.3 1M742.8 434.9l1.9-3.3M744.7 431.6l-4.8-1.7M739.9 429.8l-.7 2.9M739.2 432.8l.4 1.8M742.8 434.9l5 3.2M747.8 438.2l-2.6 4.1M740.4 438.9l0-1.5M739.2 432.8l-4.5 .7M734.1 436.1l1.4-.3M734.7 433.5l-.6 2.6M744.7 431.6l2.2-.3M747.8 438.2l1.1-1.1M748.9 437.1l-1.9-5.8M751.6 451.9l5.4-5.3M750.4 451.6l1.2 .3M748.4 449.5l5.7-4.9M748.4 449.5l2 2.1M757 446.6l-2.9-2.1M748.4 449.5l-1.7-.7M745.2 442.3l8.7 .8M754.1 444.5l-.2-1.4M798.8 464.9l-2.6-5.5M796.2 459.4l0-.3M798.8 464.9l4.5-3.8M803.3 461.2l-4.1-3.8M796.2 459.1l3-1.8M762.8 441.1l0 .6M762.8 441.1l1.7-7.9M768.5 443.1l3.4-4.1M771.9 439l-1.3-4.5M764.5 443.8l-.5-.1M764.5 443.8l4-.7M762.7 441.7l1.2 2.1M770.6 434.5l-6.1-1.2M792.8 411.1l-4.4-6.7M792.8 411.1l-1.6 1.7M790.6 412.6l-4.7-4.6M790.6 412.6l.6 .3M785.9 408l.8-2.3M786.7 405.7l1.7-1.2M789.3 403l.5 0M789.3 403l-.9 1.5M793.5 410.9l-.7 .2M796.7 417.4l-5.7-.4M791 417l.3-4.2M797.8 416.4l-1.1 1.1M785.8 412.7l-1.4-3.1M785.8 412.7l4.8-.1M784.4 409.6l1.5-1.6M784.3 417.6l6 .3M785.8 412.7l-1.5 4.8M790.3 417.9l.7-.8M692.4 470.7l-5.1-.3M692.4 470.7l1.4-4.6M690.5 465.8l2-.7M690.5 465.8l-3.1 3.6M687.4 469.4l-.1 .7M687.3 470.1l0 .3M693.7 465.9l-.4-.6M692.4 465.1l.9 .2M687.1 463.3l-.5 .8M687.1 463.3l3.8 .4M690.9 463.8l1.5 1.4M686.9 464.8l-.4-.7M686.9 464.8l3.5 1M686.9 464.8l.5 4.6M682.6 464.2l4-.2M682.4 465.1l4.8 5M701.8 461.5l.1-.6M701.8 461.5l-8 4.4M699.7 459.9l.9 0M694.2 462.3l-.9 3.1M694.2 462.3l5.5-2.4M679.8 469.4l4.6 2.9M680.8 475.7l3.6-3.5M687.3 470.4l-1.8 1.9M684.4 472.3l1.1 .1M766.7 476.8l-5.4-2.4M761.1 471.9l.1 2.5M770.2 472l-3.5 4.9M770.2 472l-.2-1.6M761.1 471.9l4.5-2.8M765.6 469.2l4.4 1.2M774.3 462.2l.1 5.9M774.4 468.2l-3.6 1.6M774.3 462.2l-4.6 .9M769.7 463.2l1.1 6.6M744.9 456.9l-5.9 3M744.9 456.9l.7 .4M745.6 457.3l-2.9 5.3M739 459.9l2.5 2.2M741.5 462.1l1.2 .5M750.4 451.6l-2.1 6.5M742.8 451.7l2.1 5.2M748.4 458.1l-2.8-.8M748.4 458.1l2.1 4.4M750.5 462.5l-3.9 1.1M746.6 463.6l-.8 0M742.7 462.6l1.5 .9M745.8 463.7l-1.6-.1M737.7 460.8l1-1M737.7 460.8l1.1 5.3M741.5 462.1l-1.8 3.9M738.7 459.8l.3 .1M738.7 466.1l1-.1M770.2 472l2 3.2M777 476.6l.4-7.8M774.4 468.2l3 .6M770.8 469.8l-.8 .6M777 476.6l-2.6 .3M774.4 476.9l-2.2-1.8M759.7 479.2l2 .9M759.7 479.2l1.6-4.7M766.7 476.8l.1 1.5M766.8 478.3l-5.2 1.8M811.5 454.7l-1.5-1.4M810 453.3l-2 2M808.1 455.4l.5 4.1M811.5 454.7l.6 6.3M812.1 461.1l-3.6-1.5M806.7 469.4l-5.1-.5M806.7 469.4l.8-.4M801.6 468.9l-3.2-2.8M798.8 464.9l-.4 1.2M807.6 469l-4-7.8M811.5 454.7l3 .1M814.6 454.8l.1 4.1M814.6 458.9l-2.5 2.2M783.8 520.3l-19.6 2.6M804.5 492l2.1 .3M804.5 492l-10.4 4.1M794.4 498.7l8.4-2.2M806.6 492.2l-3.9 4.3M796.5 508.9l9.8-9.3M802.8 496.5l3.5 3.1M799.2 487.8l-4.9 7M794.3 494.7l-.1 1.3M799.2 487.8l.8-.1M804.5 492l-3.7-3.9M800 487.7l.8 .4M806.8 485.5l-5.9 2.6M806.8 485.5l-2.7-2.5M800 487.7l3.1-5.1M803.1 482.6l1 .3M779.1 488.5l1.8-2M779.1 488.5l-3.8-2.1M780.9 486.4l-1.7-2.7M775.3 486.4l1.2-2.7M776.5 483.6l2.7 0M783.6 492.7l1-7.4M784.6 485.3l-3.7 1.1M780.3 492.7l-1.2-4.3M773.8 487l1.6-.7M772.8 490.9l-.3-1M684.1 610.2l.6-1M681.8 607.3l.6 2.2M683.9 610.2l-1.6-.8M681.8 607.3l.8-1.4M684.7 609.2l.2-1.5M684.8 607.7l-2.3-1.8M725 240.4l2.3 .9M726.2 245.3l1-2.2M726.2 245.3l-3.2-1.3M727.3 241.3l-.2 1.9M780.8 260l2.7-3M780.8 260l10.9 9.1M783.5 257l10.3 5.3M791.7 269.1l.4 0M794 267.2l-2 2M794 267.2l.6-3.2M794.6 263.9l-.8-1.6M817 250.5l-1.1-1.1M808.4 256.9l-.1-2.8M808.3 254.1l7.6-4.7M804.8 237.8l.9 8.4M813.4 243.7l-.4 1M813 244.7l-7.3 1.5M813 244.7l2.9 4.7M777.5 234.6l4.4 5.8M782.1 223.9l-4.5 10.8M789.1 236.5l-1.5 3.8M781.9 240.4l5.6-.2M848 279.3l-11.8-3.2M836.2 276l6.9-20.2M826.5 266.2l3.5 0M830 266.2l7-5.3M808.8 333.8l.5 .9M819.5 330.7l-3.2 3.8M814.3 328l5.2 2.7M809.2 334.6l7.1-.2M802 315.1l8.2 5.9M802 315.1l-1.1 3.5M807.2 322.7l-6.6-1.5M800.7 321.1l.3-2.5M802 315.1l-1.6-4.3M800.4 310.8l-2.8-1.4M797.6 309.4l-.2 8.7M800.9 318.6l-3.5-.6M795.1 310.2l.5 9.8M795.6 319.9l.9 .3M797.6 309.4l-1.5-1.1M796.1 308.3l-1 1.9M797.4 318l-.9 2.2M846.7 347.7l1.6-2.4M848.2 345.3l-7.2 .3M846.7 347.7l-5.3-.1M841 345.6l.3 2M841 353.2l-.8-3.1M841.4 347.6l-1.1 2.5M841 345.6l-1.1-2.5M842.9 338.3l5.3 7M842.9 338.3l-1.4 .2M841.5 338.5l-1.5 4.6M769.6 304.2l8.6 .8M769.4 303.4l.2 .8M769.4 303.4l4.3-4M773.7 299.5l4.5 5.6M767.8 309.7l2 2.7M779.3 307.1l-9.6 5.2M769.6 304.2l-1.8 5.5M779.3 307.1l-1-2M823.3 318.8l-2.5 2.8M823.3 318.8l6-.6M829.3 318.2l3.5 1.4M822.4 323.8l-1.5-2.3M822.4 323.8l9.4-1.3M831.8 322.6l1.1-3M820.3 313.9l3 4.9M821.3 312.4l-1 1.5M821.3 312.4l3-.4M824.3 312l5.1 6.2M804.7 283.4l-12.1-1.8M804.7 283.4l-5 6.6M799.7 290l-7.5-5.5M792.6 281.6l-.6 .6M792.2 284.5l-.3-2.4M792 282.1l-6.3-1.8M794.6 277.2l-2 4.4M794.6 277.2l-2.5-8M791.7 269.1l-3 1.4M788.7 270.6l-3 9.8M779.3 261l1.6-1M779.3 261l-.4 1.7M778.8 262.7l7.8 7.9M788.7 270.6l-2.1 .1M797.2 296.7l.4-3.2M797.2 296.7l-6.3-.6M797.6 293.5l-7.6-3.3M791 296.1l-1.2-5.7M790 290.1l-.2 .3M803.2 299.8l2.2-6.2M799.7 290.2l5.7 3.4M800 301l3.2-1.2M800 301l-2.7-4.3M799.7 290.2l-2.1 3.3M796.1 308.3l3.9-7.3M790.1 306l6 2.3M790.1 306l-2-5.3M788.1 300.7l2.9-4.6M792.2 284.5l-2.2 5.6M804.7 283.4l1.7-.7M794.6 277.2l10-3.3M806.5 282.7l-1.9-8.8M810.5 290.8l-.3-4.4M810.5 290.8l-5.1 2.8M810.2 286.3l-3.3-3.4M806.5 282.7l.4 .2M794 267.2l11.5 4.1M804.5 273.9l1-2.7M803.3 260.9l.3-.7M806.1 259.3l-2.6 .9M803.3 260.9l2.4 10.3M810.4 262l-4.1 9.1M806.3 271l-.6 .1M794.6 263.9l8.7-3.1M838.3 284.1l-5-6.2M830.9 285.5l-1.3-.9M829.7 284.6l3.7-6.7M836.2 276l-2.4 .5M833.4 277.9l.4-1.4M837 260.9l-3.5 15.4M833.8 276.6l-.3-.2M819.1 293.6l1.2-7.1M819.1 293.6l7.3-1.9M820.3 286.5l7.1-.1M826.4 291.7l1-5.3M810.2 286.3l7.6-3M810.5 290.8l6 5.9M816.5 296.6l2.6-3.1M817.8 283.3l2.5 3.2M812.3 320.6l.2-.2M805.5 310.2l4.3 1.5M800.4 310.8l5-.7M809.8 311.7l2.7 8.7M820.9 321.6l-8.4-1.2M820.3 313.9l-3 1.5M817.3 315.4l-4.7 5M820.1 330.8l-.5-.1M821.8 329.6l-1.7 1.2M821.8 329.6l.6-5.8M825.9 300.1l-.3 5.6M825.9 300.1l5-2.5M830.9 297.6l2.3 .2M833.3 297.8l-.3 10.9M833 308.7l-5.6-.6M827.3 308.1l-1.7-2.4M826.4 291.7l4.5 5.9M816.5 296.6l.1 1.1M816.6 297.8l9.3 2.4M829.2 284.7l-1.8 1.7M834.2 297.3l-1 .5M829.7 284.6l-.5 .1M834.1 310l-1.2-1.3M833.7 318.9l-.9 .6M824.3 312l3.1-3.9M821.3 312.4l-2.9-5.8M818.4 306.6l7.2-.8M815.5 300.2l.8 4.8M815.5 300.2l-7.7 1.4M807.8 301.6l-.3 3.5M807.5 305.1l5.5 3.4M816.2 305l-2.1 2.7M814.1 307.7l-1 .7M816.6 297.8l-1.2 2.5M818.4 306.6l-2.2-1.6M803.2 299.8l4.5 1.8M805.5 310.2l2-5.1M809.8 311.7l3.3-3.2M817.3 315.4l-3.2-7.6M800.3 335.7l-.4-6.7M807.1 333.4l-6.8 2.3M805.6 329.3l-3.5-1.4M799.9 329l2.2-1.1M807.1 322.9l-4.5 2.8M802.6 325.7l-.5 2.2M788.1 400l4.4-2M788.1 400l1.2 3M792.9 402.2l1.8-4.6M792.5 398l2.2-.3M761.3 417.9l1.6 2.7M761.3 417.9l-3.1 .7M758.1 418.6l-.6 6.9M757.6 425.6l5 1.7M762.5 427.3l.7-5.8M762.9 420.6l.4 1M767.1 414.6l3.2 3.3M773.1 412.3l0 2M773.1 414.3l-2.8 3.6M771.7 422.7l-8.4-1.1M762.9 420.6l7.4-2.6M771.7 422.7l.4-1.4M772.1 421.2l-1.7-3.2M761.3 417.9l.2-.6M780.8 398l-2.4-.3M780.8 398l-.3 1.4M774.2 404.1l6.3-4.7M801.2 401.5l3.7 .1M799.3 404.1l1.9-2.7M802.1 407.7l4.1-2.9M806.2 404.8l-1.3-3.2M811.7 400.1l-3.6 3.4M811.7 400.1l1.2 6.1M811.5 406.8l.5 .1M811.5 406.8l-3.5-2.6M807.9 404.2l.2-.6M812.9 406.3l-.9 .6M806.4 413.4l.9 0M807.3 413.4l5.2-4M805.4 411.7l6-5M812.5 409.4l-.5-2.5M806.2 404.8l1.7-.6M807.1 400.5l1.1 3.1M805.2 399.1l1.8 1.4M804.9 401.6l.3-2.5M819.1 406.2l-1.5-1.5M817.6 404.8l-4.7 1.5M819.1 406.2l-.2 2.1M813.5 410.7l5.2-2.2M818.9 408.3l-.2 .3M812.5 409.4l1 1.3M805.2 399.1l-1.2-2M801.2 401.5l2-4M803.2 397.4l.8-.4M803.7 383l4 3.9M803.8 381.8l1.2-1.5M805 380.3l1 .1M806 380.3l2.7 6.3M807.7 387l1.1-.3M811.3 380.1l-4.5-.3M811.3 380.1l-2 6.6M806 380.3l.8-.6M808.8 386.7l.6 .1M813.8 395.3l-3.2-2.1M818.5 388.8l-.5 4M817.8 386.7l-6.5 1.2M817.8 386.7l.8 2.1M811.3 387.9l-.7 5.3M811.7 400.1l-2.6-1.3M811.7 400.1l.5-.3M812.2 399.8l-3.2-5.5M809.1 398.8l-2.1-3.4M807 395.5l1.3-.8M808.3 394.6l.7-.3M807.1 400.5l2-1.6M817.2 400.8l.4 3.9M814.1 399.2l-2 .6M810.7 393.2l-1.6 1.2M805 395.8l-1 1.3M805 395.8l2.1-.3M850.7 396.2l-2.5-7.6M850.9 388.1l-1.8 .1M848.2 388.6l.2-.2M849.1 388.2l-.6 .2M853.9 386l-3.4-3M849.1 388.2l1.5-5.2M853.4 378.8l-3.4 3.3M853.8 379l-.4-.2M850.5 383l-.5-.9M830.2 378.5l7.6 5.1M837.9 383.6l.1 .2M829.1 383.8l7.2 2.9M836.4 386.7l1.7-2.8M841.3 396.4l-1.5-5.3M835.8 390.6l-.7 1.7M835 396.6l.2-4.4M835.8 390.6l.4-.3M836.1 390.3l3.6 .8M837 372.8l-1.5 0M837 372.8l2.1-9.9M835.5 372.8l-1.5-6.2M834.1 366.6l1.2-2.7M835.2 364l3.3-1.7M839.1 362.8l-.5-.6M829.7 375.7l0-.8M829.7 374.9l5.8-2.1M837.9 383.6l1.1-10.2M839 373.4l-2-.6M843.9 370.6l1.3-5.8M840.5 373.5l3.4-2.9M840.5 373.5l-1.5-.1M845.2 364.6l-6.1-1.8M830.2 364.2l3.8 2.4M831.2 362.3l-.9 2M831.2 362.3l4.1 1.7M831.2 360.9l1.8-1.8M831.2 360.9l0 1.4M833 359.1l5.6 3.1M846 363.4l1.5-6.8M839.2 360l-.6 2.2M841.8 355l-2.6 5M845.2 364.6l.7-1.2M839.2 360l-5.9-4.3M833.4 355.6l-.4 3.5M808.7 375.9l-1.3 1.4M808.7 375.9l-3.5-3.7M807.4 377.4l-3.8-2.3M805.2 372.2l-1.7 2.8M827.8 373.1l-5.8-4.7M822 368.4l-3.9 4.1M828 373.7l-.2-.6M828 373.7l-5.8 1.2M822.2 375l-4.1-2.5M828 373.7l1.7 1.1M830.2 364.2l-1.7 1.4M827.8 373.1l-.2-5.6M828.5 365.6l-.8 2M755.9 402.4l7-2.9M755.9 402.4l2.4 2M758.3 404.4l6.2-4.3M762.9 399.5l1.4-.2M764.5 400.1l.1-.6M764.6 399.5l-.3-.2M755.6 402.2l.6-3.6M756.2 398.6l6.7 .9M755.6 402.2l.3 .2M764.7 401.9l-.2-1.8M760 407.6l-1.7-3.2M757.5 410.3l-2.8 .3M751.6 403.8l-1.4 1.5M755.6 402.2l-3.9 1.6M750.2 405.4l4.5 5.2M772.3 359.8l-1.1-.1M772.3 359.8l.3-6M771.2 359.7l-1-.5M772.6 353.8l-4-1.2M768.6 352.6l1.4 6.1M770.2 359.2l-.2-.5M768.1 363.6l3.1-3.8M774.2 366.6l-2.2-.2M774.9 361.2l-2.6-1.4M776.1 362.8l-1.9 3.8M773.7 347.7l.3 4.5M773.7 347.7l-5.1 2M768.6 349.6l-.5 2.6M768.1 352.2l.5 .4M768.1 352.2l-3.2 1.5M764.9 353.7l5.1 4.9M765.7 359.2l4.4 0M765.7 359.2l-1.1-5.4M818.9 443.8l-.4 .3M818.9 443.8l6.7 4.5M818.5 444.1l2.8 9.3M821.3 453.4l3.1-1.8M824.4 451.6l1.7-2.7M825.6 448.3l.5 .6M865.5 451.7l-1.9-1.7M865.5 451.7l.1 2M862.2 454.5l-1.3-3.9M863.6 450.1l-2.7 .5M854.6 453.5l.1-.7M854.8 452.8l3.7-3.2M860.3 456l-5.7-2.5M860.9 450.6l-2.4-1M867.3 449.2l-1.3 2M867.3 449.2l1.9 .1M866.1 451.2l4 .2M869.2 449.4l.6 .4M869.8 449.7l.5 1.5M870.3 451.2l-.2 .2M865.5 451.7l.5-.6M867.1 455.2l3-3.9M869.6 447.4l2 .5M869.6 447.4l-.4 1.9M871.5 448.5l-1.6 1.2M876.9 454.1l-6.6-3M891.6 474.5l-24.2-18.8M856 469.1l1-1.4M856 469.1l-.9 .1M857 467.7l-3-.3M855 469.2l-1.6-.3M854 467.4l-.6 1.5M862.5 459.4l1.8 2.8M872.2 467.2l-8-5M857 467.7l.4-.1M857.7 470.4l.5-.2M858.2 470.2l.4-1M857.7 470.4l-1.7-1.3M857.4 467.6l1.2 1.6M855.3 471.7l-.1-.3M855.3 471.7l2.2-1.1M855.1 471.4l.7-.8M855.8 470.6l.4-.2M856.3 470.5l1.2 .1M853.2 469.1l.1 1M853.2 469.1l2.6 1.5M853.3 470.1l1.8 1.4M853.2 469.1l.2-.2M855 469.2l1.2 1.3M857.7 470.4l-.2 .2M853.1 469.1l-2.5 .6M853.1 469.1l-3.4-3.2M850.5 469.7l-1.8-1.1M848.7 468.6l0-1.1M849.7 465.9l-1 1.6M860.5 402.8l1 1.6M865.6 401.9l-.6 1.4M865 403.4l-.9 .9M864.1 404.3l-2.7 .1M855.2 408.2l.7-5.1M855.2 408.2l2.1 1.2M861.4 404.4l-4.1 4.9M850 398.2l.7 7.7M842.7 403.8l4 3.1M846.8 406.9l.5 .1M850.7 405.9l-3.4 1.1M855.2 408.2l-.4 0M850.7 405.9l4.1 2.2M830.8 402.1l.9 4.4M831.5 406.7l.2-.2M825.1 401.9l-.7 1.5M828.9 406.6l-3.1-.9M828.9 406.6l2.6 .2M824.4 403.3l1.4 2.3M824.1 399.8l-3.3-2M819.1 406.2l1.2-.1M824.4 403.3l-4.1 2.8M861.7 375.5l-3-3M861.7 375.5l-1.2-5.4M858.6 372.5l1-2.2M860.5 370.2l-.8 .1M858.3 377.2l-1.5-3.6M862.5 377l-.5 1M856.8 373.6l1.8-1.1M862.5 377l-.8-1.4M863.3 383.2l3.4-1.3M864.2 375.4l-1.7 1.6M864.2 375.4l5.5 1.5M869.7 376.9l-3 5.1M865.6 389l8-6.3M866.7 381.9l6.9 .8M868.5 358.6l-2.2 4.6M868.5 358.6l-.3-.7M866.3 363.2l-.8 1.1M863.7 365.6l1.8-1.2M865.9 356.8l-6 5.3M863.7 365.6l-2.5-1.4M861.1 364.2l-1.3-2.2M861.5 353.2l.9 .2M857.9 359.4l.6 1.6M859.9 362l-1.4-1M858.5 361l-3.3 2.7M858.9 365.7l2.3-1.5M858.9 365.7l-1.9 .5M855.1 363.7l1.8 2.5M855.5 369.1l.8-1.7M855.5 369.1l3.3 .7M858.8 369.8l0-4.1M856.3 367.3l.6-1.1M852.4 369.3l2.8-.1M852.4 369.3l-1.7 2.9M855.2 369.2l1.6 4.3M856.8 373.6l-4.7 1M852.1 374.6l-1.3-2M850.9 372.6l-.1-.4M852.9 364.2l3.4 3.2M852 368.1l.5 1.2M852 368.1l1-3.9M855.5 369.1l-.3 .1M843.9 370.6l6.8 1.6M845.3 364.7l6.7 3.4M858.8 369.8l.8 .5M853.4 378.8l-.9-1.5M852.5 377.3l-.3-2.7M850.5 363.5l.4-6.2M850.5 363.5l2.5 .4M853.1 363.7l-.7-5.1M852.4 358.6l-1.6-1.4M846 363.4l4.5 .1M849.4 356l-.8 .1M849.4 356l1.4 1.3M852.9 364.2l.1-.3M855.1 363.7l-2 0M856.9 359.1l-4.5-.5M849.6 355.8l-.2 .2M831.8 444.1l-3.8 .2M831.8 444.1l-.4-3.5M831.4 440.6l-3.1-.8M828 444.3l-2.1-.8M828.3 439.8l-3.2 .7M825.9 443.5l-2.2-2M823.7 441.5l1.4-1M825.6 448.3l.2-4.8M826.2 448.9l1.8-4.5M825.7 436.1l-.6 4.4M825.7 436.1l2-1.2M827.8 434.9l.5 4.8M820.3 441.7l3.4-.3M818.9 443.8l1.4-2.1M820.3 441.7l-.4-1.9M819.9 439.8l.8-2M825.7 436.1l-1.5-.5M824.2 435.6l-3.5 2.2M829.4 432.6l-1.6 2.3M829.4 432.6l-.4-.4M824.2 435.6l-.8-3.5M829 432.3l-5.6-.1M833.2 398.7l-.8 .4M839.8 404l-2.3 2.5M831.7 406.5l1.2 .3M837.5 406.6l-4.5 .2M864.2 433.8l-1.3-2.1M862.9 431.7l-4 1M864.5 434.7l-4.2 2.2M860.3 436.9l-2.3-1.4M864.2 433.8l.3 .9M858.9 432.7l-.9 2.8M846.2 327.9l-1.6-.3M846.2 327.9l4.4-2.8M851.6 320.6l.3 1.2M850.6 325.1l1.3-3.3M861.7 324.1l-2.4 3.4M851.9 321.8l7.4 5.7M867.2 331.6l-7.8-2.7M859.4 328.9l-.1-1.5M848.2 345.3l1.7-.1M853.5 349.5l-2.8-4M850.7 345.5l-.7-.3M869.3 338.9l-5.3 1.6M868.3 342.2l-4.3 1.5M864 340.4l0 3.3M866.7 335.2l-3.6 1.9M864 340.4l-.9-3.4M867 348.8l-3.3-4.7M863.6 344.1l.3-.3M679.7 611.1l1.1-1.6M679.7 611.1l-2.6-3.3M680.9 609.5l-.5-1.4M680.3 608.1l-2.9-1M677.2 607.8l.3-.7M679.9 613.7l-.1-2.7M682.4 609.5l-1.5 0M672.4 612.2l4.8-4.4M681.8 607.3l-1.4 .9M682 604.3l.6 1.6M677.5 599.8l4.5 4.4M677.5 599.8l-.1 7.3M693.5 614.8l-.8-.3M693.5 614.8l.5-.3M692.7 614.5l-.1-1M692.6 613.5l.3-1.6M694.1 614.5l1.3-1.5M695.3 613l-1-1.6M692.9 611.9l1.4-.6M696.9 616.8l-2.9-2.3M693.5 615.2l0-.4M690.6 611.6l2.3 .3M690.2 612.1l.4-.5M690.2 612.1l2.4 1.4M698.5 613.9l0-.3M698.5 613.6l-3.2-.6M685.3 611.5l.2 .1M684.7 609.2l3 .5M687.6 609.7l-2.1 1.9M685.8 616.3l.4-.5M685.5 611.6l1.5 1M687 612.6l-.2 1.8M686.2 615.8l.6-1.4M690.1 612.2l.1 1.8M690.1 612.2l-2.1-.2M688 612l-1 .6M686.8 614.4l3.5-.4M699.1 599.4l-.9 1.2M698.2 600.6l.1 3.1M702.5 604.7l-3.7-.6M698.8 604.1l-.4-.4M691.9 614.7l-1.3-.1M691.9 614.7l.1 1.2M691.9 615.9l-.8 .9M690.5 614.6l-.4 .8M690.2 615.4l.2 1.5M690.3 616.9l.7-.1M690.2 614l.3 .6M692.7 614.5l-.9 .2M692.3 616.5l-.4-.5M692.3 616.9l-1.2-.1M686.2 615.8l4-.4M689.9 618l.4-1.1M707.4 608.8l1.8-2.2M707.4 608.8l-.5 .1M706.9 609l0-1.9M709.2 606.7l-2.3 .4M709.8 608.8l1.4-2.4M709.8 608.8l-2.4 0M711.2 605.8l-2 .8M704.9 604.6l2 2.4M706.7 609.3l-3.4 .2M706.7 609.3l3.1 5.9M704.9 614.3l5.7 4.2M704.9 614.3l-2.6-2.9M703.2 609.4l-.8 1.7M702.4 611.4l0-.3M702.8 605.3l.4 4.1M706.9 609l-.2 .3M709.8 608.8l0 6.3M701.1 615.9l3.8-1.6M698.5 613.6l.4-.5M698.9 613.1l3.5-1.6M698.8 608.4l3.6 2.8M698.8 608.4l4-3M693.7 310.4l-5.3-6.5M693.7 310.4l-1.2 2.5M692.3 313l-5-8.7M695 310.2l2.2 4.2M694.9 310.1l-1.2 .3M697.2 314.4l-4.8-1.5M698.4 315.2l-1.1-.8M684.8 320.2l7.5-7.1M648 349l19.8-4.6M665.1 349.2l4.5-3.8M667.8 344.4l1.8 .9M672.1 349.6l.5-.4M672.6 349.2l-2-3.6M669.6 345.4l1 .2M670.6 341.4l-2.8 3M670.6 341.4l-1.5-9.7M685.8 344.9l-.2-1.7M685.8 344.9l-4 8.1M681.8 353l-.8-.9M681 352.2l1.5-9.4M685.6 343.3l-2.9-.5M682.5 342.8l.3 0M782.1 352l.1-.4M773.7 347.7l.5-.6M782.3 351.5l-5.4-4.9M774.2 347.1l2.6-.4M708.3 438.2l-1.9-2M708.3 438.2l4.2-1.4M712.5 436.9l-2-5.9M706.4 436.2l4.1-5.3M685 366.9l-8.8-.1M675.2 367l1-.3M681.1 372.8l2.4-.5M680.5 375.8l6.4 1.9M730.4 433.1l-2.1 1.5M730.4 433.1l2.3 3.5M730.2 436.4l-2-1.5M730.2 436.4l2.6 .2M728.1 434.9l.2-.3M733.5 437l.6-.9M733.5 437l-.7-.4M733.7 429.8l-3.2 .3M733.7 429.8l1 3.7M730.5 430.1l-.1 3M725.8 435.5l2.4-.6M725.3 438.4l.5-3M726.6 439.1l-1.3-.6M726.6 439.1l3.5-2.7M728 431.7l.4 2.9M728 431.7l-2.5 3.2M725.5 435l.2 .5M730.5 430.1l-.6-.3M728 431.7l.8-1.9M728.8 429.9l1.1-.1M685 498.4l2.6 2.5M685 498.4l-.3-1.8M684.6 496.6l2.4-1.7M687.7 500.9l-.2-5.6M687.1 494.9l.5 .4M679.8 495.9l4.9 .7M678.7 499.1l3.3 2.4M682 501.4l3-3M689.1 495.9l2.5-.6M690.2 492.3l1.3 3M689.1 495.9l-1.5-.6M666.3 506.9l4.3 3.3M693 453.6l1.7 1.2M693 453.6l-6.9 .3M689.3 457.8l2.4 .8M689.3 457.8l-1-.6M691.7 458.6l3.2-1M688.4 457.2l-2.3-3.3M694.7 454.8l.4 1.2M694.9 457.6l.3-1.6M697.2 453.4l-2.5 1.4M693.5 453.2l-.5 .4M672.1 442.7l14 11.2M694.2 462.3l-2.5-3.7M690.9 463.8l-1.6-6M687.1 463.3l1.3-6.1M699.7 459.9l-4.8-2.3M697.9 455.1l-2.7 .9M737.7 460.8l-6.5 5.1M731.2 466l0 .4M738.7 466.1l-5.2 2M731.2 466.4l2.3 1.7M689.1 495.9l2.1 5.2M687.7 500.9l2.8 1.7M690.6 502.6l.7-1.4M693.2 495.5l-1.6-.2M693.2 495.5l-1.5 5.1M691.7 500.6l-.5 .5M723.9 538.4l1.3 2.7M723.9 538.4l-5.7-3M733.1 520.8l-5.9-4.1M733.1 520.8l-4.7 5.2M735.9 520.5l-2.8 .3M734.5 523.6l-6.1 2.5M721.2 524.8l-10.1-2.1M723.9 538.4l-.1-8.2M711.1 522.7l7.1 12.7M742.9 516.2l-.4 6.6M742.4 523.2l.2-.4M742.9 516.2l-1.7-2.1M735.9 520.5l.6-5.6M736.5 514.9l4.6-.8M669 532.5l-1.7 4M669 532.5l1.3-.9M670.3 531.6l.6 .4M671 532l5.1 17M667.3 536.5l3.1 19M661.6 530.4l7.4 2.1M661.6 530.4l5.7 6.1M666.7 523.7l3.3 2.7M670 526.4l.3 5.1M724.3 451.8l-.4 .4M724.3 451.8l5.1 3.2M723.9 452.1l-.8 1.9M723.1 454.1l4 3.7M729.4 454.9l-2.3 2.9M720.3 450.1l3.6 2.1M726.8 447.9l-3.9-3.1M726.8 447.9l-2.5 3.9M711.6 449.2l2.4 0M711.6 449.2l-3.4-6.3M714 449.2l-3.1-5.9M710.9 443.3l-2.8-.5M707.9 452.4l3.7-3.2M703.7 446.1l4.4-3.2M716.8 436.1l-4.3 .8M716.9 443.8l-6-.4M708.3 438.2l-.2 4.6M719.5 441.1l-2.7-5M699.5 436.8l5.3-1.5M704.8 435.4l1.6 .9M733.4 446.3l1.3-6.5M733.4 446.3l-2.1 1.2M731.3 447.5l-1 .4M728.8 440.9l-.2 6.5M728.8 440.9l4.9-2.1M728.6 447.4l1.7 .4M733.7 438.8l1 1M736.7 446.6l-3.3-.4M736.6 439.9l-1.8-.2M739.2 453l-7.9-5.5M739.6 452.7l-.3 .3M719.7 441.1l5.6-2.7M726.8 447.9l1.8-.5M726.6 439.1l2.2 1.8M733.5 437l.3 1.8M751.5 437l3.2-5.7M751.5 437l3.5 2.5M755.6 439.4l-.6 .1M755.6 439.4l2.8-5.1M754.7 431.4l3.9 .9M758.3 434.3l.3-2.1M753.9 443.1l1.1-3.5M748.9 437.1l2.6 0M762.7 441.7l-7.2-2.3M764 443.7l-3.8 3.5M760.1 447.2l-3.1-.7M762.8 441.1l-4.4-6.8M752.7 425.9l4.9-.3M762.4 430.6l.5-2.4M762.5 427.3l.3 .8M752.7 425.9l-.1 .3M752.6 426.1l-.6 1.6M762.4 430.6l-3.7 1.7M752 427.7l2.7 3.7M764.5 433.3l-2.1-2.7M752.6 426.1l-5.4-2.4M747.1 423.7l1.2 4.8M752 427.7l-3.3 1.3M748.3 428.5l.4 .5M747 431.3l.4-.7M748.7 429l-1.3 1.5M768.5 443.1l4.2 4.4M766.6 450.6l-2.1-6.7M766.6 450.6l3.3 .4M769.9 451l2.8-3.4M772.7 447.6l5.8 1.8M771.9 439l6.2 .7M779.6 443.9l-1.5-4.2M779.6 443.9l-.1 2.9M779.5 446.9l-1 2.5M770.6 434.5l2.7-4.2M762.8 428.1l9.5-1.7M773.3 430.3l-.9-3.9M771.7 422.7l.8 3.5M772.4 426.2l-.1 .3M779.5 446.9l8.8-1.3M782.6 453.9l6.3-1.8M782.6 453.9l-3.9-3.8M778.7 450.1l-.2-.8M788.9 452.1l.6-4.4M788.3 445.6l1.2 2.1M812.5 439.2l-2.2-3M812.5 439.2l2.4-3.2M814.9 436l-4.6 .3M805.2 454.6l-4.2-.3M805.2 454.6l.7 .7M805.9 455.4l-1 1.9M804.9 457.3l-4.2-2.9M800.8 454.5l.2-.1M805.1 448.3l1.3 .1M806.4 448.4l-1.2 6.2M805.1 448.3l-4.1 6M806.4 448.4l3.3-.6M810 453.3l-.4-5.5M808.1 455.4l-2.1 0M808.5 459.5l-3.8 .8M804.7 460.3l.2-3M799.2 457.3l.5-2.4M799.7 454.9l1.1-.4M803.5 461.2l1.2-.9M805.7 427.2l-2.2-1.7M805.7 427.2l.8 4M803.5 425.5l-1.2 5.6M802.2 431.1l2 1.2M806.6 431.2l-2.3 1.1M799.7 430.8l2.5 .3M799.7 430.8l-1.2-4.3M803.5 425.5l-.1-.3M798.5 426.4l3-1.3M801.5 425.2l1.9 0M806.4 423.5l-2.9 1.7M808.5 425.1l-2.1-1.7M808.5 425.1l-2.8 2.1M806.3 419.5l.1 3.9M806.3 419.5l-4.1 2.2M803.4 425.2l-1.2-3.4M798.3 423.3l1.9-.9M798.3 423.3l-1.8-1.7M797.1 419.9l-.6 1.8M797.1 419.9l3.7 .9M800.2 422.5l.8-1.1M800.8 420.8l.3 .6M798.5 426.4l-.1-3.1M801.5 425.2l-1.3-2.7M792.3 423.7l4.2-2.1M792 426l.3-2.3M792 426l6.5 .4M790.7 420l-.4-2.1M796.7 417.4l.4 2.5M790.7 420l1.6 3.7M801.5 417.5l-.7 3.3M802.2 421.8l-1.2-.4M805.5 417l.9 2.2M806.3 419.5l.1-.3M793.3 463.4l2.9-4M793.3 463.4l3.5 3.1M798.4 466.1l-1.2 .4M796.8 466.5l.3 0M799.2 487.8l-2.4-3.6M794.3 494.7l-1.5-4.9M792.8 489.8l4-5.7M728.6 462.2l-5.1-.1M728.6 462.2l-1.5-4.4M720.7 456.4l1.5-1.6M723.1 454.1l-.9 .7M720.7 456.4l-.7 2.8M723.5 462.1l-3.5-2.9M684.4 478.9l2 1.1M684.4 478.6l1.6-5.2M686.4 480l2.8-3.7M685.9 473.5l3.3 2.7M679.6 482.2l4.8-3.3M688.4 484l-1-2.6M687.4 481.4l-1-1.4M680.8 475.7l3.5 2.9M685.5 472.4l.4 1.1M706.2 460l1.1 5.6M707.4 465.6l-.2 .9M707.1 466.5l-2.6 .6M701.8 461.5l-.1 1.4M701.7 462.9l2.6 4M701.7 462.9l-.3 .5M701.4 463.4l.9 5.2M704.3 466.9l-2.1 1.6M699.1 467l3.2 1.6M699.1 467l2.3-3.6M731.2 466l-2.3-3.6M728.8 462.4l2.4-3.5M738.7 459.8l-1.5-4.1M731.2 458.9l6.1-3.2M739.2 453l-2 2.6M744.6 468.3l-.6 .7M744.6 468.3l1.6-.6M746.2 467.7l1 1.9M747.2 469.7l-3.2-.6M745.8 463.7l-1.2 4.6M744.2 463.5l-1.6 3.5M742.6 467l1.4 2M746.6 463.6l-.4 4.1M744.2 472.9l3-2.2M747.4 469.9l-.1 .9M742.9 471.5l.2-.6M742.9 471.5l1.3 1.4M743.1 471l.9-1.9M741.1 467.5l2 3.5M741.1 467.5l1.5-.5M739.7 466l.9 1.1M741 467.5l-.5-.3M733.5 468.1l1.5 1.9M740.5 467.2l-5.5 2.8M771 481.7l-3.7-1.9M771.2 481.5l-1.3-3.4M769.8 478.2l-2.9 .3M766.9 478.4l.4 1.4M765.5 484.9l1.6 .1M765.2 484.2l2.1-4.4M765.5 484.9l-.2-.7M770.5 483.8l.6-2.1M776.4 483.1l.1 .5M773.4 480.3l3 2.9M773.4 480.3l-2.2 1.3M772.3 475.2l-2.4 3M773.4 480.3l1-3.3M761.7 480.1l3.6 4.1M786.6 492.8l1-3.9M784.6 485.3l3 3.6M784.7 485.1l0-1.6M779.2 483.7l2.2-1.9M784.7 483.5l-3.4-1.7M776.4 483.1l3.2-5.3M781.3 481.8l-1.7-4M777 476.6l2.6 1M857 473.3l.8-.6M857 473.3l5 1M857.8 472.7l2.5 .3M859.4 480.3l-2.5-6.9M857.3 471.1l.2-.5M858.2 470.2l2.1 2.8M857.3 471.1l.5 1.6M853.4 476.1l-.8-1.3M853.4 476.1l-2.4 .1M852.6 474.8l-.9 .4M851 476.2l.8-1M852.6 473.9l.1 .9M852.3 473.6l.3 .4M851.5 472.9l-.9 1.8M850.6 474.7l1.2 .5M852.6 473.9l1.5-.1M853.4 476.1l.7 .7M854.1 476.8l-.1-3M801.6 468.9l-1.3 1.8M796.5 470.4l.7-3.9M798.3 471.6l1.1-.3M798.3 471.6l-1.8-1.2M800.3 470.7l-.8 .6M913 575l-89.4-71.9M864.7 523.2l-40.4-23M823.5 503.2l.8-3M820.1 507.2l-2.8 52.1M822.2 504.5l1.3-1.3M822.2 504.5l-2.1 2.7M806.6 492.2l3.2-.1M806.2 499.6l3-2.1M809.2 497.5l1-2.8M809.2 497.5l3 6.5M820.1 507.2l-.6-2.6M812.2 504l3.3-2.2M819.5 504.6l-3.9-2.8M742.9 516.2l4.4 .4M742.5 522.8l4.3-2.3M746.8 520.5l.5-3.9M748.1 526l3.3-3.7M746.8 520.5l4.5 1.7M679.3 576.3l8.9 25.2M673.6 575.9l12.5 26.4M688.2 601.6l-2 .8M684 576.6l5 25.3M689 601.8l-.8-.3M689.5 602.9l-.5-1.1M689 601.9l1.9-3.2M689.6 603l.4-.1M690 602.8l1.6-.6M691.6 602.3l-.7-3.5M697.2 600.5l-3.4-2.5M697.2 600.5l-2.8 1.3M694.5 601.8l-.7-3.8M698.2 600.6l-1-.1M777.5 234.6l-5.9 2.8M771.6 237.5l-6.4-4.3M767.1 186.1l-3.7 44M765.2 233.2l-1.4-2.1M763.3 230.1l.4 1M765.2 233.2l-4.8 6M760.4 239.2l-2.8-2.8M763.8 231.1l-6.1 5.3M631.1-12.8l109.8 240.2M748.6 223.5l-3.6 3.4M741 227.6l4.1-.6M793.8 262.3l2.1-6.8M803.6 260.2l-3.2-5.1M800.4 255.1l-4.5 .4M784.3 254.8l7.6-2.1M783.5 257l.8-2.2M791.9 252.7l3.9 2.8M781.8 248.3l.1-7.8M781.8 248.3l.9 1.2M782.8 249.5l7.1-4.4M787.5 240.2l3.8 2.5M789.9 245.1l1.5-2.4M784.3 254.8l-1.6-5.3M791.9 252.7l.4-1M789.9 245.1l2.5 6.6M794.6 238.6l-1.7 3.9M792.9 242.5l-1.5 .2M816 335.3l.3-.8M816 335.3l3.2 3.9M820.1 330.8l2 6.6M819.3 339.2l2.8-1.7M818.1 372.5l-3.8-1.7M819.8 365.5l-1 0M822 368.4l-2.2-2.9M814.2 370.8l4.6-5.3M792.7 327.6l-.7-2.6M792.7 327.6l2 .7M791.9 325l6.4-2.6M794.6 328.3l3.5-.9M798.1 327.4l.7-3.6M798.8 323.7l-.2-1.2M798.6 322.5l-.3-.1M799.9 329l-1.8-1.6M802.6 325.7l-3.8-2M800.7 321.1l-2.1 1.4M796.5 320.2l1.8 2.2M790.1 306l-7.5 3.9M781.2 317.7l1.4-7.8M795.1 310.2l-2.2 3.4M781.2 317.7l3.4 1.2M784.6 318.8l4.2-2.1M792.8 313.6l-4 3.1M794.6 328.3l2.2 6.6M800.3 335.7l-1.3 1.3M799 336.9l-.7-.2M796.8 334.9l1.5 1.8M792.7 327.6l-2.8 3.5M796.8 334.9l-7-3.8M833.4 355.6l0-.7M841 354l-4.8 .2M836.2 354.2l-2.9 .7M841.5 338.5l-5.1-2.8M836.4 335.7l-2.3 7.2M839.9 343.2l-4.1 2.4M834.1 342.8l1.8 2.8M831.8 322.6l-.5 5.9M841.4 328.1l-6 4.4M831.3 328.5l4.1 4M821.8 329.6l7.7-.3M831.3 328.5l-1.7 .8M789.8 290.5l-8.2 1.5M788.1 300.7l-3.1-1.6M785 299.1l-3.3-7.2M785.7 280.3l-2.3-.1M780.2 288.4l3.2-8.1M780.2 288.4l.9 3.4M781.1 291.7l.5 .2M813.8 277.5l.3-6.8M813.8 277.5l2.2 2.5M816 280.1l3.2-6.7M814.9 270.3l-.8 .4M814.9 270.3l1.7-.4M816.6 269.9l2.7 3.5M806.9 282.9l6.9-5.4M806.3 271l7.8-.3M817.8 283.3l-1.7-3.2M810.7 262l4.1 8.3M825.1 267.2l.6 5.8M830 266.2l1.1 7.1M825.7 273l5.4 .3M833.5 276.3l-1.2-.9M831.1 273.3l1.2 2.1M825 280.6l3.6-4.3M825 280.6l-2.8-1.6M822.2 278.9l-.2-2.8M828.7 276.3l-5.4-.8M822 276.1l1.2-.6M829.2 284.7l-4.1-4.1M832.3 275.4l-3.6 .9M817.8 283.3l4.5-4.3M819.3 273.4l2.8 2.8M825.7 273l-2.4 2.5M808.3 418.5l2.6-.3M808.3 418.5l2.8-1.8M810.9 418.2l.3-1.3M806.4 419.2l1.9-.7M810.2 414.3l-2.9-.9M810.2 414.3l.8 2.4M811.4 419.7l-.7-.7M811.4 419.7l-.2-1.3M810.7 418.9l.2-.7M811.2 418.4l-.3-.2M807.8 419.8l2.9-.8M807.8 419.8l-1.4-.6M810.5 424.3l3.1-.4M810.5 424.3l.2-2.8M813.6 423.9l-1.2-3.3M810.8 421.5l1.3-.7M812.1 420.7l.3-.1M808.5 425.1l1.1 .5M809.6 425.6l.9-1.3M807.8 419.8l3 1.7M811.4 419.7l.7 1.1M775 416.2l.2 3.2M775 416.2l4.2-1.9M775.2 419.4l3.3 .1M778.5 419.5l3.3-.4M780.4 415.3l-1.2-.9M780.4 415.3l1.7 3.2M782.1 418.4l-.3 .7M773.1 414.3l1.8 1.9M772.1 421.2l3.1-1.8M776.8 411.1l-3-.2M777.3 411.3l-.5-.2M777.3 411.3l2 3M775.4 425.5l-3 .7M775.4 425.5l3.1-6M775.4 425.5l7.2-.5M782.6 425l-.8-5.9M777.3 411.3l2.8-1.9M780.1 409.4l2.2-.1M783.8 409.8l-1.4-.5M783.8 409.8l-3.3 5.5M784.3 417.6l-2.2 .9M784.4 409.6l-.6 .1M790.7 420l-7.8 5.3M782.9 425.4l-.3-.4M776.8 411.1l1-4.7M780.1 409.4l-.7-3.1M779.4 406.3l-1.6 .2M774.2 404.1l1.2 .5M777.8 406.4l-2.4-1.9M799.7 391.4l4.1 1.8M799.7 391.4l2.3-4.2M803.8 393.2l1.7-4.6M802 387.2l3.7 .7M805.7 387.9l-.1 .7M808.3 394.6l-2.7-6M805 395.8l-1.1-2.5M801.3 386.3l.7 .9M807.7 387l-2 1M809.3 386.7l2 1.2M828 394.9l-3.1-1.5M828 394.9l1.2-1.8M829.2 393.1l0-4.7M824.4 391.7l.6 1.7M824.4 391.7l2.6-3.1M826.9 388.6l1.6-1M828.5 387.6l.7 .8M828.3 395.8l-.3-.9M820.8 397.5l4.2-4M835.1 392.2l-5.9 .9M835.8 390.6l-6.6-2.2M818.5 388.8l5.8 2.9M836.4 386.7l-.2 3.6M828.5 384.7l0 2.8M848.4 388.4l-.8-3.8M850 382.1l-.7 0M847.7 384.5l.1-.4M849.3 382.1l-1.6 2.1M842.3 383.3l1.3 2.2M842.3 383.3l-2.4 .5M839.9 383.8l1.8 6.4M843.7 385.5l1.3 3.6M844.9 389.1l-.7 .8M844.3 389.9l-2.5 .4M838 383.8l1.9 0M839.8 391.1l1.9-.8M848.2 388.6l-3.3 .6M847.7 384.5l-4 .9M845 392.8l-.7-2.9M810.6 375.7l1.1 4.1M810.6 375.7l3.4-4.5M814 371.3l2 9M811.7 379.8l4.3 .4M806.8 379.8l.6-2.4M811.3 380.1l.4-.3M808.7 375.9l1.9-.2M822.4 380.7l-1.8-3.2M822.4 380.7l-2.4 4.8M820.6 377.5l-3.9 3.3M816.7 380.8l1.2 5.8M820 385.5l-1.6 .8M817.9 386.5l.6-.2M824 380.9l-1.6-.2M822.2 375l-1.6 2.5M823.7 384.4l-3.7 1.1M814.1 370.8l-.1 .5M816 380.3l.7 .5M826.9 388.6l-8.5-2.3M827.7 367.6l-1.6-1M819.8 365.5l1-.5M826.1 366.6l-5.3-1.7M828.5 365.6l-.9-1.2M826.1 366.6l-2.2-3.6M827.6 364.4l-3.7-1.4M820.8 365l2.3-2.7M823.9 363l-.8-.7M790 365l0 2.2M786.9 360.9l3.1 4.1M786.5 360.9l-2.3 8.6M786.9 360.9l-.4 0M790 367.1l-2 4.1M788 371.3l-3.8-1.8M774.3 367.9l4.4 3.4M778.7 371.3l3.2-.2M774.2 366.6l.1 1.3M777.2 362.7l6.2 7M781.9 371l1.5-1.3M783.7 359.4l2.7 1.5M783.4 369.7l.8-.2M798 375.2l-.5 2.1M798 375.2l3.9 1.8M801.3 377.7l-3.1 .1M801.3 377.7l.6-.6M798.1 377.8l-.6-.5M798.9 380.9l-1.3-2.1M799.5 381.1l-.6-.2M799.5 381.1l1.8-3.4M797.6 378.8l.5-1M799.5 381.1l.4 1.1M805 380.3l-3.1-3.1M802.4 376l1.2-1M802.4 376l-.4 1M790 367.1l2.7 .5M790 365l3.7 .1M793.7 365.1l-1 2.5M788.3 371.6l-.3-.4M790.8 370.5l-2.5 1.1M790.8 370.5l2.1-2.3M792.9 368.2l-.3-.6M790.8 370.5l2.8-.2M792.9 368.2l1.9 .9M793.6 370.3l1.2-1.2M766.5 368.1l3.6 4M766.3 368l-1 .1M765.3 368.1l-1 3.8M770.1 372l-4.1 1.3M766 373.4l-1.7-1.4M765.5 387.7l-3.9-2.3M761.6 385.5l-2.6 4.1M765.5 387.7l-5.3 2.9M759 389.6l1.2 1M767.4 392.1l-.1-2.4M767.4 392.1l-6.5 .9M765.5 387.7l.3 0M767.4 389.7l-1.6-1.9M760.2 390.6l.7 2.4M770.1 372l1.2 .4M774.3 367.9l-2.4 4.3M771.2 372.4l.6-.3M765.9 382.9l-.9-.2M765.9 382.9l.4-4.6M765 382.7l-1.1-3.6M766.3 378.2l-2.4 .9M761.4 379.5l2.5-.4M761.4 379.5l-.7 2M765 382.7l-4.1-.3M760.7 381.4l.1 1M791.2 395l5.2 .9M791.2 395l-1.6-.5M789.6 394.5l-.4-1.8M789.5 392.4l6.3-1.7M789.5 392.4l-.3 .3M796.9 395.6l.3-3.3M797.2 392.3l-1.5-1.6M796.8 395.8l-.3 .1M794.7 397.6l1.7-1.7M792.5 398l-1.3-3M788.1 400l-.3-.5M787.8 399.5l1.8-5M799.7 391.4l-2.5 .9M803.2 397.4l-6.3-1.8M798.4 403.3l-1.6-7.6M781.8 392.9l.5-1.3M781.8 392.9l-6.3 .1M782.2 391.6l-7.3-3.9M775.4 393l-1.1-2.5M774.4 390.5l.6-2.7M781.3 397.6l.5-4.7M780.8 398l.5-.4M775.3 393.5l.2-.6M769.3 394.1l5.1-3.7M767.4 392.1l1.2 2.3M767.4 389.7l7-3.5M774.4 386.2l.6 1.5M742.2 402.8l3.1-5.6M742.2 402.8l2.9 1.2M745.1 404.1l2.7-6.1M745.3 397.2l2.5 .8M749.7 397l.6 .8M751.6 403.8l-1.3-6M749.7 397l-1.9 1M750.2 405.4l-2.7 .5M747.5 405.9l-2.4-1.8M745.5 412.3l2-6.4M745.5 412.3l1.8 1.9M754 412l-5.6 2.3M754.7 410.6l-.7 1.4M748.4 414.3l-1.1-.1M750 420.8l1.1 .9M750 420.8l-.3-.6M749.7 420.2l1.8-3.6M751.1 421.7l1.4 .9M752.5 422.6l3.5-4M751.5 416.7l3.4 .6M756 418.6l-1.2-1.4M746.7 423.5l-.3-1.2M746.4 422.2l3.6-1.4M747.2 423.7l3.9-2M747.1 423.7l-.4-.2M747.7 418.3l-3.3 2.5M746.4 422.2l-2-1.4M747.7 418.3l2.1 2M747.7 418.3l-.3-4.1M748.4 414.3l3.1 2.4M752.7 425.9l-.2-3.2M758.1 418.6l-2.1 0M754 412l.8 5.2M765.7 359.2l-1.6 2M768.1 363.6l-3.9-1.8M764.1 361.2l.1 .6M765.3 368.1l-2.4-1.8M764.2 361.8l-1.3 4.5M830.2 455.6l1.6-3.5M830.2 455.6l-1.4-1.5M828.8 454l-.5-5.1M831.8 452l-.3-3.9M831.6 448.2l-3.3 .8M830.4 456.9l-.2-1.4M830.4 456.9l1.4 .4M831.8 457.3l3.8-.9M835.8 452.6l-.2 3.8M835.8 452.6l-4-.5M826.2 448.9l2.1 .1M824.4 451.6l4.4 2.4M837.9 449.8l-2.1 2.7M833.9 446.2l4 3.6M833.1 446.2l-1.6 2M833.1 446.2l.8 .1M833.1 446.2l-1.3-2M858.5 449.6l.5-2.2M857.1 443.8l1.9 3.6M854.8 452.8l-.5-1M854.3 451.8l.2-6.4M857.1 443.8l-.7-.3M856.4 443.5l-2 2M826.1 457.2l-4.7 4.2M826.1 457.2l-5.1-2.8M821.4 461.4l-.3-7M814.6 458.9l2.1-.6M814.6 454.8l2-1.4M816.6 453.4l3.7 .9M816.8 458.3l3.5-4M829.8 457.4l-2.2 .5M830.4 456.9l-.6 .4M821.3 453.4l-.4 .8M826.1 457.2l1.5 .6M821.1 454.4l-.1-.2M861.2 446.8l-1.3 .3M859 447.4l.9-.3M863.6 450.1l0-1.3M861.2 446.8l1 .2M862.2 447.1l1.4 1.7M869.6 447.4l-.5-1.3M872.9 445.8l-3.1-.2M869.1 446.1l.7-.5M874.2 445.2l-3.5-2M869.8 445.6l-.2-2.2M870.7 443.2l-1.1 .2M869.8 425.2l3.6-2.2M869.8 425.2l1 1.4M870.8 426.7l8.9 4.9M873.4 423l1.6 .1M875 423.1l13.3 8M859.4 460.2l1.4 3.3M859.4 460.2l-1.4 .5M858 460.7l-.1 .8M857.9 461.5l2.6 2.4M860.7 463.5l-.3 .4M864.3 462.2l-3.5 1.3M861.1 458.7l-1.7 1.5M854.5 459l-2.5-2.8M854.6 453.5l-2.6 2.7M854.5 459l3.5 1.7M855.3 464.4l.9 0M855.3 464.4l-.5-.5M854.5 459l.3 4.9M856.2 464.4l1-.9M857.2 463.6l.6-2.1M857.2 463.6l2.9 .8M860.2 464.4l.3-.5M860.3 465.3l2.5 1.3M860.3 465.3l-.6 .6M859.7 465.9l0 2.9M862.8 466.6l-2.9 2.2M860.2 464.4l.1 1M856.2 464.4l1.4 1.9M857.6 466.3l2.2-.4M857.4 467.6l.2-1.3M858.6 469.2l1.1-.4M899.5 501.8l-39.5-33M849.8 465.3l-.1-2.2M849.8 465.3l4.2 1.6M849.7 463.1l4.5 3.3M854 466.9l.2-.6M849.7 465.9l.1-.6M854 467.4l0-.5M854.8 463.9l-5.1-.9M855.3 464.4l-1.1 1.9M842.7 421.7l-.4 5.8M842.7 421.7l2.6-.2M845.3 421.5l3.9 6.7M842.2 427.5l2.4 1.1M844.7 428.6l4.4 .3M849 428.8l.2-.7M843.7 434l.4 .1M849.4 433.3l-5.2 .9M849.4 433.3l-.4-4.5M843.4 433.5l1.2-4.9M843.7 434l-.3-.5M857.6 409.8l-.3-.5M864.1 404.3l.4 1.4M860.9 409.6l2.7-2M860.9 409.6l-3.3 .2M863.6 407.7l.9-2M864.1 411.9l1 1.7M859.4 415.5l4.7-3.7M859.7 416.4l4 1.9M859.4 415.5l.3 .9M865.1 413.5l-1.4 4.9M866.2 422.3l1.2 2.3M869.8 425.2l-2.4-.6M871.8 421l1.6 2M866.2 422.3l-.4-2.8M871.8 421l-4.7-2.2M867.1 418.8l-1.3 .7M857.8 422.5l1.9 .6M860.2 423.2l-.4 0M859.7 416.4l-2.4 2.3M857.3 418.7l.5 3.7M860.2 423.2l3.6-4.7M875 423.1l-.3-4.2M874.7 418.9l21.5 13.5M860.5 370.2l1.3-.6M864.2 375.4l.1-.3M861.7 369.6l2.5 5.6M866.3 363.2l8.6 4.2M865.5 364.3l5.3 4M870.8 368.3l4.1-.8M869.7 376.9l3-1.2M872.7 375.7l44.1 2.2M868.5 358.6l18.6 8.2M813.8 412.2l3.7-.4M813.8 412.2l-.2 1M813.6 413.2l3.8 .9M817.5 411.8l.4 1.3M817.9 413.1l-.5 1M818.7 408.5l-1.1 3.2M813.5 410.7l.3 1.4M810.2 414.3l3.1-.6M813.3 413.7l.3-.5M819.9 413.3l1.1 1M819.9 413.3l-1.9-.2M821 415l0-.7M817.4 414.1l0 .3M821 415l-.8 .2M817.4 414.5l2.8 .7M841.1 430.3l0-.4M843.4 433.5l-2.4-3.2M842.2 427.5l-.8 1.2M841.4 428.6l-.3 1.3M841 421.5l-3.7 4.4M842.2 421.5l-1.1 0M841.4 428.6l-2.6-1.1M842.2 421.5l.5 .2M837.3 425.9l1.4 1.6M841.1 429.9l-3.2-.8M838.8 427.5l-.9 1.7M841.1 430.3l-3.1 1.7M838 432l-1.3-1.4M836.7 430.6l1-1.4M823.1 431.6l-1.9-2.5M823.8 426.6l-2.6 2.6M823.8 426.6l.5 .1M823.1 431.6l2.5-4M824.3 426.6l1.3 .9M837.5 406.6l.4 1.3M833 406.8l2.2 5.5M837.9 407.8l-2.7 4.4M864.2 433.8l1.6-2.1M862.9 431.7l.4-.8M863.3 430.9l1.6-1.1M864.9 429.8l1 1.8M867.4 424.6l-1.2 3M866.2 427.6l-.2 .5M870.8 426.7l-1.5 4.3M866.1 428.1l3.2 2.9M858.9 432.7l-.4-1.9M852.6 437.2l-1.9-2.8M850.7 434.4l3.4-3.6M858 435.5l-5.4 1.7M858.5 430.9l-4.4-.1M842.3 441.1l-2.6 2.3M842.3 441.1l2.7 .4M845.2 441.6l.6 5.4M839.6 443.4l2.7 5.1M842.3 448.4l3.5-1.4M833.9 446.2l3.8-3M840.7 450.2l-2.8-.4M840.7 450.2l1.5-1.8M837.7 443.2l1.9 .1M851.1 339.9l-1.1 5.3M851.1 339.9l-.8-2.5M842.9 338.3l1.3-1.1M850.3 337.5l-6.1-.2M835.4 332.5l.8 3.1M842.8 328.3l1.9 7.5M844.2 337.2l.5-1.4M859.4 328.9l-1.8 2.4M863 337l-.5 0M857.7 331.3l4.9 5.7M686.5 606.9l1.1 1.4M687.7 608.4l.3 .9M684.8 607.7l1.4-.9M686.2 606.8l.3 .1M687.9 609.2l-.2 .4M688 612l-.1-1.7M687.7 609.7l.2 .6M690.6 611.6l.1-1.1M690.7 610.5l-1.8-.3M687.9 610.3l1-.1M698.8 608.4l-1.1-.1M698.9 613.1l-1.3-2.7M697.6 610.4l.1-2.1M698.8 604.1l-1.5 3.6M697.7 608.2l-.5-.5M628 262.4l59.6 8M687.5 272.5l-8.4 5M687.6 270.4l-.1 2.2M679.1 277.5l-23.2 4.1M687.6 270.4l3.5-4M670.8 341.8l.1 1.8M670.8 341.8l6.1 3.3M670.9 343.6l5.6 3.2M676.9 345.1l-.4 1.6M670.6 341.4l.2 .4M670.6 345.6l.3-2M678.3 342.5l-1.4 2.6M676.3 347.9l.2-1.2M672.6 349.2l3.7-1.3M678.3 342.5l4.2 .3M676.3 347.9l4.7 4.2M679.5 307.1l-12.4 7M667.1 314.1l7 3.2M682.8 337.6l0 5.1M686.1 338.3l-3.3-.7M686.1 338.3l1.7 2.1M685.6 343.3l1.7-1.5M687.8 340.4l-.5 1.4M685.8 334.7l-1-.5M685.8 334.7l1.7-.4M685 330.5l-.2 3.7M685 330.5l4.3 2.2M687.5 334.3l1.8-1.6M687.8 340.4l2.3-1.7M685.8 334.7l.3 3.7M687.5 334.3l2.5 4.5M690.4 322.6l-.3 9.8M685 330.5l-4.1-10.9M690.1 332.4l-.7 .3M778.6 341.4l-1.7 5.3M778.6 341.4l-2.7-1.9M774.2 347.1l-5.7-7.5M768.5 339.6l7.4-.1M700.2 426.5l3.7-2.8M705.4 425.6l-1.5-1.9M700.2 427.2l0-.6M700.6 428.7l2.8 .9M705.4 425.6l.2 .5M705.6 426.1l-2.2 3.5M704.8 435.4l-.2-3.4M703.4 429.7l1.2 2.3M697.9 423.7l5.8-1.4M698.7 424.6l5-1.6M703.7 422.3l0 .7M700.2 426.5l-1.5-2M702.8 420.2l1 .9M703.8 421.1l-.1 1.1M696.6 421.7l6.2-1.4M703.9 423.7l-.1-.8M709.4 421.4l-4 4.2M709.4 421.3l-5-.3M704.4 421l-.6 .2M696.6 421.7l2.8-6M702.8 420.2l-.7-2.8M702.2 417.4l-2.8-1.8M685.2 367.3l1.3 .5M688.9 379.6l.1-6.5M688.6 379.7l.4-.1M686.9 377.7l1.7 2M686.5 367.8l2.6 5.2M740.5 413.7l-2.2-4.3M740.5 413.7l5-1.4M742.2 402.8l-4 6.3M730 429.8l.1-5.7M727 429.4l1.8 .5M727 429.4l-.1-3.2M730 424.1l-3.1 2.1M747.3 414.2l-3.5 5M743.8 419.2l.6 1.6M677.8 516.7l5.5 1.4M683.3 518.2l.1-1.1M683.4 517.1l-2.1-2.7M677.8 516.7l-1.3-1.6M676.5 515.2l4.8-.8M672.5 506.3l5.8 3M678.3 509.3l-1 3M670 515.3l5.7-.5M675.7 514.8l1.7-2.5M678.3 509.3l.6-.4M677.3 512.3l3.7-.8M678.9 508.9l2.1 2.6M676.5 515.2l-.8-.4M681.3 514.4l1.5-2.4M681 511.5l1.8 .4M683.4 517.1l3.4-3.3M683 511.8l3.4-.8M686.8 513.8l-.4-2.7M678.9 508.9l.6-.7M683 511.8l-2.6-3.5M680.5 508.3l-.9-.1M673.8 502.2l5.1 3.3M678.9 505.5l.1 .3M679 505.8l.6 2.4M720 459.2l-3.6 1.9M714.3 460.6l2.2 .4M714.3 460.6l-2.3-1.8M720.7 456.4l-3.4-1.7M717.3 454.7l-5.3 4.2M745 425.4l.8 .8M745.8 426.2l-1.7 1.6M744.9 425.4l-2.2 1.3M742.6 426.7l1.5 1.2M746.7 423.5l-1.7 2M748.3 428.5l-2.4-2.3M747.4 430.6l-3.3-2.7M770.5 457.6l3-3.5M770.5 457.6l-.7 0M769.8 457.6l-1-.6M770.1 451.7l3.4 2.4M770.1 451.7l-1.8 4.3M768.3 456l.5 1M775.7 456.2l-.4 4.4M774.8 460.8l.4-.2M775.6 453.1l.1 3.1M775.6 453.1l-2.1 1M774.8 460.8l-4.3-3.2M769.7 463.2l-1.2-1.1M774.3 462.2l.5-1.4M768.5 462.1l1.3-4.5M769.9 451l.2 .8M775.6 453.1l3.2-3M765.4 453.2l2.8 2.8M766.6 450.6l-1.1 2.6M764.3 464.6l2.8-1.9M764.3 464.6l-2.2-1.9M767.1 462.7l-1.7-4.2M762.1 462.7l-.2-.6M761.9 462.1l1.6-3.1M765.4 458.5l-2 .5M765.6 469.2l-1.3-4.5M768.5 462.1l-1.4 .6M757.7 467l4.4-4.4M759.5 471.2l1.6 .7M768.7 457l-3.3 1.4M761.9 462.1l-4.1-1.7M752.5 464.3l-.5-.9M757.8 460.4l-5.8 2.9M752.2 469.6l-4.8 .3M747.3 469.7l3.8-6.8M752 463.4l-.9-.5M751.6 451.9l3.5 2M750.5 462.5l.4 .2M755.1 453.9l-4.2 8.8M750.9 462.7l.2 .2M762.1 453.8l-.1 2M762.1 453.8l-2.5-2.1M762 455.7l-4.3 2.5M759.6 451.6l-4.1 2.3M755.6 453.9l2.2 4.3M765.4 453.2l-3.3 .6M763.4 458.9l-1.4-3.2M760.1 447.2l-.5 4.4M757.8 460.4l0-2.2M755.1 453.9l.5 0M799.7 454.9l-.4-.5M803.5 447.5l1.7 .9M803.5 447.5l-4.3 4.4M799.3 454.3l-.1-2.5M773.3 430.3l5.6 1.9M782.9 425.4l.7 1.5M783.6 426.9l-4.7 5.4M778 439.7l2.1-3.1M780.1 436.7l-1.2-4.4M794.1 447.7l4.4-.3M794.1 447.7l-1.1-1.2M793 446.6l1.7-2.3M794.7 444.3l5.1 1M799.9 445.3l-1.3 2.1M800.2 445.2l3.2 2.3M800.2 445.2l-.4 .2M798.1 448.6l1.1 3.2M798.1 448.6l.5-1.2M792.1 441.7l2.2 1.7M794.3 443.4l2.4-4M792.1 441.7l3.1-3.2M795.2 438.6l1.5 .9M800.5 443.4l-3.4-4M800.2 445.2l.3-1.7M794.3 443.4l.4 .9M796.7 439.4l.4 0M802.4 439.2l-1.1 3.4M800.5 443.4l.8-.9M802.4 439.2l-3.2-2.2M797.1 439.5l2-2.5M797.8 432l-.5 1.3M799.7 430.8l-1.9 1.2M804.3 434l0-1.7M804.3 434l-5.2 2.8M797.3 433.3l1.9 3.5M815.1 434.1l-4.5-.6M815.1 434.1l.6-1.3M815.4 432.2l.3 .6M815.4 432.2l-2.6-2.6M810.6 433.5l2.2-3.9M809.6 425.6l.7 2.1M806.6 431.2l.7-.1M807.3 431l3-3.3M790.4 484.8l-1.8 1.2M790.4 484.8l1.5 .3M791.9 485.1l.7 4.3M788.6 486l.6 2M792.5 489.4l-3.3-1.4M784.7 485.1l3.9 .9M787.6 488.9l1.6-.9M792.8 489.8l-.3-.4M796.8 484.2l-.3-1.2M791.9 485.1l2.1-2M796.5 483l-2.5 .1M716.6 473.6l-.4 1.6M716.2 475.2l.2 1.3M716.5 476.5l.4 .1M716.8 476.6l1.4-2.7M716.6 473.6l1.4 .1M718.1 473.7l.2 .2M722.3 464.5l1.2-2.4M728.6 462.2l.2 .2M731.2 466.4l-2.3 2.3M722.3 464.5l2.7 3M724.9 467.5l3.9 1.2M717.8 465.5l1.4 .5M716.5 461l1.3 4.4M722.3 464.5l-.6 .6M721.7 465.1l-2.5 .9M724.9 467.5l-2.4 .1M721.7 465.1l.9 2.5M697.6 478.2l-1.8 2M695.8 480.1l2.8 2.9M699.5 478.3l-1.9-.1M699.5 478.3l.2 5M699.7 483.3l-1-.3M692.2 483.8l.7 .4M692.2 483.8l.9-2.4M693.1 481.4l2.7-1.2M698.7 483l-5.8 1.1M709.5 469.2l.2-2M709.5 469.2l-1.9-.3M709.7 467.2l-2.6-.7M707.6 468.9l-.5-2.3M706.4 469.9l-.7 0M705.7 469.8l-.8-.4M706.4 469.9l1.2-1M704.5 467.1l.5 2.4M709.9 466.9l2.2 1.4M709.9 466.9l.7-1.4M710.6 465.5l1.9 0M712.1 468.4l.5-2.7M707.4 465.6l3.2 0M709.7 467.2l.2-.2M712 458.9l-2.5-1.2M707.4 459.3l3.2 6.3M714.3 460.6l-1.8 4.9M715.8 467.2l.3 0M717.8 465.5l-1.7 1.8M715.8 467.2l-3.2-1.6M731.7 451.7l3.2 2.7M731.7 451.7l-2 3.2M734.9 454.4l-4.1 1.8M729.7 454.9l1.2 1.3M730.3 447.9l1.4 3.8M737.2 455.6l-2.3-1.2M729.4 454.9l.3-.1M731.2 458.9l-.3-2.7M728.9 468.7l-.5 .9M727.2 472.8l1.1-3.2M735.2 470.2l0 .9M727.2 472.8l5.8 4.2M735.2 471.1l-2.2 5.9M740.6 468.6l-4.1 1.8M740.6 468.6l.9 2.9M736.5 470.4l3.9 1.5M741.5 471.5l-1.1 .3M741 467.5l-.4 1M735.2 470.2l1.4 .2M742.9 471.5l-1.4 0M740.1 473.4l-2.8 .6M740.1 473.4l.3-1.5M735.2 471.1l2.1 2.9M785.1 479.4l.2 3.3M785.1 479.4l2.4 0M785.4 482.7l3.3-.8M787.6 479.4l1.4 1M788.7 481.8l.5-.6M789.2 481.3l-.2-.9M784.7 483.5l.7-.9M790.4 484.8l-1.7-3M779.6 477.6l2.1-1.3M777.7 468.7l2.5 1.8M780.2 470.5l1.5 5.7M785.1 479.4l-.3-1M781.6 476.3l3.2 2.1M855.2 474.8l-.6-1.2M855.2 474.8l.8-.9M854.6 473.6l.3-.7M854.9 472.9l.5-.3M855.4 472.6l.7 .2M856.1 473.9l.3-.8M856.1 472.8l.3 .3M855.6 478.5l-.4-3.7M855.6 478.5l-1.5-1.7M854 473.8l.6-.2M859.4 480.3l-3.4-6.4M854 472.4l.9 .5M853.1 470.9l.2-.8M855.3 471.7l.1 .9M857.3 471.1l-1.2 1.7M856.9 473.3l-.6-.3M821.4 461.4l-.1 2.2M816.8 458.3l4.2 5.7M820.3 454.3l.6-.1M821.3 463.7l-.3 .3M812.8 464.2l8 .1M812.2 461.1l.7 3.1M821 464l-.1 .3M824.5 482.1l-6.1-4.3M821.3 475.3l-1.6 .3M818.4 477.8l1.3-2.2M821.3 475.3l.8 .5M822.2 475.9l2.8 4.8M810.2 478.6l4.3-4.3M810.2 478.6l-.2-.2M810 478.4l-.6-9.4M809.3 469l.7-.3M810.1 468.8l3.6 2.2M814.4 474.3l-.8-3.3M803.3 476l2.8 4.4M806.1 480.4l3.9-1.9M803.3 476l6.6 2.5M807.6 469l1.8 .1M806.7 469.4l-3.4 6.6M812.8 464.2l-2.8 4.6M814.4 474.3l2.9 3.9M810.2 478.6l1.5 1.9M811.7 480.5l5.6-2.4M806.8 485.5l4.4 2.4M804.1 482.9l2-2.6M811.7 480.5l-.5 7.4M818.4 477.8l-.9 .3M820.7 485.3l-3.1-5.9M817.6 479.4l-.1-1.2M820.2 472.3l-.7 2.6M820.2 472.3l-1.2-2.8M819.5 474.9l-4-3.8M819 469.5l-3.4 1.6M813.6 471l2 0M820.9 464.3l.1 .5M821 464.8l-.3 2.1M819 469.5l1.7-2.5M849.3 474.9l-1.6-.7M849.3 474.9l-.2-1.6M847.7 474.2l.3-.9M848 473.2l1.1 0M851.5 472.9l-1.2-.7M850.5 469.7l-.4 2.5M848.7 468.6l-1.1 1.1M850.2 472.2l-1.9-1M847.6 469.7l.7 1.5M849.1 473.2l1.1-1M848 473.2l-.7-.6M848.3 471.2l-.9 1.4M844.9 478.1l.8-1.3M844.9 478.1l-1.3-1.5M845.7 476.8l-2.1-.2M845.9 476.8l1-.1M845.8 476.7l-.1-.5M845.7 476.3l.4-1.5M846.9 476.7l.3-1.4M846.1 474.8l.9 .3M847 475l.2 .3M843.6 476.5l.2-.8M843.8 475.8l1.9 .5M843.8 475.8l.1-1.6M843.9 474.2l.2-.1M844.1 474.1l1.5 .2M845.6 474.3l.5 .5M846.8 472.6l.5 .1M847.7 474.2l-.7 .8M846.8 472.6l-1.2 1.7M850.6 474.7l-.7 .8M851 476.2l-.8 .3M850.2 476.5l-.3-1M849.3 474.9l.1 .4M849.4 475.2l.5 .3M850.2 476.5l-.1 .4M850.1 477l2.7 4.5M842.7 477.1l.9-.5M842.7 477.1l0 1.2M842.7 478.3l.3 .5M843 478.8l.6 .2M844.9 478.2l-1.3 .8M816.1 497.5l4.1 .9M816.1 497.5l2-2.2M820.2 498.4l-.9-2.7M818.1 495.3l1.1 .4M822.2 504.5l-.1-5.4M819.5 504.6l.4-2.3M822.1 499.1l-.5 .1M819.9 502.3l1.7-3.1M757.1 509.6l-7-1.3M757.1 509.6l2.5-.4M755.5 503.5l-4.5 1.1M755.5 503.5l4.1 3.8M759.5 509.2l0-1.9M767.4 500.2l0 .6M767.4 500.2l-2.7-3.3M762.5 500.7l2.2-3.8M762.5 500.7l3.9 .5M766.4 501.2l1-.4M767.4 500.2l3.8-2.8M774.5 499.4l-4.5 3.5M769.9 503l-2.2-1.6M767.4 500.8l.3 .5M761.1 511.8l-1.5-2.5M764 513.9l3.9-3.2M759.6 509.3l4.2-1.9M763.8 507.4l4.1 3.3M764.2 522.9l-.2-9.1M767.9 510.7l3.3-1.4M769.3 494.6l-5.1-.6M769.9 489.4l-6.7 2.8M764.2 493.9l-1-1.8M764.7 496.9l-.5-2M764.2 493.9l0 1M762.5 500.7l-.3 .3M762.2 501l-2.5-1.9M764.2 495l-4.5 4.2M754.5 519.3l2.5-4.3M756.4 512.4l-5.4 1.9M756.4 512.4l.6 2.6M747.3 516.6l3.7-1.3M761.1 511.8l-4.1 3.2M757.1 509.6l-.7 2.8M743.5 509l-2.3 5.1M689.5 602.9l-1.4 .2M688.2 601.6l-.5 1.3M688.1 603.1l-.4-.3M687.7 602.9l-1.6-.5M755 234.7l5.9-4.1M755 234.7l-2.1-2.5M752.9 232.2l2.2-2.3M760.9 230.5l-5.8-.6M763.3 230.1l-2.5 .5M757.6 236.4l-.8-.1M755.1 234.9l1.7 1.4M750.2 231.8l-1.6-8.3M750.2 231.8l2.6 .4M754.6 201.1l.5 28.8M741 227.6l-.2 3.6M745.1 226.9l-1.1 6M744 232.9l-3.3-1.7M750.7 237.3l2.6 2.2M750.7 237.3l3.5-1.3M754.2 236l-.9 3.4M754.6 244.1l2.2-7.9M754.6 244.1l-1.2-4.7M755.1 234.9l-.8 1.1M802.6 249.1l-7.6-.3M802.6 249.1l1-1M804 247.1l-.4 .9M804 247.1l-3.1-3.1M800.8 244l-6.8-.6M794 243.4l.9 5.3M800.4 255.1l2.2-6M792.4 251.7l2.6-2.9M808.3 254.1l-4.7-6M805.7 246.2l-1.7 1M800.1 239.1l.8 5M792.9 242.5l1.1 1M809.2 334.6l1.7 4M799 337l4.8 5.6M803.9 342.6l3.2-.1M807.1 342.5l3.7-3.8M816 335.3l-2.6 3.5M810.9 338.6l2.2 .2M813.4 338.8l-.3 0M819.3 339.2l-.5 .4M813.4 338.8l5.4 .8M831.2 360.9l-1.9-.8M827.6 364.4l-1.2-2.9M829.3 360.1l-2.8 1.4M805.2 372.2l.2-2M814.1 370.8l-.6-.4M805.4 370.2l2.9-.7M813.5 370.4l-5.1-.9M799.5 372.4l1.8-2.3M802.4 376l-2.9-3.7M801.2 370.1l4.1 .1M791.8 321.9l.1-3M791.8 321.9l2.9-2M791.9 318.9l1.5-1.1M794.6 319.9l-1.3-2M784.6 318.8l3.5 3.9M788 322.7l2.5 .7M790.5 323.5l1.3-1.6M788.8 316.7l3 2.2M795.6 319.9l-.9 0M790.5 323.5l1.4 1.5M792.8 313.6l.5 4.3M769.8 312.3l.3 1M782.6 309.9l-3.2-2.8M781.2 317.7l-.5 .3M780.7 318l-6.2-1.5M770.1 313.4l4.4 3.2M789.9 331.1l-.3 .1M798.3 336.7l-1.3 .3M797 337l-8.4-2.3M789.6 331.2l-1 3.4M788 322.7l-2.7 6M789.6 331.2l-4.2-2.5M797 337l-6.6 3.5M790.3 340.5l-1.7-.7M788.6 339.8l-.2-4.9M788.6 334.7l-.2 .2M832.8 351.7l3.3-1.5M832.8 351.7l1.8-4.7M834.6 347l.7-.3M835.4 346.7l1.5 1.7M836.8 348.4l-.7 1.7M840.2 350.2l-3.4-1.7M835.8 345.6l-.5 1.1M836.2 354.2l-.1-4.1M834.1 342.8l-1.8 0M836.2 335.6l-4.3 2.3M831.9 337.8l-.8 1.7M832.3 342.9l-1.2-3.3M828.6 331.6l.1 5.6M828.6 331.6l-4.7 6.5M828.7 337.2l-4.4 1.1M824 338l.4 .2M831.9 337.8l-3.3-.7M829.5 329.3l-.9 2.2M822 337.4l.5 .2M822.5 337.6l1.5 .4M825.4 340.1l-1.1-1.9M825.4 340.1l3 1.6M828.4 341.7l2.7-2.2M767.8 309.7l-5.5 0M770.1 313.4l-3.6 4.7M766.5 318l-4.4-2.5M762.3 309.7l-1 .6M761.2 310.3l.8 5.3M755.7 318.7l.1-.6M755.8 318.1l2.3-2.2M760.6 320.1l-2.3 .4M760.6 320.1l-.2-2.3M758.3 320.5l-2.6-1.8M758.1 315.8l2.3 2M756.9 301.5l.1 .5M756.9 301.5l4.4-6.3M757 302l4.1 2.8M761.1 304.9l4.6-6M761.3 295.2l3-.5M765.7 298.8l-1.4-4.2M754.4 300.6l-1.3-1.7M758.2 294l-5.2 5M754.4 300.6l2.5 .9M758.2 294l3.1 1.2M762.3 309.7l-1.2-4.8M769.4 303.4l-3.7-4.6M695 310.2l6.5 .5M694.9 310.1l2.1-4.9M779.3 302.2l-4.5-4.7M779.3 302.2l.5-.6M779.8 301.6l-1.3-8.1M774.8 297.5l.1-2.5M774.9 294.9l3.7-1.4M778.3 305.1l1-2.9M773.7 299.5l1.1-2M785 299.1l-5.1 2.5M781.1 291.7l-2.6 1.8M772.2 293.8l-6.9-.5M765.3 293.3l-.9 1.3M772.2 293.8l2.7 1.1M780.2 288.4l-5.7-2M774.5 286.4l-2.3 7.5M745.3 286.8l2.5-1.6M745.6 288.2l-.4-1.4M745.6 288.2l3.4-.9M747.8 285.2l1.3 2.1M813.3 413.7l.6 1.4M817.4 414.5l-.3 1.3M817.2 415.8l-3.3-.7M811.2 416.9l1.3 .5M811.2 418.4l1.3 .2M812.5 418.6l0-1.3M782.3 409.3l-.3-.8M779.4 406.3l1-.9M782.1 408.5l-1.7-3.1M848.1 381.2l-3.6 1.6M848.1 381.2l-1.5-3M845.6 377.6l1 .6M845.6 377.6l-2-.4M843.6 377.3l-.9 5.6M842.7 382.9l1.8-.1M849.3 382.1l-1.2-.9M847.7 384.2l-3.2-1.4M852.5 377.3l-5.9 .9M850.9 372.6l-5.3 5M840.5 373.5l3.1 3.8M842.3 383.3l.3-.4M795.8 390.7l-.3-1.6M789.5 392.4l1.6-5.4M795.5 389.1l-4.3-2.1M790.2 373.7l.5 .8M790.2 373.7l-1.8-1.8M788.4 371.9l-3.7 5.6M784.7 377.5l5.3-.2M790 377.3l.7-2.8M788.3 371.6l.1 .3M793.6 370.3l.2 1.5M793.8 371.8l-3.6 1.9M782.4 379.1l2.1-1.4M784.5 377.7l.3-.2M781.9 371l.2 8M782.1 379l.3 .1M784.5 377.7l5.8 1.6M790.3 379.3l-.3-2.1M790.4 385.7l1.1-1.3M791.1 387l-.7-1.3M795.5 389.1l1.2-2.8M791.5 384.4l5.2 2M799.5 385l-2.1 .5M797.3 385.6l-.6 .8M745.3 397.2l-.8-2.8M742.2 402.8l-3.3-2.5M741.3 396.1l-2.3 4M741.3 396.1l2.8-2M744.5 394.4l-.4-.3M749.8 394.9l-.1 2.1M744.5 394.4l5.2 .4M750.4 391.9l4.5-1.4M755.2 394.5l-.3-4.1M749.8 394.9l5.4-.4M750.4 391.9l-.7 .9M749.7 394.8l0-2M761.5 396l-5.3 1.7M761.5 396l-.6-3M760.9 393l-5.4 1.8M755.5 394.9l.5 2.7M756.1 397.8l-.1-.2M764.3 399.3l-2.8-3.3M756.2 398.6l-.1-.9M759 389.6l-.8-.2M758.3 389.4l-3.1 .3M755.2 394.5l.3 .3M754.9 390.4l.3-.7M750.3 397.8l5.7-.3M765.8 387.8l.3-1.2M761.6 385.5l-1.1-2.4M760.8 382.4l-.3 .7M765.9 382.9l.3 .3M766.2 383.2l-.1 3.3M778.7 371.3l-2.1 3.8M780.9 379.3l1.2-.3M780.9 379.3l-4.3-4.3M775.4 383.4l-1 2M775.4 383.4l-5-4M774.5 385.4l-4.1-.9M770.4 384.5l-2.4-1.8M770.4 379.4l-2.4 3.3M780.9 379.3l-2.9 2.8M778 382.1l-1 .7M777 382.8l-1.6 .6M774.7 377.9l1.9-2.8M774.7 377.9l.7 5.5M766.1 386.5l4.3-2M774.4 386.2l.1-.8M766.2 383.2l1.8-.5M760.7 381.4l-4.6-1.9M760.5 383.1l-.5 .2M756.2 379.5l-.6 2.9M755.6 382.5l.2 .2M755.7 382.7l4.3 .6M758.3 389.4l-.1-4M758.2 385.3l1.8-2M744 393.4l.1 .7M749.7 392.8l-1.7-1.2M744 393.4l2.7-1.9M746.7 391.5l1.4 .1M743.1 391.7l.9 1.7M743.1 391.7l.2-.9M746.2 389.8l.4 1.7M746.2 389.8l-.7-.1M743.3 390.8l2.2-1.1M764.1 361.2l-3.5-1.4M758.4 367.1l-1.3-3.9M762.9 366.3l-4.4 .8M757.1 363.2l3.4-3.4M764.4 353.8l-5 2.3M760.6 359.8l-1.2-3.8M768.6 349.6l-2.8-4.6M764.4 353.8l-1.8-2.9M762.6 350.9l3.1-5.8M768 339.4l.5 .2M768 339.4l-3.2 2.3M765.8 345l-1-3.4M848.4 455.4l1.3-5.7M848.4 455.4l-1.7-6.9M846.7 448.6l3 1.1M854.3 451.8l-1.8-1.8M852 456.2l-3.3 1M848.7 457.3l-.4-1.9M852.5 450.1l-2.8-.3M852.5 450.1l-1.7-3.2M854.4 445.5l-1.7 .2M850.8 446.9l2-1.2M863.7 448.8l1-.8M867.3 449.2l-.4-1.5M864.6 447.9l2.3-.2M868.1 446.1l1 0M868.1 446.1l-1 .9M866.9 447.8l.2-.8M869.1 442.8l.8-1.4M869.1 442.8l-1.7-2.1M869.9 441.3l-1.1-1.2M868.8 440.2l-1.3 .2M867.4 440.6l.1-.2M869.1 443.1l.5 .3M871.2 441.3l-1.2 0M871.2 441.3l-.5 1.9M869.1 443.1l0-.3M867.4 440.6l-1.5 1.2M869.1 443.1l-1.3 .5M867.8 443.6l-1.8-1.8M864.9 429.8l.9-1.5M866.1 428.1l-.3 .2M865.9 431.6l1.4 .9M867.2 432.5l2.1-1.5M876.5 432.4l-6.8-1.2M869.7 431.2l-.4-.2M865.5 438.1l1.6 1.1M865.5 438.1l.6-2.8M866.7 435.3l-.4-.1M866.7 435.3l1.5 2.5M867.1 439.3l1.1-1.4M867.5 440.4l-.4-1.1M869.7 439.3l.4-1.3M869.7 439.3l-.9 .9M870.1 437.9l-1.9-.1M864.5 434.7l1.6 .6M867.2 432.5l-.9 2.7M904.8 433.8l-31.8 5.3M956.2 442l-83.2-1.4M873 439l0 1.6M874.2 445.2l-2-4M873 440.6l-.7 .6M871.2 441.3l.4-.2M872.2 441.2l-.7-.2M869.7 439.3l1.7 1.4M871.5 441.1l-.1-.4M876.5 432.4l-3.7 2.8M873 439l-.2-.2M872.8 435.2l0 3.6M871.4 440.7l.3-1.7M870.3 437.8l1.4 1.2M871.7 439l1.1-.1M829.5 471.1l.1-1.3M829.7 469.8l1.8-1.3M832.2 472.7l.7-.4M832.9 472.4l-.6-3.9M829.5 471.1l2.6 1.7M831.4 468.5l.8 0M839.9 475.8l1.1 1.1M839.9 475.8l.7-1.7M841.8 476.8l-.8 .1M841.8 476.8l.5-2.9M840.6 474.1l1.7-.2M841.8 476.8l.9 .3M843.9 474.2l-1.4-.4M842.5 473.8l-.3 .1M855.1 426l1.6-1.7M855.1 426l.6 .7M856.7 424.3l2.3 .2M855.7 426.7l2.9 1.6M859 424.5l.8 1.4M858.6 428.3l1.2-.6M859.8 427.7l0-1.8M857.8 422.5l-1.2 1.8M859.8 423.1l-.8 1.4M854.1 430.8l1.6-4.1M858.5 430.9l0-2.6M860.4 423.5l-.6 2.4M860.2 423.2l.2 .4M863.3 430.9l-3-3.2M860.3 427.7l-.6 .1M847.3 407l.9 4.7M854.8 408.2l-1.3 1.2M848.2 411.8l5.3-2.3M858.1 412.9l-.5-3.1M858.1 412.9l-5.2 2.2M852.8 415.2l-1.3-1.5M853.5 409.4l-2 4.3M855.1 420l-4.1 1.4M855.1 420l-.7 5.7M851 421.4l2.6 4.3M854.3 425.7l-.8 0M857.3 418.7l-1.4 .4M855.1 426l-.8-.3M855.9 419.1l-.8 .9M849.4 433.3l1.3 1.2M849.2 428.2l4.4-2.5M858.1 412.9l1.4 2.6M852.8 415.2l-.3 1.1M855.9 419.1l-3.3-1.9M852.5 416.2l.1 1M851 421.4l-2.4-1.2M852.6 417.2l-4 2.9M845.3 421.5l1.9-1.4M847.1 420.1l1.4 .1M866 409.4l-.2-.3M866 409.4l-.4 1.9M865.9 409.1l-1.1 .2M864.8 409.4l-1.2 1M865.6 411.3l-1.4 .1M863.6 410.4l.6 1M863.6 407.7l1.2 1.7M864.5 405.7l1 1.1M865.6 406.8l.7 1.2M866.3 408.1l-.4 1M860.9 409.6l2.6 .8M864.1 411.9l.1-.4M866.8 412.3l-1.8 1.2M866.8 412.3l-1.2-1M837.9 407.8l1.4 2.4M842.7 403.8l-.2 3.3M842.5 407.1l-1.7 2.6M839.3 410.3l1.5-.6M846.8 406.9l-2.2 3.1M842.5 407.1l.2 1.3M844.6 410l-1.8-1.6M841.5 409.7l1.3 .7M841.5 409.7l1.1-1.1M842.8 410.4l-.2-1.8M841.5 409.7l-.7 0M842.7 408.4l-.1 .3M825.5 406.7l-1.3 .6M825.5 406.7l.5 1.2M824.2 407.4l1.2 2.1M826 407.9l-.4 1.6M825.9 405.7l-.4 1.1M820.3 406.1l1.1 .7M821.4 406.8l2.8 .6M828.9 406.6l-2.9 1.4M823.5 409.4l1.9 .1M821.4 406.8l2.2 2.6M831.2 407.3l-3.4 2.2M831.5 406.7l-.2 .5M826 409.8l1.8-.3M826 409.8l-.3-.3M863.7 365.6l0 1.7M861.7 369.6l1.8-2M863.7 367.3l-.2 .3M864.3 375.1l.7-.9M863.5 367.5l1.5 6.7M824.1 411.5l-1.3-.9M824.1 411.5l.1-.7M824.2 410.9l-1.1-.5M822.8 410.6l.2-.2M825.6 409.5l-1.4 1.3M823.5 409.4l-.5 1M821.5 413.8l1.1-.1M821.5 413.8l.2-.5M821.8 413.1l-.2 .2M821.8 413.1l1.4-.8M822.5 413.7l1.4-1.1M824 412.7l-.8-.4M822 411l-.2 2.1M822.3 411l-.3 0M822.3 411l.9 1.3M822.3 411l.5-.4M824.5 412.7l-.4-1.2M824.5 412.7l-.5-.1M820.3 411.7l1.1 .9M820.3 411.7l.2-1.4M821.4 412.7l-.3-2M820.4 410.3l.7 .3M821.7 413.3l-.3-.6M821 414.3l.5-.5M819.9 413.3l.4-1.6M818.9 408.3l1.6 2M822 411l-.9-.3M835.2 430.3l.3 .1M831.7 430.9l-1.8 1.8M829.9 432.7l2.5 2.5M831.7 430.9l3.5-.6M835.5 430.4l-.4 4.5M835.1 434.9l-2.7 .3M829.4 432.6l.5 .1M831.4 440.6l.7-.9M832 439.7l.3-4.5M820.6 434.7l.9-1.4M820.6 434.7l-4.2-2.1M821.5 433.3l-3.1-2.3M816.4 432.6l2-1.7M820.7 437.8l0-3.1M823.3 432.1l-1.7 1.2M815.8 432.8l.7-.2M815.3 435.7l-.1-1.6M819.9 439.8l-4.6-4.1M836.6 427.4l-.1-1.1M836.6 427.4l-.5 1M836.1 428.4l-1.5 0M836.5 426.2l-2-.3M834.5 425.9l-.7 .2M833.8 426.1l.8 2.3M837.3 425.9l-.8 .3M837.7 429.2l-1.1-1.9M836.7 430.6l-1.2-.2M835.5 430.4l.7-2M835.2 430.3l-.5-1.9M841 421.5l-3-1.2M838.1 420.3l-2.8 2.8M835.2 423.1l-.7 2.8M832.9 426.1l.5-3.3M833.6 422.5l-.2 .3M832.9 426.1l.9 0M833.6 422.5l1.6 .6M831.7 430.9l1.1-4.8M825.4 420.8l-2.1 1M825.5 420.9l.1 .7M825.6 421.6l-.6 2M823.3 421.8l.1 1.1M823.4 422.8l1.6 .7M832.8 426.1l-.5-.2M832.3 425.9l-2.7 .5M829 432.3l-1.5-4.2M829.6 426.4l-2.1 1.6M823.1 431.6l.2 .6M825.6 427.5l1.8 .4M827.8 409.5l.5 2.9M831.2 407.3l-.1 1.9M831.2 409.2l-2.4 3.4M828.4 412.4l.4 .2M829.6 416.9l3 2.3M828.3 418.6l.6 .8M832.4 419.3l-3.5 0M828.3 418.6l-.3-.7M829.6 416.9l-1.4-.1M828.2 416.9l-.2 1M827 421.3l1.3-2.7M825.4 420.8l0-1.1M825.5 420.9l1.4 .4M828 417.8l-2.6 1.8M861.7 427.3l-1.3 .2M861.7 427.3l1.1-1.4M860.5 427.6l1.3-3.1M862.9 425.9l.9-2M863.8 424l-2 .5M865.8 428.3l-4-.9M866.2 427.6l-3.4-1.7M860.4 423.5l1.4 .9M866.2 422.3l-2.4 1.7M865.8 419.4l-2-1M856.5 338.4l3.1 .9M856.5 338.4l-1.3 2.5M859.6 339.3l1.4 5.2M855.2 340.8l-.1 2M855.1 342.9l4.6 2.7M859.8 345.6l1.2-1.1M862.5 337l-3 2.2M863.6 344.1l-2.6 .4M851.1 339.9l4.2 .9M850.7 345.5l4.4-2.7M858.6 349.7l1.1-4.1M855.1 332.8l-.6 1.7M855.1 332.8l-2.8-2.2M852.4 330.7l-4.5 .6M853.2 335.2l-6-2.5M853.2 335.2l1.4-.7M847.9 331.3l-.6 1.4M857.7 331.3l-2.5 1.5M856.5 338.4l-1.9-3.9M850.6 325.1l1.7 5.6M846.2 327.9l1.6 3.4M844.7 335.8l2.6-3.1M850.3 337.5l2.9-2.2M697.7 603.7l-2.1 1.6M697.7 603.7l-3.5-1M695.6 605.3l-1.8-2.3M694.2 602.7l-.4 .3M698.3 603.7l-.6 0M694.5 601.8l-.2 .9M693.7 272.8l3.8-.7M693.3 272.5l.4 .3M693.3 272.5l-2.2-6.1M697.6 272l-4.6-4.3M717 257.5l-3.7 1.3M713.4 258.8l1.5 4.7M718.9 260.2l-1.9-2.7M718.9 260.2l-3.4 3.4M715.5 263.7l-.6-.1M683.1 298.1l1.3-2.1M683.1 298.1l-2.1-6.3M684.4 296l-2.2-3.5M655.6 313.5l11.5 .6M679.5 307.1l3.6-9M686.8 290.3l-2.1 2.7M684.7 293l-2.5-.4M684.4 296l.9-.3M684.7 293l1.5 1M686.2 293.9l-1 1.8M687.6 297.3l-2.4-1.6M683.9 334.4l-2.4-1.4M683.9 334.4l-1.8 2.6M681.5 332.9l-2.2 4.1M682.1 337l-2.7 0M674 317.3l7.5 15.7M684.8 334.1l-.9 .3M682.8 337.6l-.7-.7M691.3 322.7l2 9.3M693.2 332l3.4-5.9M690.1 332.4l2.5 1.9M693.2 332l-.7 2.3M690.1 338.8l.9-.4M691 338.4l2.2-3.3M692.5 334.2l.7 .9M751.6 321l-1.6-3.8M751.6 321l4.1-2.3M755.8 318.1l-2.1-3.4M750 317.2l3.7-2.6M712 419.2l1.3-2.6M712 419.2l3.2 2.7M713.3 416.6l1.9 3.3M715.2 419.9l0 2M717.4 419.6l-.2-.5M717.2 419l1.9-1.7M717.4 419.6l1.3-.1M719.1 417.3l-.4 2.2M711 430l-.5 1M704.6 431.9l4.8-3.1M710.9 429.9l-1.5-1M678.9 356.6l3.2-1.3M676.2 366.7l7.9-9M684.1 357.7l-1.9-2.5M681.8 353l.4 1M682.2 355.3l0-1.3M689.1 373l3.8-4.6M686.5 367.8l6.3 .2M692.8 368l0 .4M692.9 368.5l2.4 6.9M688.9 379.6l2 .1M695.3 375.4l-4.4 4.3M733.7 429.8l3.4-3M730.3 423.5l-.2 .6M730.3 423.5l.7-.8M737 426.8l-4.7-5M731 422.7l1.3-.9M721.9 421.3l1.9 0M721.9 421.3l-.8 1.2M721.2 422.5l3.2-.4M723.8 421.3l.5 .8M730.3 423.5l-5.2-.1M724.8 423.2l.3 .2M724.8 423.2l0-.7M731 422.7l-4.9-1.6M724.7 422.5l1.4-1.3M732.4 419.8l-.1 2M732.4 419.8l-5.8-.2M726.1 421.2l.5-1.6M722.7 416.8l1.1 0M722.7 416.8l.7 2.5M723.8 416.8l1.8 .9M723.4 419.3l.3 .1M723.7 419.4l1.8-1.1M725.6 417.7l-.1 .6M721.8 416.3l.9 .5M721.8 416.3l3.2-3.7M725 412.6l-1.1 4.2M723.8 421.3l-.1-1.9M724.4 422.1l.4 .5M726.6 419.6l-1.1-1.3M732.5 419.4l-.1 .4M732.8 416.7l-.3 2.7M729.5 412.7l-3.9 5M729.5 412.7l3.3 4M729.5 412.7l-.3-.9M729.1 411.7l-2.6-1M725 412.6l1.1-1.8M726.1 410.8l.3-.1M731 407.9l3.4-2.1M731 407.9l-1.3-4.4M729.7 403.5l5.6-1.9M734.4 405.8l.9-4.1M729.2 411.8l9.1-2.5M729.1 411.7l2-3.8M738.3 409.2l-3.9-3.4M739 400.3l-3.5 1.1M735.5 401.4l-.2 .3M725.1 423.4l.5 1.3M726.9 426.2l-.8-.5M726.1 425.7l-.5-.9M732.5 419.4l6.5 1.5M732.8 416.7l6.2-1.8M739 420.9l0-6M740.5 413.7l-.4 .6M739.1 414.9l1-.7M743.8 419.2l-3.6-4.6M740.1 414.3l.2 .3M703.6 475.4l-2 .6M703.6 475.4l2.1 .8M705.7 476.2l-4.4 1.7M701.6 476l-.8 1.7M700.8 477.7l.4 .2M704.9 469.5l-2.2 1.1M702.2 468.6l.1 1.6M702.7 470.6l-.4-.4M705.7 469.8l-.9 3M704.9 472.9l-.9-.1M703.9 472.8l-1.2-1.8M702.7 470.6l0 .5M730 481.1l-2.3-3.3M730 481.1l3-3.7M732.9 477.4l-5.3 .4M734.1 483.1l-1.1-5.8M733.2 484l.9-.9M729.8 481.5l3.4 2.5M729.8 481.5l.1-.5M727.2 472.8l-1 .9M727.7 477.7l-.5-.3M726.3 473.7l.9 3.8M726 482.2l1.3 1.1M728.2 482.4l-.9 .9M726 482.2l-.8-2.9M728.2 482.4l-1.8-3.7M725.2 479.3l1.2-.6M729.8 481.5l-1.6 .9M727.2 477.5l-.8 1.2M758.3 471.5l-3.3 4.3M752.7 471.3l-.2 .4M755 475.9l-2.9-2.6M752.5 471.7l-.4 1.5M747.2 470.7l.5 .5M752.5 471.7l-4.8-.5M694.3 499.8l3.9 2.4M698.8 495.7l-4.5 4.1M698.8 495.7l.8 1.3M699.6 497l-1.4 5.1M736.5 514.9l-1.9-1.3M734.7 513.6l-6.6 1.6M712.8 520l1-6.2M712.8 520l-1.9 1M711 521l0-5.5M711 515.6l2.7-2M713.7 513.6l.2 .2M718 519.5l-1.8-3.5M718 519.5l-5.1 .6M716.2 516l-2.4-2.2M721.2 524.8l-3.1-5.3M711.1 522.7l-.9-.6M710.1 522l.9-1M706.2 516l4.8-.4M708.2 512.1l-2 3.8M713.7 512.7l0 .9M708.2 512.1l5.5 .6M670 526.4l6.4 .4M676.4 526.9l-1.8-6.2M695.2 520.1l-4.2-2.8M695.2 520.1l-2.8 2.3M686.3 521.2l1.6 2.6M686.3 521.2l3.6-3.8M689.9 517.4l1.2 0M692.4 522.4l-4.6 1.4M702.8 535.6l-1.8-.8M700.9 534.8l-.6 .5M696.7 540.3l3.6-5M700.4 535.3l-7.1-3.7M696.7 540.3l-5.1-3.2M691.6 537.1l1.6-5.5M671 532l9.2 .2M676.4 526.9l2.6 1.1M679 528l.9 1.8M691.6 537.1l-8.2-.6M688.9 507.9l-1.2 .9M688.9 507.9l-6.1-5.5M687.6 508.8l-4.5-1.7M683.1 507.1l-.5-1.1M682.6 506.1l-.4-2.7M682.2 503.4l.5-1.1M680.5 508.3l2.7-1.1M686.4 511l1.2-2.2M679 505.8l3.6 .3M678.9 505.5l3.3-2.1M682 501.4l.6 .9M687.6 500.9l-4.8 1.5M690.6 502.6l.5 2.7M688.9 507.9l1-.4M691.1 505.3l-1.2 2.1M689.9 517.4l-3-3.6M691.1 517.3l2.4-5.6M689.9 507.4l3.6 4.3M714.2 452.9l2.4 .8M714.2 452.9l-.1-3.7M716.6 453.7l1.1-2.2M714.2 449.3l1.1-.7M715.3 448.6l2.3 1.5M717.6 450.1l.1 1.4M717.3 454.7l-.7-1M709.5 457.6l4.7-4.7M722.2 454.8l-4.5-3.3M716.9 443.8l-1.6 4.8M719.2 449.9l-1.5 .2M801.3 442.6l5-.6M809.6 447.8l1.5-1.4M806.3 441.9l4.9 4.6M815.3 435.7l-.4 .3M818.5 444.1l-6 1.3M812.5 439.2l-.6 3.1M811.9 442.4l.6 3M816.6 453.4l-5-7.1M812.5 445.4l-.9 .9M811.6 446.3l-.5 .2M794.9 449.6l1 .2M794.9 449.6l-4.7 3.3M795.9 449.9l.3 3.3M790.7 453.5l-.5-.6M790.7 453.5l4.7-.2M795.4 453.3l.9-.1M798.1 448.6l-2.1 1.2M794.1 447.7l.8 1.9M788.9 452.1l1.3 .8M789.5 447.7l3.5-1.1M799.3 454.3l-3-1.2M795.1 458.6l.3-5.3M795.1 458.6l-3.3-1.3M791.8 457.2l-1.1-3.7M796.2 459.1l-1.1-.5M785.3 436.2l-2.1 .5M785.3 436.2l3.4 5.7M783.3 436.6l1.5 5.4M784.8 442l3.7 .2M788.4 442.3l.3-.4M780.1 436.7l3.1 0M779.6 443.9l5.2-1.9M788.3 445.6l.1-3.4M792.1 441.7l-2.2-.5M789.8 441.3l-1.2 .6M795.2 438.6l-1.7-2.7M789.8 441.3l2-5.4M791.9 435.9l1.6 0M797.3 433.3l-3.3 2.1M793.5 435.9l.4-.4M810.5 433.5l-3.2-2.5M812.8 429.5l-2.4-1.8M775.2 460.7l5.7-.5M777.7 468.7l2.8-3.3M780.5 465.5l.4-5.3M775.7 456.2l5.5 3.6M782.6 453.9l-.3 4.8M782.3 458.8l-1.2 1.1M781.2 459.9l-.3 .3M796.5 470.4l-2.3 1.7M798.3 471.6l-1.6 3.2M794.2 472.1l1.6 2.5M796.7 474.8l-.9-.2M701.2 477.9l1.5 .8M702.8 478.7l3.1-2.4M722.6 467.6l-.4 .6M719.4 466.9l-.3-.9M719.4 466.9l1.5 1.5M721 468.4l1.2-.1M716.1 467.2l.6 2.6M719.4 466.9l-.5 2M719 468.9l-2.3 .9M721 468.4l-.7 2M719 468.9l1.3 1.5M716.1 470.5l.6-.4M715.9 473.3l.2-2.7M716.6 473.6l-.7-.3M718.1 473.7l.4-2.3M718.5 471.4l-1.8-1.3M715.8 467.2l-2.9 2.1M712.9 469.4l2.8 1.2M716.1 470.5l-.4 0M716.6 470.1l0-.3M704.2 489.5l-2.2-5.2M704.2 489.5l-6.4 3.3M696.3 487.6l3.7-3.9M696.3 487.6l1.4 5M702.1 484.3l-2.1-.6M692.9 484.2l3.4 3.4M699.7 483.3l.3 .3M692.2 483.8l-2.1 .8M691.2 490.5l6.5 2.1M699.5 478.3l.6-.3M703.1 482.9l-3-4.8M703.1 482.9l-1 1.4M693.2 495.5l4.6-2.8M694.3 499.8l-2.6 .9M698.8 495.7l-.9-2.9M709.9 469.6l-.5-.4M706.4 469.9l.7 1.2M707.1 471.1l.7 .5M709.9 469.6l-2.2 2M709.9 469.6l-.1 1.5M710.1 471.8l-.3-.7M709.9 469.6l1.7 0M710.1 471.8l1.2 .1M711.3 471.9l.4-2.4M712.9 469.4l-.6 .1M715.7 470.6l-2.3 1.5M713.5 472.1l-1.1-2.7M712.1 468.4l0 1M711.7 469.6l.5-.2M828.5 488.9l-.7-3M841.5 497.1l-13-8.2M827.6 457.8l-1.5 2.4M821.3 463.7l1.7-.6M826.1 460.2l-3.1 2.9M829.5 471.1l-.6 .4M829.3 473.8l-.4-2.3M829.3 473.8l.3 .3M832.2 472.7l-.6 1.2M831.6 473.9l-2.1 .2M828.5 476l-.5 2.3M828 478.2l-1.7 .9M828.5 476l-2.2 .6M826.3 476.6l0 2.5M828 478.2l2.4 .4M830.4 478.6l.9 3.6M826.3 479.1l-1.1 1.4M822.2 475.9l2.1 .5M825.1 480.4l-.9-4M826.3 467.7l-5.2-3M826.3 467.7l-1 2.6M820.7 466.9l4.2 3.8M825.3 470.4l-.3 .3M843.6 471.6l.2-1M843.6 471.6l.8 .6M843.7 470.6l.8 1.2M844.3 472.2l.2-.4M847.2 475.3l.6 .2M849.4 475.2l-.8 .2M847.7 475.5l.8-.1M845.9 476.8l.9 1.9M844.9 478.2l1.3 1M846.7 478.6l-.5 .5M828.5 488.9l-2.2 1.8M826.3 490.7l.1 3.6M830.5 497.1l-4.1-2.8M823.2 497.5l2.7-2.2M823.2 497.5l-.1 1.3M823.4 499l-.2-.2M823.4 499l4.8-1.7M828.1 497.2l-2.2-1.9M824.4 500.2l-1-1.3M822.1 499.1l1-.3M830.5 497.1l-2.3 .1M826.4 494.3l-.4 1M822.3 494.3l1-2.6M822.3 494.3l-1.2 .1M821.1 494.4l-3.3-1.5M823.4 491.7l-6.3-3.7M826.3 490.7l-2.9 1M823.2 497.5l-.9-3.2M819.3 495.7l1.8-1.3M818.1 495.3l-.3-2.5M810.2 494.7l5.5 2.9M815.7 497.6l.4-.1M817.6 479.4l-1.2 8.7M817.3 500.9l4.2-1.7M817.3 500.9l-1.2-.2M816.1 500.3l0 .4M816.1 500.3l5.1-1.2M821.3 499.1l.3 .1M819.9 502.3l-2.7-1.4M815.6 501.8l.5-1.1M815.7 497.6l.4 2.6M820.2 498.4l1.1 .7M763.8 507.4l.4-1.9M771.2 509.2l-5.1-3.9M764.2 505.5l1.9-.1M767.7 501.3l-1.5 2.7M766.2 504.1l-.2 1.3M765.5 484.9l-1.5 2M764 486.9l-.9 5.2M685.4 604l1 1.3M685.4 604l.7-1.4M686.1 602.6l1.5 1.6M686.4 605.3l1.2-.6M687.6 604.7l0-.5M686.2 606.8l.2-1.5M682 604.3l3.4-.2M686.2 602.3l-.1 .3M688.1 603.1l-.5 1M689.6 603l-.1 2.3M689.5 605.2l-1.9-.5M686.5 606.9l2.2-.3M687.7 608.4l.9-.5M688.5 607.8l.2-1.2M689.5 605.3l-.1 1M688.7 606.6l.7-.3M694.3 611.4l.1-.6M697.6 610.4l-3.1 .2M690 602.8l1.1 1.8M689.5 605.3l1.2-.2M691.1 604.6l-.3 .5M691.6 602.3l.9 .6M691.1 604.6l1.5-1.7M693.8 603l-.4 .2M692.5 602.9l.9 .3M729.3 237.1l-1.8-2.8M729.3 237.1l.6 .5M729.8 237.7l1.9-.9M731.7 236.7l2.6-5.7M727.5 234.4l-11-26.3M716.5 208l16.9 21.4M733.4 229.5l.9 1.6M724 237.7l5.2-.6M724 237.7l3.4-3.4M723.4 238l.7-.2M727.3 241.3l2.2-1.8M729.5 239.5l.4-1.8M740.9 227.5l-7.4 2M754.8 248.8l-.2-4.7M754.8 248.8l-3.4-2.6M750.7 237.3l-2.7-.7M751.4 246.2l-3.9-6.3M747.5 239.9l.5-3.3M750.2 231.8l-2.8 2.6M748 236.6l-.6-2.2M768.8 266.7l-3.7-.7M768.8 266.7l-4.6 4M763.9 270.4l.3 .3M763.9 270.4l.6-4.2M764.5 266.2l.6-.2M768.9 264.9l-1.5-.3M768.9 264.9l1.1 1.4M770 266.3l-1.2 .4M767.5 264.5l-2.3 1.5M764.2 270.6l1.7 2.2M770 266.3l4.1 1.8M765.9 272.8l8.2-4.7M786.6 270.6l-8.2 5.2M783.4 280.3l-4.9-4.4M778.8 262.7l-2.4 5.2M778.5 275.8l-2-7.9M779.3 261l-4.4-2.3M774.8 258.7l-5.6 4.3M769.2 263l-.2 1.8M776.5 267.9l-2.4 .2M760.4 239.2l-.1 7.5M754.8 248.8l.5 .8M755.5 249.7l.9-.6M760.3 246.7l-3.8 2.5M771.6 237.5l-2.8 7.4M760.3 246.7l8.5-1.9M781.8 248.3l-10.7-.6M768.8 244.8l2.4 2.9M747.6 276.6l4.1-1.5M751.7 275l.2-1M751.9 274l-.3-2.8M747.5 276.5l-.9-1.3M747 271.7l-.5 3.6M747 271.7l3.3-1.7M750.4 270l1.2 1.3M751.9 274l3.8 .8M756.1 274l-.5 .8M756.1 274l-3.1-2.4M753 271.6l-1.4-.3M799.3 353.3l.5-2.6M796.5 355.3l2.8-2M791 350.3l2 4.6M791 350.3l3.2-2.1M793 354.9l3.6 .3M799.8 350.6l-5.6-2.5M791 342.1l-.7-1.5M791 342.1l5 2.7M799 337l-2.8 7.6M796 344.7l.2-.1M818.7 339.6l-.3 3M818.4 342.5l2.5 .4M822.5 337.6l-.4 5.1M821 343l1.1-.3M813.1 338.8l3.1 5.8M818.4 342.5l-.5 1.4M816.2 344.6l1.8-.6M823.1 362.3l.5-1.5M826.4 361.5l-2.6-1.1M823.6 360.8l.3-.4M816 359.9l.5-.2M818.8 365.4l-2.8-5.6M823.6 360.8l-7.1-1.2M833.3 354.9l-.9-.7M832.8 351.7l-.5 .9M832.4 354.2l-.2-1.6M797.8 366.6l0-2M796.2 368.9l1.5-2.2M794.8 369.1l1.4-.2M793.7 365.1l2.9-1.4M797.8 364.7l-1.1-.9M796.5 355.3l1.7 2.7M791 358.8l2-3.8M791 358.8l5.6 4.8M796.6 363.6l1.7-5.5M786.9 360.9l4.1-2.1M798.2 358l3.3 .6M799.3 353.3l5 2.7M804.2 355.9l-2.7 2.7M766.3 318.6l3.5 5.3M766.3 318.6l-4 2.6M762.3 321.2l.2 3.2M762.5 324.4l4.6 2.4M767.2 326.9l2.4-1.5M769.9 323.9l.1 1M769.9 324.9l-.4 .5M774.5 316.5l-4.6 7.4M766.5 318l-.2 .6M762.1 315.5l-1.7 2.3M760.6 320.1l1.7 1.1M755.7 325.2l5.1 .3M761.3 325.4l-.5 .1M758.3 320.5l-2.6 4.7M761.3 325.4l1.3-1M766.1 332.1l1.1-5.2M764.2 331.9l1.9 .2M764.2 331.9l-2.8-.8M761.5 331.1l-.2-5.7M786.9 342.6l-2.7 4M786.9 342.6l2.8 4.6M789.7 349.8l-5.4 .4M789.7 349.8l0-2.6M784.3 350.1l-.2-3.5M781.1 340.7l3.1 5.9M781.1 340.7l.6-.5M781.6 340.1l.4-.3M787.2 340.5l-5.2-.7M787.2 340.5l-.4 2.1M791 342.1l-1.3 5.1M788.6 339.8l-1.4 .7M782.3 351.5l2-1.4M791 350.3l-1.3-.5M794.2 348.2l1.8-3.4M778.6 341.4l2.5-.7M780.1 328l1.2 2.5M782.6 326.9l-2.5 1M782.6 326.9l1.8 1.6M784.4 328.5l-3.1 1.9M782.6 326.9l-2.6-6.8M780.7 318l-.7 2.1M784.4 328.5l.9 .2M788.4 334.9l-5-.2M785.3 328.7l-1.9 6M781.6 340.1l-3.8-4.8M782 339.8l.5-4.7M777.8 335.4l3.9-.9M781.7 334.4l.8 .6M783.4 334.7l-.8 .4M758.6 311.1l1.9-.6M758.6 311.1l-4.2-5.2M760.5 310.4l-4.4-6.7M754.3 305.9l1.8-2.1M761.2 310.3l-.7 .1M758.1 315.8l-.1-4.3M758 311.5l.6-.5M757 302l-.8 1.7M751.9 302.4l2.6-1.8M751.1 306.1l.3 .4M751.4 306.5l2.9-.6M751.9 302.4l-.7 3.7M752.7 276.5l-1-1.5M747.6 276.6l3 4.3M752.4 281.1l-.4 0M752.4 281.1l.3-4.6M752 281.1l-1.4-.3M752 281.1l-2.9 6.2M747.8 285.2l-.1-.3M750.6 280.9l-2.9 4.1M818.4 431l1-2M821.2 429.1l-1.5-.2M823 425.6l-1.2-.2M823.8 426.6l-.8-.9M821.9 425.4l-2.1 .5M819.6 428.9l.2-2.9M823 425.6l.1-2.1M823.1 423.6l-.8 0M821.9 425.4l-.8-1.4M822.3 423.6l-1.2 .4M813.9 415l-.1 1M812.5 417.3l.9-.6M813.8 416l-.4 .7M817.5 416.7l-.2-.4M817.3 416.3l-2.4 .5M817.5 416.9l-.3 .4M817.2 417.3l-2 .2M815.2 417.5l-.3-.7M820.2 415.2l-2.5 1.5M817.2 415.8l.1 .5M813.8 416l1.1 .7M817 417.9l1.1 2.5M817 417.9l.2-.6M818.1 420.4l.5-2.5M818.5 417.9l-1-1M815.2 418.5l0-.9M815.2 418.5l1.1 0M817 417.9l-.7 .6M815.2 417.5l-1.1 .3M814.1 417.8l-.6-1.1M782.1 408.5l.2-3.3M780.4 405.4l.3-.6M780.7 404.8l1.6 .4M775.4 404.5l5-1M780.7 404.8l-.3-1.3M786.7 405.7l-.4-.1M786.3 405.6l-4-.4M784.8 381.6l.8 .6M784.8 381.6l-2.4 3.9M785.6 382.1l1.6 3.4M787.2 385.5l-3.3 4.9M782.4 385.4l.4 3.5M782.8 388.9l.8 1.6M783.9 390.4l-.4 .1M790.3 379.3l.1 .4M790.4 379.8l-4.8 2.4M782.4 379.1l2.4 2.4M778 382.1l4.4 3.3M790.4 385.7l-3.2-.2M789.2 392.7l-5.3-2.3M777 382.8l5.8 6.1M782.2 391.6l1.3-1.1M787.8 399.5l-6.5-1.9M796.2 379l.6 2M796.2 379l-.4-.3M795.8 378.7l-2.2 .6M796.8 381l-1.9 1.3M795 382.3l-2.3-.7M793.6 379.3l-1.2 1.7M792.4 381l.3 .7M798.9 380.9l-2.1 .1M797.6 378.8l-1.4 .2M797.5 377.3l-1.3 .1M796.2 377.3l-.4 1.3M797.3 385.6l-2.3-3.2M791.5 384.4l1.2-2.7M790.4 379.8l2 1.2M790.7 374.5l1.5 .5M793.6 379.3l0-.4M792.2 374.9l1.4 4M755.8 377.4l.1 1.5M756.1 379.2l-.2-.3M756.1 379.2l4.3-1.1M755.8 377.4l.8-.8M760.4 378.1l-3.8-1.6M756.1 379.2l.1 .3M761.4 379.5l-.4-1.2M760.4 378.1l.6 .2M764 376.1l-2.6 .5M764 376.1l-.9-3.6M762.8 372.5l-1.5 3.7M761.4 376.6l-.1-.3M766.3 378.2l-.6-1.8M765.7 376.4l-1.7-.4M761 378.3l.4-1.7M764.3 371.9l-1.3 .6M766 373.4l.1 1.9M766.1 375.2l-.4 1.2M758.5 367.2l-1 3.5M757.5 370.7l5.3 1.9M757.7 373.6l3.6 2.6M757.3 370.9l.4 2.7M757.3 370.9l.2-.2M756.6 376.6l1.1-3M771.2 372.4l-.1 .3M766.1 375.2l4-.1M771.1 372.7l-1 2.4M766.3 378.2l3.8 .5M770.2 375.1l-.1 3.6M770.4 379.4l-.3-.6M773.1 377.1l2.1-2.5M772.9 376.7l.1 .4M772.9 376.7l.8-3.1M773.7 373.6l1.6 1M774.7 377.9l-1.6-.8M776.6 375.1l-1.3-.4M770.1 378.8l2.8-1.7M771.1 372.7l1.7 4.1M771.8 372.1l1.8 1.5M734.4 400.6l-4.2-1.8M734.4 400.6l-1.5-6.5M730.2 398.8l-.4-4.8M729.8 394l1-.6M732.9 394l-2.1-.6M750.1 389.7l.3 2.1M750.1 389.7l-1.6-.6M748.1 391.6l-.1-2M748 389.6l.5-.5M748.5 389.1l1.1-3.1M750.1 389.7l2-2.7M752.1 387.1l-.5-.6M751.7 386.5l-2-.5M750.3 382.6l-.9 .3M750.3 382.6l.7-1.5M750.9 381.1l-.9-.8M750 380.3l-.7 2.5M746.2 387l.4-.4M746.2 387l.2 2.6M746.6 386.7l.6 1.1M747.1 387.7l-.2 1.8M746.4 389.6l.5-.1M745.2 387.6l1-.6M745.5 389.7l-.3-2.1M746.2 389.8l.2-.2M748.5 389.1l-1.3-1.4M748 389.6l-1-.1M745.2 387.6l-.4 0M743.3 390.6l1.5-3M753.9 355.3l1.6 .8M753.9 355.3l2.3-4.5M755.5 356l3.7-.1M756.2 350.7l2.7 2.2M759.2 355.9l-.3-3M761.2 350.1l1.6-5.6M761.2 350.1l-1.3-.2M762.8 344.5l-3.9 4.6M759.9 350l-1-.9M762.6 350.9l-1.4-.8M764.3 341.7l-1.5 2.8M764.8 341.7l-.5 0M758.9 353l1-3M759.4 356l-.3-.1M761.6 341.1l2.8 .6M761.6 341.1l-4.8 7.3M756.8 348.4l2.1 .7M756.5 348.4l.4-.1M756.5 348.4l-.3 2.3M851 442.7l-1.6 3.7M851 442.7l.3-3.9M851.1 439l-3.5 7.6M851.1 439l.3-.2M847.6 446.6l1.9-.2M852.7 445.7l-1.7-3M850.8 446.9l-1.3-.5M856.4 443.5l-3.9-5.8M852.5 437.7l-1.1 1.1M845.2 441.6l5.9-2.6M845.8 447l1.7-.4M844.2 434.1l.8 7.3M852.6 437.2l-.1 .5M845.8 447l.9 1.6M866.6 444.4l1 0M866.6 444.4l-1.3 .9M865.3 445.4l2.3-.7M867.6 444.7l-.1-.3M868.1 446.1l-.5-1.4M867.8 443.6l-.2 .8M865.9 441.9l-.4 .1M866.6 444.4l-1.8-1.9M864.9 442.5l.7-.6M865.5 438.1l-1.3 .8M865.5 441.9l-1.3-3.1M860.9 437.9l3 .9M860.3 436.9l.5 1M863.8 438.8l.4 0M869.2 434.3l-1.7 1M869.2 434.3l2.8 1.3M867.5 435.3l3 1.7M872 435.6l-1.5 1.4M869.7 431.2l-.5 3.1M866.7 435.3l.8-.1M872.8 435.2l-.8 .3M870.3 437.8l.3-.8M848.7 457.3l-1.3 1M849.7 463l-.9-1.5M847.4 458.3l1.4 3.2M835.8 456.5l2.8 1.6M835.8 456.5l5.2-5.5M838.6 458l5.3-.4M841 451l2.9 6.7M831.8 457.3l3.3 6.7M835.1 464l.3-.1M835.5 463.9l3.2-5.9M840.7 450.2l.2 .7M835.5 463.9l5.3 1M845.2 458.4l-1.1 2.2M841.6 464.4l2.5-3.7M840.7 464.9l.9-.5M845.2 458.4l-1.3-.8M847.4 458.3l-2.2 .2M828.3 463.2l-.7 .6M828.3 463.2l1.3-.6M827.6 463.8l.3 2.7M829.6 462.7l1.9 1.5M831.5 464.1l-1.8 2.2M827.9 466.5l1.7-.2M826.1 460.2l2.1 3M823 463.1l4.6 .7M829.8 457.4l-.2 5.3M826.3 467.7l.8-.1M827.1 467.6l.9-1.1M835.1 464l-.3 .3M834.8 464.3l-3.3-.2M831.4 468.5l-1.8-2.2M832.3 468.4l2.3-1.6M834.8 464.3l-.3 2.5M829.7 469.8l-2.4-1.9M827.3 467.9l-.2-.2M835.2 469.9l-1.1 2.6M832.9 472.4l1.2 .1M834.6 466.8l.6 .9M835.2 469.9l0-1.9M843.3 469.8l-3.3-1.4M843.3 469.8l.3-.1M844.1 469.3l-.4 .3M844.1 469.3l-3.6-2.6M840.5 466.7l-.5 1.6M844.7 468.2l-.5-1.2M844.2 467.1l-2.6-2.7M844.7 469.1l0-.8M840.7 464.9l-.2 1.8M844.7 469.1l-.6 .3M840 468.4l-4.8-.6M839.9 471.4l-.3 1.6M839.9 471.4l-.5-1.3M839.3 470.2l-1 .2M838.3 470.4l-1 .8M839.6 473l-2 .4M837.4 471.2l-.6 1.4M837.6 473.5l-.8-.9M835.2 467.9l3.1 2.4M840 468.4l-.2 .9M839.8 469.2l-.5 1M835.2 469.9l2.2 1.3M840.6 474.1l-1-1.1M839.9 475.8l-2.1 .6M837.8 476.4l-.5-.5M837.3 475.9l.3-2.5M834.4 472.6l-.2-.2M834.4 472.6l2.4 0M836.7 475.9l-1.8-.8M835 475.1l-.6-2.4M837.3 475.9l-.5 0M841.2 471.6l1.1 .6M841.2 471.6l.6-1.2M842.7 470.4l-.8 0M842.7 470.4l-.3 1.6M839.9 471.4l1.3 .2M842.5 473.8l-.3-1.7M839.8 469.2l2 1.2M843.3 469.8l-.7 .6M843.7 470.6l-.1-.9M843.6 471.6l-1.2 .4M844.4 472.9l-.1-.7M844.1 474.1l.3-1.1M852.5 416.2l-1.5-.3M847.1 420.1l.1-1.8M847.3 418.3l3.8-2.3M851.5 413.7l-3.6 .2M851.1 415.9l-3.2-2.1M866.8 412.3l1.1 0M866 409.4l2 1.5M867.9 412.3l.2-1.3M868.3 408.3l-1.4-.2M866.3 408.1l.6-.1M868.3 408.3l.7 1.5M868.1 410.9l.9-1.2M867.1 418.8l.7-.7M867.9 412.3l.5 .7M868.4 413l.7 3M867.8 418.1l1.4-2.1M871.8 421l1.9-2.4M867.8 418.1l5.9 .5M874.7 418.9l-.1-.6M873.7 418.6l.9-.3M927.3 436.8l-52.6-18.7M874.7 418l-.1 .2M871.4 398.1l0 5.4M871.4 403.4l5.6 .6M871.3 403.5l-.5 1.2M871.3 403.5l-1.4-.5M870.8 404.7l-1.3-.7M869.9 403l-.4 1M867.9 400.1l2 2.9M867.4 400.5l1.5 3.8M869 404.4l.6-.3M844.3 410.7l-.9 .5M844.3 410.7l3.5 1.8M843.5 411.2l-.7 1.2M842.8 412.4l.9 1.6M843.6 414l3.7 .7M847.3 414.7l.6-.8M847.8 412.6l.1 1.3M844.6 410l-.2 .8M842.8 410.4l.6 .8M848.2 411.8l-.3 .8M839.3 410.3l.2 1.9M839.5 412.3l3.2 .2M847.3 418.3l0-3.5M867.9 370.4l2.6 3.5M867.9 370.4l-.5 0M867.4 370.4l-2 3.3M870.5 373.9l-5-.2M870.8 368.3l-2.9 2.1M872.7 375.7l-2.3-1.8M863.7 367.3l3.7 3.1M865 374.2l.5-.5M837 440.2l3.2-2.2M837 440.2l-.9-.5M836.1 439.6l.4-4.5M840.3 436.1l-.1 1.8M840.3 436.1l-2.6-1.2M837.6 434.9l-1.1 .2M837.7 443.2l-.7-3.1M842.3 441.1l-2-3.2M832 439.7l4.1 0M835.1 434.9l1.4 .2M843.7 434l-3.5 2.1M838 432l-.4 2.9M825 423.6l.4 .3M825.6 421.6l.5 1.7M826.1 423.4l-.7 .6M824.3 426.6l1.1-2.1M823.1 423.6l.3-.7M825.4 424.5l0-.6M814.1 417.8l.2 1M812.5 418.6l.4 1.2M814.3 418.9l-1.4 1M815.2 418.5l-.6 .4M814.3 418.9l.4 0M812.4 420.7l.3-.2M812.7 420.5l.2-.6M818.5 417.9l1 .5M818.1 420.4l.1 .3M819.5 418.4l-.2 1.9M818.1 420.7l1.2-.4M822.8 421.6l.4 .2M822.8 421.6l-1.4-.2M822.3 423.6l-1.9-.6M820.4 422.9l1-1.5M823.6 416.3l-.6 2.3M823.6 416.3l1.3 1.8M823 418.6l1.8 .3M824.9 418.1l-.1 .8M822.8 421.6l.1-2.9M825.4 419.7l-.6-.8M818.8 416.8l1.5-.1M818.8 416.8l1 .7M820.3 416.7l-.6 .8M817.7 416.6l1 .1M821 415l.4 .7M821.4 415.7l-.2 .5M820.3 416.7l.9-.5M819.7 417.5l-.1 .8M823.5 415.9l-2.1-.2M823.5 415.9l0 .5M822.9 418.6l-.8-.1M821.2 416.2l.1 .9M822.1 418.5l-.8-1.4M843.6 414l-1.5 2.3M839.5 412.3l2.6 4M842.2 421.5l-.3-4M841.8 417.4l.3-1.1M835.2 412.2l0 .4M839.5 412.2l-2.5 .9M835.2 412.6l1.8 .5M838.1 420.3l-1.9-1.6M833.6 422.5l-.4-3.2M833.2 419.3l1.6-.9M836.2 418.7l-1.4-.3M828.3 422.9l.5 .4M828.3 422.9l-.5 .4M827.8 423.3l-.6 1.3M829.1 424.8l-1.8 .3M829.1 424.8l-.3-1.6M827.3 425.1l-.1-.5M825.4 424.5l1.8 .1M826.1 423.4l1.8-.1M829.6 426.4l-.5-1.6M827.4 428l-.1-2.9M831.3 424l.3-1.3M831.3 424l-2.4-.7M829 423.3l2.5-1.6M831.6 422.6l-.1-.9M832.3 425.9l-1-1.9M833.4 422.8l-1.8-.2M833 419.4l-1.5 2.2M828.1 422l.9-1.9M828.1 422l.2 .3M828.2 422.4l1.9-.9M830.1 421.5l-.4-1M829.8 420.4l-.8-.3M827 421.3l1.1 .7M828.9 419.4l.1 .8M828.3 422.9l-.1-.5M831.5 421.6l-1.4-.1M833 419.4l-.3-.1M832.4 419.3l-2.6 1.1M826 409.8l0 1.7M828.4 412.4l-1.2-.2M826 411.5l1.2 .7M826 411.5l-1.4 1.3M831.2 409.2l.5 1.4M828.7 412.6l.3 .9M831.6 410.6l-1.1 2.1M829.2 413.5l1.3-.8M831.6 410.6l1.2 2.2M830.5 412.7l2.4 .1M834.8 418.5l-1.7-3.8M837 416.7l-.8 2M835.2 412.6l-1.7 .9M837 413.1l.1 3.6M833.1 414.6l.4-1.1M832.9 412.8l.7 .8M828 415.2l-1.6-1.4M828 415.2l-.2 1.1M827.9 416.3l-1.6-.1M826.3 416.2l-1.8-.9M826.5 413.7l-1.6-.3M824.8 413.4l-.4 1.6M824.4 415l0 .3M829.1 413.5l-1 1.7M827.2 412.2l-.8 1.6M828.2 416.9l-.4-.6M824.9 418.1l1.4-1.9M823.5 415.9l.9-.6M824.7 412.8l.1 .6M822.5 413.7l1.9 1.3M717.2 255.7l-.1 1.9M717.2 255.7l3.5-.8M720.7 260.7l-1.8-.5M720.7 260.7l2.5-3.9M720.7 254.9l2.5 1.9M721.7 251.8l-1 3.1M715.7 253l1.5 2.7M715.7 253l.9-.7M721.7 251.7l-5 .6M724.3 247.2l-.2 2.4M724.3 247.2l-3.5 .7M724.1 249.6l-2.4 .6M721.6 250.2l-.7-1.4M720.8 247.9l.2 .9M720.1 246.3l0 .8M726.2 245.3l.1 .4M720.1 247.1l.7 .8M726.3 245.7l-2 1.4M721.7 251.7l0-1.5M716.6 252.3l.5-.8M717.1 251.5l3.9-2.7M720.1 247.1l-2.1 .8M717.9 247.9l-.9 3.6M735.6 247.1l-2.6 4.3M735.6 247.1l-1.2-2M734.1 245.2l.3-.1M734.1 245.2l-5.9 2.8M732.9 251.5l-4.8-2.7M728.2 248l-.1 .8M727.1 243.1l7 2.1M729.5 239.5l5.1 4.8M734.5 244.3l-.1 .9M726.3 245.7l2 2.2M727.5 250.1l.7-1.4M727.5 250.1l-1.3 .3M726.2 250.5l-2.1-.9M722.6 273.2l.2 .1M723.1 273.3l-.3 0M722.6 273.2l-.7-2.7M723.1 273.3l1.2-3.7M724.3 269.6l-2.5 .9M693.3 272.5l-2.8 2.2M692.1 276.7l-1.6-2M693.7 272.8l.3 1.1M692.1 276.7l1.6-1M693.7 275.7l.4-1.7M687.5 272.5l.4 .7M690.5 274.7l-.4-.1M687.9 273.2l2.2 1.4M690.8 259.8l9.3 1.1M700.1 260.9l2.9-1.3M703 259.6l-2.6-3.7M689.1 245.9l11.2 10M707.6 258l-2.4-1.3M707.6 258l.5-.3M708 257.7l-4.1-4.8M705.1 256.6l-3-4.4M704 252.8l-1.8-.6M700.3 255.9l4.8 .8M713.4 258.8l-2.8-.5M710.5 258.3l.8 5M714.9 263.5l-1.5 .3M711.3 263.4l2.1 .5M689.8 294.2l-1.7-.2M689.8 294.2l.3-.4M690.1 293.8l-2.1-2.3M688.1 294l-.7-.1M687.1 293.7l.3 .2M687.1 293.7l.4-2.3M687.5 291.4l.5 .1M690.8 301.7l-.9-7.5M688.8 298.9l-.7-4.8M692.6 291.8l-2.4 2M692.6 291.8l1 .6M692.6 291.8l-.4-.8M692.1 291l-4.1 .5M687.6 297.3l-.3-3.4M686.2 293.9l.8-.3M686.8 290.3l.7 1.1M691.9 289.8l.3 1.3M690.5 280.3l-3.7-.8M690.5 280.7l-3.5 1.6M686.8 279.5l-.3 1.6M686.5 281l.6 1.2M685.8 278l1 1.5M685.8 278l-6.7-.5M662.1 283l24.4-2M681.3 286.6l5.6-3.7M686.9 282.8l.2-.6M693.9 286.5l1.6-1.3M693.9 286.5l.9 .7M695.4 285.2l.3 .9M695.7 286.1l-1 1.1M695.7 286.1l1.2 1.1M694.8 287.2l1.7 .8M696.5 288l.5-.7M751.4 306.5l-.3 2.4M758 311.5l-3.1 .8M751.1 308.8l3.8 3.5M753.7 314.6l.6-1.5M754.9 312.3l-.6 .8M721.5 420.5l1.6-1.3M721.5 420.5l-.9-.6M720.6 420l.3-1.5M723.2 419.2l-2.3-.8M723.4 419.3l-.3 0M721.9 421.3l-.4-.7M720.1 416.5l.8 2M721.8 416.3l-1.7 .2M715.2 419.9l1.2-1.3M716.4 418.6l-.4-3.1M713.3 416.6l.2-1.5M713.4 415.1l2.6 .3M719.6 416.2l-.5 1.1M716.4 418.6l.8 .4M719.6 416.2l-1-1.2M716.1 415.5l2.5-.4M707.6 426.6l1.4 1.4M707.6 426.6l2.3-3.2M709 428l2.2-2.5M711.2 425.5l-.7-1.2M709.9 423.5l.6 .9M705.6 426.1l2 .5M709.4 428.9l-.4-.9M709.4 421.4l.5 .7M709.9 422.1l0 1.3M710.9 429.9l1.4-4.1M712.3 425.8l-1.1-.3M709.6 420.7l-.6-1.8M709.4 421.3l.2-.6M704.4 421l1.7-2.5M709 418.9l-1.3-.8M706.1 418.5l.8-.7M707.7 418.1l-.8-.3M692.5 393.9l5.5-.3M701.6 395.6l-3.6-2M701.6 395.6l-4.7 3.8M696.8 399.5l-4.5-5.4M698.4 413.6l-6.3-3.9M699.4 415.6l-1-2M690.9 379.6l1 1M694.6 388l-2.7-7.4M694.6 388l-2.1 5.9M688.6 379.7l-24.7 22.3M692.3 394.1l-28.4 7.9M685 366.9l.8-6.1M684.1 357.7l.4 .3M685.8 360.8l-1.3-2.7M699.4 371l-2-6.2M699.4 371l-.1 .3M699.3 371.3l-5.7-4.2M697.4 364.8l-3 .7M694.4 365.4l-.9 1.7M702.3 368.6l-4.9-3.9M702.3 368.6l-2.8 2.4M695.3 375.4l1.7-.3M698.9 374.2l-1.9 .9M698.9 374.2l.4-2.9M692.8 368l.7-.9M692.3 362.3l-6.5-1.5M692.3 362.3l2.2 3.1M724.2 423.6l-1.7 .4M724.8 423.2l-.5 .4M721.2 422.5l-.2 .2M720.9 422.7l1.6 1.2M712.3 425.8l2.3-.4M710.5 424.3l4-.1M714.5 424.2l.1 1.1M709.9 422.1l4.5 .8M714.5 424.2l-.1-1.3M709.6 420.7l2.4-1.5M714.4 423l.7-1.1M717.4 419.6l-.8 2.2M715.2 421.9l1.4-.1M718 406.1l-3.2 2.7M717.8 411l-3-2.2M717.8 411l1.8-1.2M719.6 409.8l-1.6-3.7M723.8 411.1l-3.8-1.3M723.8 411.1l1.2-.3M725 410.8l-4.4-3.8M720 409.7l.6-2.8M719.6 409.8l.3 0M717.8 411l1.2 2.8M719 413.8l4.8-2.7M726.1 410.8l-1.1-.1M720.1 416.5l-.5-.3M718.6 415l.4-1.2M719.6 405.6l1 1.4M718 406.1l1.6-.5M721.7 392.3l-5.3 6.9M721.7 392.3l1.2 3.9M720.5 401.5l1.4-2.1M716.4 399.1l4.1 2.4M722.9 396.2l-.9 3.2M729.6 403.4l-.5-1.3M729.6 403.4l-4.4 1.8M729.1 402.2l-3.9-.3M725.2 405.3l-1.2-1.5M724 403.7l1.2-1.9M729.4 399.5l-.3 2.6M730.2 398.8l-.8 .7M735.5 401.4l-1.1-.9M726.5 410.8l-1.2-5.5M721.4 403.3l2.6 .4M721.4 403.3l-1.8 2.2M705.2 390.6l-3.4-2M705.2 390.6l3.7-.4M708.9 390.2l-6.2-7.8M701.7 388.5l-1-1.9M700.8 386.6l.7-3.4M701.5 383.2l.2-.2M701.7 383l1-.6M697.9 393.6l3.8-5.1M702.2 395.9l-.6-.2M702.2 395.9l3-5.3M694.6 388l6.2-1.5M691.9 380.7l9.6 2.5M697 375l4.7 8M724.2 423.6l-.5 2.6M725.6 424.7l-1.5 2M723.7 426.2l.4 .5M726.1 425.7l-1.9 1.4M724.1 426.7l.2 .4M727 429.4l-2.7 .5M724.3 427.1l0 2.8M725.5 435l-3.2-3.8M724.3 429.9l-2 1.3M741.7 422l-1.5 .7M741.7 422l1.3-.2M743.2 422.4l-.3-.6M743.2 422.4l-.7 4.3M740.2 422.7l-2.3 4.2M737.9 426.8l1 .8M738.9 427.7l3.7-1M740.3 414.6l1.4 7.4M739 420.9l1.1 1.8M744.4 420.8l-1.4 1M744.9 425.4l-1.6-3M737 426.8l.9 .1M739.9 429.8l-1.1-2.2M707.8 471.6l.1 .2M707.1 471.1l-.7 .8M706.4 471.9l.5 1M706.9 472.9l1-1.1M710.1 471.8l-.3 .8M709.8 472.6l-1.4-.2M709.9 471.2l-1.6 1M708.4 472.4l-.1-.2M708.2 472.2l-.4-.3M700.1 478l.7-.3M700.1 478l-1.3-3.6M701.5 475.7l-1.5-1.2M701.6 476l-.1-.3M698.9 474.4l1.2 .1M699.1 467l-.2 .2M702.3 470.2l-1.4-.2M701 469.9l-2.1-2.7M693.8 466.1l4.4 1.4M698.8 467.2l-.7 .3M701.5 475.7l.1-1.5M700 474.5l.3-1.2M701.6 474.3l-1.3-.9M698.8 474.3l1.3-1.3M700.1 473l.2 .3M697.1 477.4l-3.7-.1M697.1 477.4l-.8-2.5M696.3 475l-2.8 2.3M697.4 474l1.3 .3M697.6 478.2l-.5-.8M697.4 474l-1.2 .8M693 471.7l2.2 2.4M693 471.7l-2.3 4.8M695.2 474.1l-3 3.5M690.6 476.5l.5 .7M691.2 477.2l.7 .6M691.8 477.8l.3-.2M689.2 476.2l1.4 .3M692.4 470.7l.5 .7M692.9 471.4l.1 .3M696.2 474.8l-1.1-.6M693.4 477.3l-1.3 .3M687.4 481.4l3.8-4.2M693.1 481.4l-1.3-3.6M726.3 473.7l-2.4 .6M724 479.1l-1-4.2M725.2 479.3l-1.2-.2M723.9 474.2l-.9 .7M718.5 471.4l1.1-.3M719.5 471.1l.7-.5M746.2 480.7l2.5-.9M746.2 480.7l-2.6-2.8M749 478.5l-2.9-2.7M749 478.5l-.3 1.3M744.8 475.8l1.3 0M744.8 475.8l-1.1 1.2M743.7 477l-.1 .9M749.3 480.8l-2.7 1.8M749.3 480.8l-.6-1M746.7 482.6l-.5-.8M746.2 481.8l0-1.1M740.3 476l-.2-2.6M744.2 472.9l.6 2.9M740.3 476l3.5 1M751.1 477.5l-3.1-2.8M751.1 477.5l.7-4.1M751.9 473.4l-3.2 .7M748 474.7l.7-.6M751.2 477.7l-2.1 .8M746.1 475.8l2-1.1M747.7 471.3l1 2.8M744.2 482.5l0 2M744.2 482.5l-.9-.6M743.2 481.9l-2 3.4M744.2 484.5l-1.6 1.5M742.6 486l-1.3-.2M741.3 485.8l0-.5M746.2 481.8l-2 .7M747.3 484l-.7-1.5M747.3 484l-3.2 .4M742.2 480l1.4-2.1M742.2 480l1 1.9M740.2 480.9l1 4.4M742.2 480l-2 .9M734.1 483.1l2.9-1.3M737 481.9l.3-.5M733.1 477.2l2.3 .7M737.2 481.4l-1.8-3.5M707.7 510.7l-1.3-.6M705.6 509.2l.9 1M712.4 506l-.3-.4M712.4 506l-4.7 4.7M712.1 505.6l-4.4-1.2M705.6 509.2l.1-1.2M707.7 504.4l-2 3.6M703.2 520.9l-4.8-.6M703.2 520.9l1.4-3.9M704.6 517l-.9-2.5M697.3 514.7l4.3-2.8M697.3 514.7l1.1 5.7M703.7 514.5l-1.2-1.8M702.5 512.7l-1-.8M706.4 510.2l-2.8 4.3M708.2 512.1l-.5-1.4M706.2 516l-1.6 1M693.5 511.7l2.1 .5M695.5 512.2l1.7 2.5M695.2 520.1l2.7 .4M698 520.5l.4-.1M705.5 509.2l-3 3.5M701.1 534.1l-2.3-4.3M701.1 534.1l5.5-6.4M698.7 529.8l5-8.2M706.5 527.6l-1-4.7M705.5 523l-1.8-1.4M700.9 534.8l.1-.8M698 520.5l-2.8 7.2M703.2 520.9l.6 .7M695.2 527.7l3.5 2.1M710.1 522l-4.6 .9M733.2 484.5l5 .7M733.2 484.5l-.3 1.7M732.9 486.2l5.5-.7M738.2 485.2l.2 .2M733.2 484l0 .5M737 481.9l1.3 3.4M740.2 480.9l-.6-.1M739.6 480.8l-2.4 .5M739.6 486.7l-1.2-1.3M739.6 486.7l1.7-.9M680.6 523.3l3.5-2.5M683.5 519.1l-4.9-.4M683.5 519.1l.6 1.6M678.6 518.7l.4 2.6M679 528l1.6-4.7M679.9 529.8l8.1-4.3M687.9 523.8l.1 1.8M686.3 521.2l-2.2-.4M683.3 518.2l.2 1M677.8 516.7l.7 2M689 526.7l-.4 4.2M689 526.7l3.2 .3M688.6 531l4.6 .3M692.2 527l2.3 1M694.4 528l-1.3 3.2M683.4 536.5l5.1-5.5M687.9 525.6l1.1 1.2M692.4 522.4l-.3 4.6M693.3 531.6l-.1-.3M695.2 527.7l-.8 .3M707.7 504.4l-1.8-1.7M705.6 508l-4.4-1M705.9 502.7l-.6-.1M705.3 502.5l-4.4 2.3M701.2 507l-.2-2.1M702.5 498.2l2.8 4.3M699.6 497l2.9 1.2M698.2 502.1l0 1.4M700.9 504.9l-2.8-1.3M691.1 505.3l4.1-.3M698.2 503.5l-3 1.5M805.9 438.2l3 .8M805.9 438.2l-.8-1M805.1 436.5l4.9-.6M805.1 436.5l-.1 .7M808.9 439.1l1.3-2.9M810.1 436.2l-.2-.3M806.3 441.9l-.4-3.7M811.9 442.4l-3-3.3M802.4 439.2l2.7-2M804.3 434l.8 2.5M810.5 433.5l-.5 2.3M788 433.3l-.4-4.5M788 433.3l2.2 1.4M790.2 434.7l3-3M787.6 428.8l3.7-1.8M791.3 427l2.2 2.3M793.5 429.3l-.2 2.3M783.6 426.9l4 1.9M785.3 436.2l2.7-2.9M791.9 435.9l-1.7-1.2M793.9 435.5l-.7-3.8M792 426l-.7 1M797.8 432l-4.3-2.7M814.4 424.9l2.5 .2M814.4 424.9l-.1 .9M814.3 425.9l1.3 1.6M816.9 425.1l.3 .6M817.2 425.7l-.6 1.9M815.5 427.5l.7 .1M816.3 427.7l.3-.1M814.1 424.1l.3 .9M813.6 423.9l.5 .2M810.4 427.8l3.9-1.9M812.8 429.5l2.7-2M819.8 425.9l-.3-.4M819.5 425.5l-2.3 .2M819.5 429l-2.9-1.4M815.4 432.2l.9-4.6M787.6 479.4l.1-2.2M789 480.4l.1-2.2M789.1 478.2l-1.4-1M784.9 478.4l2.5-1.4M787.6 477.2l-.2-.2M791.4 478.1l1.4 .4M791.4 478.1l-1.5 3M792.8 478.6l-.5 2.8M789.9 481.1l2.4 .2M789.2 481.3l.7-.1M794 483.1l-1.8-1.7M796.8 466.5l-4.6 2.3M792.2 468.8l-2.2-2M793.3 463.4l-3.6 .3M790 466.8l-.2-3.1M791.8 457.2l-3.4 4.9M789.8 463.7l-1.4-1.5M782.3 458.8l5.5 3.3M788.4 462.1l-.6-.1M794.2 472.1l-1.4-.6M792.2 468.8l.1 1.3M792.7 471.5l-.4-1.4M799.7 475.8l2 .4M799.7 475.8l-1.5 0M798.2 475.9l-1.7 4.1M802.3 476.5l-.7 4.8M802.3 476.5l-.5-.2M801.6 481.2l-4.5 .9M797.1 482.2l-.6-2.2M800.3 470.7l1.4 5.6M799.5 471.3l.3 4.6M796.7 474.8l1.5 1.1M795.8 474.5l-1.8 1.6M794 476.2l-.3 1.9M793.7 478.1l2.8 1.9M803.3 476l-1.1 .5M803.1 482.6l-1.5-1.4M796.5 483l.6-.8M793.7 478.1l-1 .5M707.9 478.7l1.3-1.5M707.9 478.7l-1.5-1M706.4 477.7l-.5-1.4M705.8 476.2l.3-.5M709.2 477.1l-.3-1.7M708.9 475.4l-2-.1M706.2 475.7l.8-.4M728.3 469.6l-4.8-.1M722.1 468.3l.2 .5M723.6 469.5l-1.2-.8M707.3 481.1l-2.3 1M707.3 481.1l.4-.4M707.8 480.3l0 .3M707.8 480.3l-3.1-.7M705 482.1l-1-.1M704.1 482l0-2M704.6 479.6l-.6 .4M711.8 481.2l-.4-1.6M711.8 481.2l-1 .3M711.4 479.6l-3.3-.4M710.8 481.5l-1.9 .1M708.9 481.6l-1.1-.9M708.1 479.2l-.3 1.2M708.1 479.2l-.2-.5M706.4 477.7l-1.7 1.9M703.1 482.9l1-.9M702.8 478.7l1.3 1.4M705.5 489.7l-1.3-.2M702.5 498.2l7-4.7M705.5 489.7l4.4 2.9M710 492.6l-.4 .9M705.9 502.7l3.2-5.1M709.5 493.6l-.4 4M727.3 483.3l-.3 1.2M732.7 487.1l-5.6-2.3M732.7 487.1l.3-1M726.9 484.5l.1 .3M714.8 480.9l2.2 2.8M714.8 480.8l4.2 .1M717 483.7l2.1-2.7M712.7 482l2.1-1.2M712.7 482l.2 2.9M712.8 484.9l.9 1.5M713.7 486.4l2.8-1.2M716.6 485.2l.4-1.5M718.1 519.5l4.7-6.2M716.2 516l5.4-3.3M721.6 512.7l1.1 .7M727.2 515.9l-3.7-2.4M723.5 513.5l-.8-.1M714.9 509.4l4.1 .6M714.9 509.4l-1.3-2.5M713.6 506.9l5.9-4.2M719 510l.7-.8M719.7 509.1l1-6.1M719.5 502.7l1.2 .3M713.7 512.7l1.2-3.3M721.6 512.7l-2.6-2.7M712.4 506l1.2 .9M846.9 483.5l-1-.8M845.6 501.6l-1.6-19M845.9 482.7l-1.9-.1M840.2 484.3l3.4-2.3M843.9 482.6l-.3-.6M846 479.7l-1 .7M846 479.7l1.1 1.6M847 481.4l-1.6 .1M845 480.5l-.2 .5M844.8 481l.6 .6M846.2 479.2l-.2 .6M843.6 479l.3 .7M843.9 479.7l1.1 .8M848.8 480.7l-2.6-1.5M848.8 480.7l-1.7 .7M846.9 483.5l.1-2.1M852.8 481.5l-2.8-.9M848.8 480.7l1.3 0M845.9 482.7l-.5-1.2M842.6 481l1.3-1.3M842.6 481l1 .9M843.6 481.9l1.2-1M841.6 478.5l-.3 .3M841.6 478.5l-.7-1.4M841.2 478.8l-.7-1.1M840.9 477.1l-.4 .6M842.7 478.3l-.5 .1M841 476.9l-.1 .3M842.3 478.5l-.7 0M837.8 476.4l1.4 2.6M839.2 479l1.3-1.3M832.1 477.3l-1.2 .4M832.1 477.3l.5-1.6M830.9 477.8l-.7-1.5M830.2 476.3l1.4-2.2M832.6 475.8l-1-1.6M828.7 475.8l1.5 .5M830.4 478.6l.4-.8M829.5 474.1l-.8 1.7M835 475.1l-.9 .7M834.1 475.8l-1.5 0M831.4 482.2l1.7-.2M836.1 484.1l-3-2.2M827.3 467.9l.2 3.2M828.9 471.5l-.7 .2M827.4 471l.7 .6M827.4 471l-2.1-.7M829.3 473.8l-2.1-.1M828.6 475.8l-1.6-1.3M827.2 473.8l-.2 .7M826.3 476.6l-.5-1.4M827 474.5l-1.2 .7M845 471.2l1 .7M845 471.2l-.1-1.9M847 469.8l-.6 2.1M847 469.8l-2-.5M846.4 472l-.3 0M844.4 472.9l1.6-1M844.5 471.8l.5-.6M844.7 469.1l.3 .2M846.8 472.6l-.5-.6M847.6 469.7l-.6 .1M847.2 478.3l.6 0M847.2 478.3l-.1-1.3M847.8 478.4l1.3-1.2M847.2 477.1l.9-.4M849.1 477.2l-.7-.4M848.1 476.6l.3 .1M846.7 478.6l.5-.3M850 480.6l-2.2-2.3M846.9 476.7l.3 .4M850.1 477l-1 .2M847.7 475.5l.4 1.1M848.6 475.4l-.2 1.4M749.3 480.8l.8 1M747.3 484l.9 .6M750.2 481.8l-2 2.9M759.2 499.1l-1.4-.5M759.2 499.1l.1 2.5M757.8 498.7l-1.1 1.8M756.7 500.5l-.6 2.4M756.1 502.9l2.8-.1M758.9 502.8l.4-1.2M750.8 498.3l-.1-.6M750.8 498.3l5.9 2.2M753.5 494.4l2-.5M755.5 493.9l2.4 4.7M750.7 497.7l.1-.4M750.9 497.3l2.6-2.9M751 504.7l-.1-6.4M755.5 503.5l.7-.6M759.4 503.1l-.5-.4M760.1 506.3l-.6-3.2M759.5 507.3l.5-1M761.4 502.7l.7-1.3M761.4 502.7l.8 2.1M762.2 501.2l1.8 1.6M764.1 502.9l-.6 1.9M762.2 504.8l1.3 0M759.3 501.6l2.8-.2M759.4 503.1l1.9-.5M760.1 506.3l2.1-1.5M759.7 499.1l-.5 0M766.4 501.2l-2.4 1.6M766.2 504.1l-2.2-1.2M764.2 505.5l-.7-.7M688.5 607.8l.6 .7M689.4 606.3l.7 .8M689.2 608.5l.9-1.4M687.9 609.2l1.2-.3M689.2 608.5l-.1 .4M688.9 610.2l.3-1.2M690.7 610.5l.2-.5M689.3 609l1.6 .9M694.4 610.7l-2.2-2.1M690.8 609.9l1.3-1.3M694.5 610.6l.9-1.6M697 607.7l-1.7 1.4M736.8 238l2.5-3M736.8 238l-.6-6M739.3 235l-2.2-2.9M736.2 232.1l.8 .1M734.4 231.1l1.9 1M740.7 231.2l-3.6 .9M731.7 236.7l4.9 2.5M734.5 244.3l1.9-2.4M736.4 241.9l.2-2.7M736.8 238l0 1M740.8 248.7l2.5-.9M740.8 248.7l1.8 1.8M743.3 247.8l-.7 2.8M738.8 252.7l-.8-.6M737.3 248l.7 4M739.7 247.7l1.1 1M739.7 247.7l-2.4 .3M738.8 252.7l3.8-2.1M744.7 251.8l-2.1-1.2M744.7 251.8l-.9-4.7M743.8 247.1l-.4 .6M744 232.9l.3 .4M739.3 235l1.9 1.3M744.3 233.4l-3.2 3M747.4 234.4l-1.6-.4M744.3 233.4l1.4 .6M736.8 239l3.9-1.2M741.1 236.4l-.4 1.4M756.9 273.6l1.3 .1M756.9 273.6l-.6-3.5M758.3 273.8l2.9-3.6M761.2 270.1l-4.6-.6M756.3 270.2l.3-.6M753 271.6l3.3-1.4M756.1 274l.8-.3M752.7 276.5l2.5-1.1M755.2 275.4l.4-.5M755.5 249.7l.1 1.3M755.7 251l9.4 4.9M756.5 249.2l12.3 4.8M765.1 255.9l3.7-1.9M771.2 247.7l.2 5.5M771.4 253.2l-2.6 .8M774.8 258.7l-1.1-.8M771.4 253.2l2.4 4.7M769.2 263l-1.8-.9M767.5 264.5l-.5-1.4M767.4 262.1l-.3 .8M767 263.2l0-.3M750.4 270l.4-1.7M756.7 269.6l-1.1-2.3M755.5 267.3l-4.8 1.1M743.9 262.6l6.2 2.5M743.9 262.6l.3 3.4M744.2 266l5.7-.1M750.1 265.1l-.1 .8M742.9 268.2l1.3-2.2M742.9 268.2l.6 1.5M743.5 269.7l3.6 2M750 265.9l.8 2.4M750.6 280.8l-6.2 1.1M747.5 276.5l-3.7 4.7M743.8 281.2l.6 .7M747.7 284.9l-3.2-1.6M744.4 282l.1 1.4M744.8 286.2l-.5-2.5M745.3 286.8l-.4-.5M744.3 283.7l.2-.4M796.2 344.6l3.8 1.7M799.8 350.6l.7-.7M800 346.2l.5 3.7M803.9 342.6l-.6 1.4M800 346.2l3.3-2.2M808.4 354.2l-2.1 1.4M808.3 353.1l0 1.1M808.3 353.1l-6-3.2M804.2 355.9l2-.4M802.3 349.8l-1.8 .1M815 345.5l.1 3.7M815 345.5l-2-.7M813 344.8l-.7 .4M812.3 345.2l-2 5.5M815.1 349.2l-4.8 1.5M810.8 338.8l2.2 6.1M816.2 344.6l-1.2 .9M807.1 342.5l1.3 2.8M808.4 345.3l3.9-.1M808.4 345.3l-.2 3.8M809 351.5l-.8-2.4M809 351.5l1.3-.8M818 344l1.8 5.3M816 349.7l3.2 .5M819.1 350.3l.2-.3M816 349.7l-.9-.5M819.4 349.9l.4-.7M819.1 350.3l.7 2.4M816 349.7l-.6 3M819.8 352.6l-1.7 1M815.3 352.8l2.8 .9M815.5 359.7l-1.5-2.3M815.5 359.7l-3.6 3.6M811.9 363.2l-2.2-.3M813.9 357.3l-.7-.6M809.7 363l-.7-.4M809 362.6l.4-7.5M809.4 355.1l3.8 1.7M816 359.9l-.5-.2M819.8 352.6l2.5 2.5M816.5 359.6l5.8-4.5M818.1 353.7l-4.2 3.7M813.5 370.4l-1.6-7.1M808.4 369.5l0-1.8M808.3 367.7l1.3-4.7M815.3 352.8l-2.1 4M808.4 354.2l1 .8M808.3 353.1l.6-1.6M823.9 360.4l.4-4M822.3 355.2l.4 .1M822.7 355.2l1.6 1.2M829.3 360.1l-2.6-3.9M824.3 356.5l2.4-.3M832.4 354.2l-4 .7M826.7 356.2l1.7-1.2M829 348.4l-1 5.4M832.3 352.6l-3.2-4.2M828.4 354.9l-.4-1.1M808.3 367.7l-1.6-3.8M805.4 370.1l-1.4-4.2M806.7 363.9l-2.8 2M809 362.6l-1.6 .2M806.7 363.9l.6-1.1M801.2 370.1l-3.5-3.4M797.8 364.7l3.5-1M804 365.9l-2.7-2.3M801.5 358.7l.4 3.8M801.3 363.6l.7-1.2M772.3 333.1l.6-.5M772.3 333.1l4 4.5M772.9 332.6l4 2.4M776.3 337.6l.8-2.2M777.1 335.4l-.2-.4M768.3 335.5l4-2.5M768.3 335.5l-2.2-3.5M769.6 325.3l3.9 6.3M773.4 331.6l-.5 1M768 339.4l.3-3.8M775.9 339.5l.4-1.9M777.8 335.4l-.7 0M753 291.1l-1.3 1.1M758.2 294l-5.2-2.9M750.7 294.3l2 4.4M753.1 299l-.4-.3M750.7 294.3l.6-1.5M751.7 292.3l-.3 .6M814.1 424.1l1-1.1M815.2 423l1.7 1.1M816.9 425.1l.1-.5M817 424.6l-.2-.5M780.6 400.1l-.1 2.4M780.6 400.1l4.7 4.6M785.4 404.7l-4.9-2.3M780.5 399.4l.1 .7M780.4 403.5l.1-1.1M786.3 405.6l-1-.9M798 375.2l-.7-.9M796.2 377.3l-1-1.6M797.4 374.3l-2.1 1.5M799.5 372.4l-1.9 .5M797.4 374.3l.2-1.5M793.7 378.9l1.5-3.2M757.9 385.3l-2.3-.4M757.9 385.3l-3.4 3.2M755.6 385l-1.5 3.1M754.5 388.5l-.3-.4M755.7 382.7l-.2 1.6M758.2 385.3l-.3 0M755.5 384.3l.1 .7M755.2 389.7l-.7-1.1M752.1 387.1l2 1M754.9 382.4l-1.3 .1M754.9 382.4l-2 1.9M753.6 382.5l-1.4 .4M752.8 384.4l-.5 .2M752.3 384.6l-.3-1.4M752.2 382.9l-.2 .3M754.9 382.4l-1.7-1.6M752.9 381.4l.3-.6M752.9 381.4l.7 1.1M755.6 382.5l-.6 0M755.5 384.3l-2.7 .1M752.2 382.2l.6-.8M752.2 382.2l0 .7M751.7 386.5l.7-1.9M749.7 386l-.3-3.1M750.3 382.6l1.8 .6M751.3 381l-.4 .1M752.2 382.2l-.9-1.2M728.3 364.7l-5.6 1.6M722.7 366.3l.8 1.5M728.3 364.7l2.1 7M730.4 371.7l-6.9-3.8M721.2 379l1.8-.4M723 378.5l2.7-2.9M721.6 366l1.1 .3M721.2 379l-1.4 .1M719.9 379l-4.2-4.2M721.6 366l-5.9 8.8M725.7 375.7l-2.2-7.8M715.7 374.8l-3.4-.7M711.7 368.1l.5 6.1M711.7 368.1l1.1-2.6M721.6 366l-8.8-.5M704.9 363.4l7.7 1.5M703.9 360.9l.9 2.5M703.9 360.9l8.7 1.1M712.7 362l-.1 2.9M705.2 365.7l-.3-2.3M705.2 365.7l6.5 2.4M712.6 364.9l.2 .6M736.5 382.8l3.1 1.2M736.5 382.8l.2 2.7M736.7 385.4l2.8-1.4M730.6 380l-3.6 1.7M730.6 380l.7 2.8M727 381.7l2.1 3.9M731.3 382.7l-2.1 2.8M732.1 378.6l-.1-2M732.1 376.6l-2.2-2.2M723 378.5l4 3.1M729.9 374.4l-4.2 1.2M732.1 378.6l-1.5 1.4M733.8 381l-2.5 1.8M732.1 378.6l1.6 2.3M725.2 388.1l3.9-2.6M725.2 388.1l-4-9.2M729.7 385.9l3.7-.5M734.6 381.4l-1.2 3.9M733.8 381l.8 .4M729.7 385.9l-.5-.3M729.5 393.9l.3 0M722.5 391.7l6.9 2.2M722.5 391.7l2.7-3.6M730.8 393.4l.7-3M731.5 390.4l-1.8-4.5M755.8 377.4l-1.1-.4M755.9 379l-2.7 1M754.7 377l-3 1.2M751.7 378.1l1.5 1.8M753.2 380.8l-.1-.6M751.3 381l.2-.2M751.5 380.8l1.5-.6M753.1 379.9l-.1 .3M748.2 382.3l1.1 .5M748.2 382.3l-.1 .3M749.6 386l-2.4-.1M748.1 382.6l-.9 3.3M746.6 386.7l.3-.6M746.8 386l.4-.1M750 380.3l-.8-1.2M751.5 380.8l-.8-2.8M749.1 379.1l1.6-1.1M747.4 381.4l.5-1.6M747.4 381.4l.7 .9M747.9 379.9l1.1-.7M751.7 378.1l-.8-.3M751.6 373.3l-.7 4.3M751.6 373.3l3.1 3.7M750.9 377.6l0 .3M749 379.1l-1.2-2.2M750.9 377.6l-2.8-1.6M748.1 376l-.2 .9M736.8 315l3.7-1.8M736.8 315l1 .9M737.8 315.9l2.9-1.3M740.5 313.1l.3 .6M740.7 314.6l.1-.8M737.8 304.7l.3 1.4M737.8 304.7l-1.1 .1M736.7 304.8l-.6 1.8M738.1 306.1l-2 .5M699.9 322.2l3.3-3.8M703.2 318.4l.4-3.3M707.9 317.2l-4.2-2.1M707.9 317.2l2.5-4.2M704.9 313.3l5.5-.2M704.7 320.4l2.9-.6M703.2 318.4l1.4 2M707.9 317.2l.7 .8M708.6 318.1l-1 1.8M708.6 318.1l2.1 .5M707.6 319.8l-.2 2.8M710.7 318.6l.7 2M711.4 320.6l0 2M711.4 322.6l-2.1 1M709.3 323.6l-2-.9M715.2 321.4l-2.2 2.3M711.4 322.6l1.5 1.1M711.4 320.6l3.2-.3M715.2 321.4l-.4-1M714.6 320.3l.2 .2M735.1 366.6l-2.6 4.9M735.1 366.6l-.1-.3M735 366.3l-2.5-1.6M732.5 364.7l-2 7.2M732.5 371.5l-1.8 .8M730.5 371.9l.2 .4M741.4 363.9l.1 .3M741.5 364.2l-1.2 2.8M739.1 361.5l-4.1 4.7M739.1 361.5l2.3 2.3M737.1 367.8l3.1-.9M737.1 367.8l-2-1.3M728.3 364.7l2.1-1.7M730.4 363l2.1 1.7M729.9 374.4l.9-2.1M730.4 362.9l4.6-4.8M739.1 361.5l-.4-1.9M738.7 359.6l-3.7-1.5M755.5 356l.2 5.7M751.9 357.4l.2 2.4M753.7 355.3l-1.7 2.1M752.2 359.8l3.5 2M757.1 363.2l-1.1-.6M756.1 362.6l-.2-.2M755.6 361.8l.2 .6M739.3 382.1l-2.9 .5M739.3 382.1l-.4-1.3M738.8 380.8l-2.6-.4M736.4 382.5l-1.1-1.2M735.3 381.4l.9-1M739.9 382.6l-.3 1.4M739.9 382.6l-.6-.5M734.6 381.4l.7 0M732.1 376.6l3.5-.4M735.6 376.2l.7 .4M736.2 380.4l.7-2.4M736.3 376.7l.7 1.3M864.6 447.3l.8-1.6M864.6 447.3l-1-1M863.6 446.3l1.7-.6M864.6 447.9l0-.7M867.1 447l-1.7-1.3M862.2 447.1l1.2-.8M865.3 445.4l0 .3M865.3 445.2l-.1-.2M863.4 446.2l0-1.2M865.2 445l-1.8 0M865.2 445l-.4-2.5M861.2 446.8l1.3-3M863.4 445l-.8-1.2M845.7 466l.9 1.2M845.8 465.9l.9-.1M846.7 465.8l.7 1.3M847.3 467.1l-.8 .1M844.7 468.2l1.9-1M844.2 467.1l1.5-1M844.1 460.6l1.7 5.2M848.8 461.5l-2.1 4.3M848.7 467.5l-1.3-.4M816.1 419.8l-1.1-.4M816.1 419.8l.7 1.4M815.1 419.4l-.3 2M816.8 421.2l-1.3 .6M815.5 421.8l-.7-.5M816.4 418.5l-.2 1.4M814.6 418.9l.4 .5M817.7 421.1l-.5 .1M817.3 421.2l-.5 0M818.1 420.7l-.4 .5M812.7 420.5l2.1 .9M815.2 423l.3-1.1M816.8 424.1l.4-.7M817.3 421.2l0 2.2M821.1 424l-.7-.6M820.4 423.4l-.1-.4M820.4 423.4l-1 2.1M817.7 421.1l1.9 1.8M819.3 420.3l1.4 .3M821.4 421.4l-.7-.8M820.4 423l-.8-.1M821.1 419.8l-1.3-1.5M821.1 419.8l.3-.6M821.4 419.2l-1.3-.9M819.8 418.3l.3-.1M820.7 420.6l.3-.8M822.1 418.5l-.7 .7M821.3 417.1l-1.2 1.1M838.7 415.6l.7-2.5M838.7 415.6l1.5 .4M840.3 416.1l-.8-2.9M839.5 412.3l-.1 .9M837 416.7l1.7-1.1M841.8 417.4l-1.6-1.4M830.6 416.1l2-1.4M830.6 416.1l-.9-2.4M829.7 413.7l2.9 1M829.6 416.9l1-.8M833.1 414.6l-.5 .1M829.2 413.5l.5 .2M724.6 252l-1.2 .5M724.6 252l2.6 2.9M723.4 252.5l1.2 3.8M724.6 256.3l1.5 .2M727.1 254.9l-1.1 1.6M726.2 250.5l-1.6 1.5M721.7 251.8l1.7 .7M728.5 253.6l-1.3 1.3M727.5 250.1l1 3.4M723.1 256.8l1.5-.5M744.9 252l-2 3.3M738.8 252.7l1.3 2.5M742.9 255.3l-2.8-.1M732.9 251.5l0 .5M728.5 253.6l2 .4M732.9 252l-2.5 1.9M720.3 268.7l.8-1M720.3 268.7l-1.6 0M718.8 268.7l-.1-3.1M718.6 265.6l2.2-.9M720.8 264.7l.3 3M721.8 270.5l-.5-.3M721.3 270.2l-1.9 3.3M722.6 273.2l-2.9 .5M719.4 273.4l.2 .3M721.6 276.8l-.7-1.1M721.6 276.8l1.4-.5M720.9 275.6l1.8-.7M723 276.2l-.3-1.2M722.8 273.3l-.1 1.7M719.5 274.8l.2-1.1M719.5 274.8l1.4 .9M724.3 269.6l.4-.3M721.2 267.7l2.3-.1M720.3 268.7l.8 1.3M723.5 267.6l1.3 1.7M726.2 272.6l-1.7 .7M726.2 272.6l.5-.5M723.1 273.3l1.4 0M726.7 272l-1.4-2.6M725.3 269.4l-.5-.1M693.7 275.7l1.3 .7M694.1 274l1.9 .8M695 276.4l1-1.7M697.6 272.1l.2 2.5M695.9 274.8l1.8-.1M689.6 278.1l-.2-1.4M689.6 278.1l-2.9-.7M689.4 276.7l-2.2-.3M686.7 277.4l.5-1M690.9 279.5l-1.4-1.4M685.8 278l.8-.6M687.9 273.2l-.7 3.2M690.1 274.6l-.7 2M696 280.5l.1-.4M696 280.5l-4.4-1.6M696.2 280.1l-.5-2.7M692 278.2l-.3 .7M692 278.2l3.7-.9M692.1 276.7l-.2 1.6M690.9 279.5l.7-.5M695 276.4l.7 1M698.3 275.6l-2.6 1.8M697.7 274.6l.6 .9M636.2 165.2l75.9 80.9M714.6 246l-.6 .7M712.1 246l2 .6M717.9 247.9l-3.6-.8M714.1 246.7l.3 .5M715.7 253l-.5-.2M710.5 258.3l-.5-.4M715.2 252.8l-5.2 5.1M714.4 251.5l-.1-4.4M714.4 251.5l.5 1M715.2 252.8l-.3-.3M708 257.7l.6-.2M707.6 258l-.3 .4M707.3 258.4l2.6 5.9M711.3 263.4l-1.5 .9M708.6 257.5l1.4 .5M707.8 249.9l0 2.7M707.8 249.9l2.5-.3M710.3 249.5l.6 .6M710.9 250.1l-.6 3M707.8 252.5l.9 1.5M708.8 254l1.5-.9M636.8 179l70.9 70.8M704 252.8l3.9-.3M712.1 246l-1.8 3.5M714.4 251.5l-3.6-1.4M714.9 252.5l-4.6 .6M708.6 257.5l.2-3.4M691.1 266.2l9.1 2.6M700.2 268.8l-.1 .7M693 267.7l6.4 2.5M700.1 269.5l-.7 .7M697.6 272l1.3-1M698.9 271l.5-.8M691 260.4l9.5 5.4M700.2 268.8l.6-1.6M700.5 265.8l.3 1.4M694.5 281.9l-.9 1.5M694.5 281.9l-1.8 .1M692.8 281.9l.8 1.4M690.9 281.8l1.9 .2M695.8 281.3l-1.3 .6M695.8 281.3l.3-.6M690.8 284.8l2.5-.8M694.4 284.3l-1.1-.2M694.4 284.3l-.8 2.2M693.6 283.4l-.3 .7M686.9 282.8l3.6 2.6M695.8 281.3l.2 2.7M696.1 284l-.4 .3M695.7 284.3l-1.3 0M695.4 285.2l.3-1M691.9 289.8l2.3-1.1M694.2 288.6l.5-1.4M751.9 302.4l-1.9-1.4M752.7 298.7l-2.3 1.3M750.4 300l-.5 .9M720.5 401.5l.9 1.8M716.4 399.1l-2 .5M718 406.1l-3-4.2M714.4 399.6l.7 2.3M714.7 408.8l-1-2M715.1 401.9l-1.4 4.9M720.4 420.1l-1.3 0M720.4 420.1l-.2 1.8M720.2 421.9l-1.4-1.4M719.1 420.2l-.2 .4M718.7 419.5l.3 .7M720.6 420l-.2 .2M720.9 422.7l-.4 0M720.2 422.5l.3 .3M720.2 422.5l0-.5M716.6 421.8l.8 .2M717.3 422l1.5-1.4M716.8 436.1l.4-1.7M711 430l3.4 .4M714.3 430.4l2.9 4M720.2 422.5l-2.6-.3M720.5 422.7l-.9 2.2M719.6 424.9l-.5 .1M719.1 425l-1.5-2.9M726.5 399.5l-1.3 2.3M726.5 399.5l-.6-1M725.9 398.4l-1.4-.8M724.5 397.7l-.5 2.3M725.2 401.8l-1.2-1.8M729.4 399.5l-2.9 0M729.5 393.9l-3.6 4.5M721.8 391.9l.8-.2M721.8 391.9l-.1 .3M722.9 396.2l1.6 1.5M721.9 399.4l2.1 .6M704.3 368.2l-2.1 .4M704.3 368.2l3 6.9M698.9 374.2l7.3 1.9M707.4 375.1l-1.2 .9M704.3 368.2l.9-2.5M712.3 374.2l-.6 .3M707.4 375.1l4.3-.7M721.7 425.4l-.7 .4M721.7 425.4l1.5 .7M723.2 426.1l-2 2M721.1 425.8l.2 2.4M722.6 423.9l-.8 1.4M719.6 424.9l1.5 .9M723.7 426.2l-.5 0M699.6 471.9l-.2-.8M699.6 471.9l-1.9 1M699.4 471.1l-1.6-1.4M697.8 472.9l-1-2.2M696.8 470.7l1.1-1M697.4 474l.3-1.1M700.1 472.3l0 .8M700.1 472.3l-.4-.3M701 469.9l-1.5 1.2M698.2 467.5l-.3 2.2M692.9 471.4l3.9-.7M702 473.9l.1-2.3M701.8 473.9l-.9-1.8M702 471.6l-1.1 .5M703.9 472.8l-.2 .3M703.7 473.2l-1.7 .7M702.7 471l-.7 .6M703.7 473.2l-.1 2.3M701.6 474.3l.2-.3M700.1 472.3l.9-.1M720.6 483.1l1.2 1.2M720.6 483.1l-1.3-2.1M723.3 481.4l-1.2 3M723.3 481.4l-.5-1M722.8 480.4l-1.6-.3M719.3 481l2-.9M721.8 484.3l.3 .1M717.9 485.8l3.9-1.5M717.9 485.8l-.8-.4M717.1 485.4l3.5-2.3M719.1 481l.2 .1M716.6 485.2l.5 .2M726.9 484.5l-4.8 0M726 482.2l-2.6-.8M724 479.1l-1.2 1.3M721.9 491l.2-6.5M721.9 491l-4-5.2M722 475.2l-.9-.2M722 475.2l-.6 1.5M721.4 476.7l-3.2 2.2M720.7 475l.4 0M720.7 475l-3.2 2.4M717.5 477.4l.2 1M718.2 478.9l-.5-.5M721.3 480.1l.1-3.4M723 474.9l-1 .3M719 480.9l-.9-2M718.3 473.9l2.4 1.1M719.5 471.1l1.6 3.9M716.8 476.6l.7 .8M738.2 476.3l-2.5 1.5M738.2 476.3l.9 .1M735.7 477.8l3.6 1.3M739.1 476.4l.1 2.7M737.3 474l.9 2.3M735.4 477.9l.3-.1M740.3 476l-1.1 .3M739.6 480.8l-.3-1.8M743.5 509l-3.2-2.9M734.7 513.6l-.4-6.1M734.3 507.4l1.1-.9M740.3 506.2l-4.9 .4M732.7 487.1l.2 1.1M732.8 488.2l2.6 2.2M739.6 486.7l-1.8 4.1M735.4 490.5l2.4 .4M744.5 487.7l-1.9-1.7M744.5 487.7l-.7 2.1M743.9 489.8l-3.6 2.2M740.3 492l-2-.4M737.8 490.9l.5 .7M728.1 515.2l.6-6.1M734.3 507.4l-1.6-.4M728.7 509.2l4-2.2M723.5 513.5l1.9-6.2M728.7 509.2l-3.2-1.9M719.7 509.1l5.3-3.1M725.4 507.3l-.5-1.2M696.3 511.5l.9-3.3M696.3 511.5l4.5-1.4M697.2 508.2l3.5 .5M700.7 508.7l.1 .8M700.9 509.5l-.1 .6M695.5 512.2l.7-.7M695.2 505l2 3.2M701.5 511.8l-.7-1.7M701.2 507l-.4 1.8M705.5 509.2l-4.7 .4M794 476.2l-2.4-.9M791.4 478.1l-.4-.4M791 477.8l.6-2.4M789.1 478.2l1.3-.5M791 477.8l-.6 0M792.7 471.5l-.4 .4M792.3 471.9l-.9 3.2M791.4 475.1l.2 .2M706.8 473l-1.8 0M706.8 473l-.9 2M705.9 475l-.8-2M708.3 473.2l.1-.8M708.3 473.2l-.9 .6M707.4 473.8l-.6-.8M706.4 471.9l-1.3 1M706.2 475.7l-.2-.7M707 475.3l.5-1.5M711.4 479.6l.7-1.8M709.2 477.1l2.9 .5M712.7 482l-.9-.9M714.8 480.8l.1-.7M712.1 477.7l2.9 2.4M717.7 478.4l-1.2 .4M716.4 478.8l-1.2 .7M714.9 480.1l.3-.7M721.5 471l.6 .6M721.5 471l.6-1.1M722 469.9l1.2-.1M722.1 471.5l1.2-1.7M723.9 474.2l-1.8-2.7M720.3 470.5l1.2 .4M722.4 468.7l-.3 1.1M723.6 469.5l-.3 .3M705 482.1l1.6 1.6M707.3 481.1l.3 1.9M706.7 483.7l.9-.6M708.9 481.6l-.1 1.4M707.6 483l1.2 0M710.8 481.5l-1.5 2.2M708.8 483l.5 .7M714.8 500.3l-1.6-2.7M714.8 500.3l-2.1 2.5M713.2 497.6l-1.6 2.9M712.7 502.8l-1.1-2.3M712.3 492l-.6 .3M712.3 492l1 .2M713.3 492.3l3.7 7.3M717 499.6l-2.2 .7M711.7 492.3l1.6 5.3M712.1 505.6l.6-2.8M717.9 499.7l1.6 3M717.9 499.7l-1-.1M710 492.6l1.7-.3M709.1 497.5l2.5 3M834.1 476.1l.9 1M834.1 476.1l-.2 1.2M833.9 477.3l1.1-.2M833.5 478.1l.4-.8M833.5 478.1l-1.5-.8M834.1 475.8l0 .3M836.7 475.9l-.9 .9M835.8 476.8l-.7 .3M842.6 481l-.5-.2M840.2 482.4l1.9-1.7M841.2 478.8l-.3 .7M842.3 478.5l-1 1.3M840.9 479.6l.4 .3M843 478.8l-1 1.6M841.3 479.8l.7 .6M842 480.4l.1 .4M822.5 473l1-1.5M822.5 473l-1.3-1.1M823.5 471.5l-1-.6M821.2 472l1.3-1M820.2 472.3l1-.3M821.3 475.3l.9-.8M822.3 474.6l.2-1.5M820.7 467l1.8 4M825 470.6l-.4 .7M823.5 471.5l.8 0M824.6 471.3l-.3 .2M751.2 481.7l1.1 1.8M751.2 481.7l2.5-2.4M752.3 483.6l5.3-2.2M753.6 479.3l2.4 0M756 479.3l1.8 .9M757.8 480.2l-.2 1.1M750.2 481.8l1-.1M751.2 477.7l2.5 1.6M755 475.9l1 3.4M759.7 479.2l-1.9 1M757.6 482.4l2 2.5M764 486.9l-4.4-2M757.6 482.4l0-1M743.9 498.6l-.2-2M743.9 498.6l-.9 1.3M743 499.9l-1.6 .7M741 496.1l2.4-.6M741 496.1l-3 2.7M741.4 500.6l-3.4-1.8M743.4 495.4l.3 1.1M750.7 497.7l-6.9 .9M750.9 497.3l-3.1-2.4M747.8 494.9l-4.1 1.7M750 506.2l-7-6.3M740.3 506.2l1-5.6M740.3 492l2.1 1.6M743.4 495.4l0-.3M737.9 494.1l.4-2.6M737.9 494.1l3.1 1.9M743.4 495.2l-1-1.6M747.8 494.9l-1.1-1.3M743.4 495.2l3.3-1.6M743.9 489.8l1.9 1.8M742.4 493.6l3.4-2M763.1 492.1l-1.2 0M759.6 484.9l-.6 2.3M761.9 492.1l-3-4.8M757.6 482.4l-.6 .9M757 483.3l-.1 4.2M759 487.2l-2.1 .3M690.1 607.1l1.8 .8M690.7 605.1l1.6 1M692.3 606.1l-.5 1.9M695.4 609l-1.5-1.3M693.8 607.8l-1.7 .7M691.9 607.9l.3 .6M736.4 241.9l2.8 .5M740.7 237.8l1.4 1.6M739.3 242.3l2.9-2.9M747.5 239.9l-3.7 .7M745.8 234l-3.1 5.7M743.8 240.6l-1.2-.9M742.6 239.7l-.5-.2M758.3 273.8l1.3 2M755.6 274.8l1.3 2.1M759.6 275.8l-2.6 1.2M761.4 270.1l2.5 .3M765.9 272.8l.3 3.8M759.6 275.8l1.5 1.3M766.1 276.6l-5.1 .5M778.5 275.9l-7.2 4.1M766.1 276.6l1.3 1.7M771.3 280l-3.9-1.7M774.5 286.4l-3-2.7M771.3 280l.2 3.7M765.3 293.3l0-1.8M771.5 283.7l-6.2 7.9M762.5 264.8l-1.8-2.5M762.5 264.8l-1.4 .3M761 265.1l-1-2.5M760 262.6l.7-.3M762.4 261.7l1.3-1.4M762.4 261.7l-.8 0M763.4 259.5l.3 .7M763.4 259.5l-4.8-4M761.6 261.6l-3-6.1M755.6 251.8l3.1 3.8M755.7 251l-.1 .8M763.4 259.5l1.9-2.5M765.1 255.9l.2 .6M765.4 257l-.1-.5M773.8 257.9l-1.6 .4M765.3 256.5l6.8 1.8M759.5 266.5l-2.4-1.2M759.5 266.5l1.5-1.4M760 262.6l-1.4 0M757.1 265.3l1.5-2.7M761.4 270.1l-1.9-3.6M755.5 267.3l1.2-1.9M757.1 265.3l-.4 .1M761.6 261.6l-.9 .7M755.6 251.8l-.6 1.7M758.6 262.6l-3.7-9.2M743.5 269.7l-3.2 3.9M746.6 275.3l-3.3 .7M740.3 273.6l1.1 .9M743.3 276l-2-1.5M804.8 347.2l-1.4-2.9M804.8 347.2l-2.4 2.4M802.5 349.6l.9-5.3M808.2 349.1l-3.4-1.9M803.3 344l.1 .3M802.3 349.8l.1-.3M829 348.4l-.2-.3M834.6 347l-4.6-.6M828.9 348.2l1.2-1.7M832.3 342.9l-2.5 1.8M830.1 346.4l-.3-1.8M828.4 341.7l.7 2.1M829.1 343.9l.7 .8M805.9 358.9l-3.1 3.3M805.9 358.9l.8 3.3M806.7 362.2l-3.9 0M806.3 355.6l-.4 3.3M802 362.4l.8-.2M807.3 362.8l-.7-.6M774.8 330.7l.6-.3M774.8 330.7l-2.6-5.7M775.4 330.4l1.7-3.6M777.1 326.8l-.4-2.1M772.2 325l4.6-.3M769.9 324.9l2.2 .1M773.4 331.6l1.3-.9M780 320.1l-3.3 4.6M778.3 327.6l-1.2-.8M780.1 328l-1.9-.4M777.7 332.7l-1-1.6M777.7 332.7l3.1 0M776.7 331.1l2.9-.5M779.5 330.6l1.1 .6M780.8 332.8l-.2-1.5M776.9 335l.7-2.3M775.4 330.4l1.3 .7M781.7 334.4l-.9-1.7M778.3 327.6l1.3 3M781.3 330.4l-.6 .9M693.9 295.4l3.1 .9M695 293.2l-1-.1M695 293.2l2.3 2.4M697 296.3l.3-.7M695 293.2l3.1 .1M698 293.2l-.1 1.5M697.3 295.6l.7-.9M747.3 294.8l-2.4-.5M747.3 294.8l-2-1.7M744.9 294.3l.1-1.2M743.2 292.9l.5-.6M743.2 292.9l.9 2.9M743.9 292.2l1.1 .9M744.1 295.8l.8-1.5M747.2 290.9l-2.1 2.2M747.2 290.9l4.5 1.4M751.4 292.8l-6.1 .3M744.9 289.6l-1.7-.1M745.1 289.2l-.1 .3M745.1 289.2l-2.2-2.2M743.3 289.4l-1-1.9M742.9 287l-.6-.1M742.3 287l0 .5M743.9 292.2l1-2.6M747.2 290.9l-2.1-1.4M753 291.1l-3.8-3.8M745.6 288.2l-.5 1M744.8 286.2l-2 .8M742 285.3l2.3-1.5M741.7 286.3l.3-1M741.7 286.3l.5 .7M818.2 423.3l-.2 .2M818.2 423.3l.6 .3M817.9 423.5l-.1 .8M818.7 423.6l-.1 .7M817.8 424.3l.8 0M817.7 421.1l.5 2.2M817.2 423.4l.7 0M819.6 422.9l-.9 .7M817 424.6l.8-.3M819.5 425.4l-.8-1.2M793.3 374.9l1.6-2.8M793.5 375l3.5-2.8M794.9 372.2l1.7-.3M796.6 371.8l.3 .4M792.2 374.9l1.1 0M795.2 375.8l-1.7-.8M793.8 371.8l1.1 .4M797.6 372.8l-.7-.6M796.2 368.9l.4 2.9M743.3 390.6l-1.1-2.2M744.7 387.7l-1.9-.9M742.1 388.5l.7-1.6M737.3 396.9l-2.1-2.4M737.3 396.9l1.8-4.1M735.3 394.5l3.6-2.4M739.1 392.8l-.2-.7M739 400.1l-1.7-3.2M732.9 394l1.3 0M734.2 394l1.1 .5M741.3 396.1l-2.2-3.3M743.1 391.7l-3.9-.2M738.9 392.1l.1-.3M739.2 391.4l-.2 .3M734.2 394l1.7-2.8M739 391.7l-3.1-.5M743.6 383.7l.9-1.1M743.6 383.7l.9 1.5M744.5 385.2l1.8 .2M744.4 382.6l.8-.1M746.1 384.4l.1 1M746.1 384.4l-.6-1.9M745.5 382.6l-.3 0M746.8 386l-.6-.6M742.9 386.7l1.6-1.5M748.1 382.6l-1.9 1.8M747.4 381.4l-.8 .2M746.6 381.7l-1.1 .9M744.8 380.7l.5-.3M746.6 381.7l-1.4-1.2M744.8 380.7l.4 1.8M745.3 380.4l-.1-.8M747.9 379.9l-1.6-1M746.3 378.8l-1.2 .8M744.5 380.8l-.2-1.2M744.8 380.7l-.3 0M744.4 379.5l.7 .1M741.7 368.2l1.1 3.4M741.7 368.2l-.7-.4M741.7 373l-1.4-.1M740.3 372.9l-.8-.6M741 367.8l-1.5 4.5M741.9 372.9l.9-1.3M744.5 306.8l-1.6 1.9M744.5 306.8l2.8 1.7M747.4 308.6l-.9 1.6M742.9 308.7l1.1 1.1M746.5 310.2l-2.5-.4M744.8 314.9l4.3 1.3M744.8 314.9l-.8 3M745.1 318.5l4.3-1.7M745.1 318.5l-1-.5M749.4 316.8l-.2-.5M740.7 314.6l1.2 3.5M740.8 313.8l4-.1M741.8 318l2.3-.1M744.7 313.7l.1 1.2M741.8 318l-1.4 1.6M737.8 315.9l-.3 1.1M737.5 317l2.9 2.7M709.3 323.6l-.5 2.8M713 323.7l.4 .8M713.4 324.5l-1.2 3.8M712.2 328.3l-3.1 0M708.8 326.4l.2 1.9M704.9 313.3l3.7-1.7M708.6 311.6l1.8 1.5M715.2 321.4l1.8 .4M713.4 324.5l3.7-2M717 321.8l.1 .6M717.9 326.1l-4.5-1.6M717.9 326.1l-.1-2.2M717.1 322.4l.7 1.4M717.9 326.1l.6 .8M718.5 326.9l2-1.5M719.9 322.9l.6 2.5M719.9 322.9l-.5-.2M717.8 323.9l1.6-1.2M738.7 371.9l-1.2-2.4M738.7 371.9l-2.5 1.2M737.5 369.6l-3.4 2.3M736.2 373.2l-2.1-1.3M737.1 367.8l.4 1.7M741 367.8l-.7-.8M739.5 372.3l-.8-.4M739.1 375.1l-2.8 1.5M740.3 372.9l-1.2 2.2M735.6 376.2l.6-3.1M732.5 371.5l1.6 .4M732.1 325.5l1.7 2.9M732.1 325.5l1.3-.8M733.4 324.8l2.4 0M735.7 324.8l.4 .3M733.9 328.5l2.1-1.8M736.1 325.1l-.2 1.6M756.5 348.4l-2.6-1.3M753.7 355.3l-4.7-4.4M753.9 347.2l-5 3.6M761.6 341.1l-3.5-1.8M753.9 347.2l-.6-5.9M753.3 341.3l1.1-1.3M754.4 339.9l3.6-.6M764.2 331.9l-6 6.8M758.2 338.6l-.1 .7M761.5 331.1l-3.2 .7M758.2 338.6l.1-6.8M760.8 325.5l-3.4 5.7M758.3 331.8l-.9-.7M750 317.2l-.7-.4M745.1 318.5l1 3.9M751.6 321l-.3 1.8M746.1 322.4l5.2 .4M755.7 325.2l-2.7 1.2M751.3 322.8l1.6 3.6M753 362.4l2.9-.1M753 362.4l-1.1-.5M751.9 361.9l.3-2.1M749.3 359.2l-1.5 .9M747.5 359.8l.4 .3M749.3 359.2l-2.1-2.2M747.2 356.9l-.7 .5M747.4 359.7l-.9-2.3M747.4 359.7l-1.9 .3M745.5 360l-.3-2.3M746.5 357.4l-.9 0M745.6 357.4l-.4 .4M744.2 379.5l-.5 0M744.5 380.8l-.6 .5M743.8 381.2l-.1-1.7M742 380l1.2-.4M742 380l.9 .7M743 380.7l.3-1.1M742.6 377.6l2.1 .1M742.6 377.6l.8 1.8M744.7 377.6l-.3 1.9M743.8 379.6l-.4-.1M863.3 441.2l1.4 1.3M863.3 441.2l-2.6-.6M864.8 442.5l-2.3 1.1M862.5 443.6l-.8-.4M861.7 443.2l-1.5-1.1M860.2 442.1l.6-1.5M863.8 438.8l-.5 2.4M860.9 437.9l-.1 2.7M859.9 447.1l1.8-3.9M857.1 443.8l3-1.6M868.3 406.3l.2-1.2M868.3 406.3l-.6 .2M867.3 406.3l.4 .2M867.3 406.3l-.1-1.6M867.2 404.7l1.3 .4M868.3 408.3l.6-.9M866.9 408l.7-1.6M868.9 407.4l-.6-1.1M865.6 406.8l1.7-.6M865 403.4l2.2 1.3M869 404.4l-.3 .7M875.4 406.3l-4.5-.6M875.1 407.5l-4 .9M871.1 408.5l-.9-1.5M870.2 407l.4-1.1M870.9 405.7l-.3 .2M870.8 404.7l0 1M869 409.7l1.5 0M870.5 409.7l.7-1.3M868.9 407.4l1.3-.4M868.6 405.1l2 .8M875.4 410.5l-4 .5M875.4 410.5l1.5 2.7M876.8 413.2l-2 1.8M871.2 411.4l.2-.5M871.2 411.4l1.1 3.5M874.8 414.9l-2.5 0M875.1 407.5l.3 3M870.5 409.7l.9 1.2M881.3 413.8l-4.5-.6M874.7 418l.1-3.1M868.4 413l2.7-1.6M869.1 416l3.1-1.1M719 275.5l.4-.7M721.6 276.8l-.6 1.1M719 275.5l-.1 .8M718.9 276.3l2 1.6M717.6 278l2.4 .7M717.4 278.1l-.5 1.1M716.9 279.4l.8 .7M717.8 280.1l2.3-1.4M718.9 276.3l-1.3 1.7M720.9 278.2l0-.3M720.9 278.2l-.4 .6M720.6 278.8l-.5-.1M726.2 272.6l.2 1.4M724.5 273.3l.4 2.7M726.5 274l-1.5 2M740.3 273.6l-.5 .1M742.9 268.2l-3.4-1M739.8 273.6l-3.3-3.1M739.5 267.1l-1.6 1.7M736.5 270.5l1.4-1.7M739.4 267.1l-5-1.7M737.8 268.9l-3.4-3.5M731.9 271.2l2.2-1.9M733.6 272.6l-1.7-1.4M733.6 272.6l1.1-.7M734.8 271.9l.8-1.3M735.5 270.6l-1.4-1.3M731.2 270.2l.2 1.1M731.4 271.4l.5-.2M731.2 270.2l2.7-1.2M734.1 269.3l-.2-.3M724.4 264.5l-3.1-.6M724.4 264.5l-.7 1.9M723.7 266.4l-2.5-2.2M721.2 263.8l-.1 .4M723.7 266.5l-.3 1.1M720.8 264.7l.3-.5M715.5 263.7l.5 .9M720.7 260.7l.3 .4M721 261.1l.2 2.7M716 264.6l2.6 1M714.5 277.4l-.2-.5M714.5 277.4l2.5 1.8M717.4 278.1l-1.6-1.9M715.8 276.1l-1.6 .8M698.3 275.6l1 .5M696.2 280.1l3.4-2.5M699.2 276.1l.3 1.5M699.4 271.9l2.4 1.8M699.4 271.9l1.3 3.2M701.8 273.7l-.2 1.1M700.7 275.1l.8-.3M702.5 272.1l-.8 1.6M702.5 272.1l.2-.8M702.7 271.3l-2.6-1.8M698.9 271l.6 .8M699.2 276.1l1.5-1M703.2 275.6l-1.6-.8M704.3 275.6l-1.1 0M704.3 275.6l.4-.4M704.7 275.2l-2.2-3.1M703 259.6l.9 .4M700.1 260.9l1.8 3M701.9 263.9l2-3.9M700.5 265.8l1.3-1.4M701.9 263.9l0 .5M704.1 271.2l.9-.4M704.1 271.2l.7 3.9M705 270.7l.6 .5M705.6 271.2l.9 1.5M706.4 272.7l-1.1 2.3M704.9 275.1l.4-.1M702.7 271.3l1.4-.2M707.7 274.4l.6-1.5M707.2 275.5l.5-1.1M708.3 273l-1.8-.2M707.2 275.5l-1.9-.5M696.1 280.7l3.2 .9M697.5 284.7l.5-.2M696.1 284l1.4 .7M698 284.5l1.2-2.9M697.5 284.7l.1 2M697 287.3l.4-.2M697.6 286.7l-.3 .3M699.5 285.4l1.1 1.2M699.5 285.4l-.8 1.3M700.6 286.6l-1.9 .2M698.7 286.8l.6 1M697.6 286.7l1.1 0M697.3 287l1.2 1.2M698.5 288.2l.8-.4M701.2 286.8l-1.8 1M701.9 286.9l-.7 0M701.9 286.9l-2.3 1.6M699.6 288.5l-.2-.7M701.2 286.8l-.6-.2M703.9 281.9l1.3 .9M702.6 283.3l1.3-1.4M703.3 284.1l-.7-.8M703.3 284.1l1.4-.1M704.7 284.1l.5-1.3M706.2 328.6l2.5 0M708.7 328.6l.1 3.3M700.5 332l5.6-3.3M700.5 332l0 1.9M700.5 333.9l8.3-2M693.2 335.1l5.2-.2M698.4 335l2.1-.9M708.8 331.9l1.2 1.9M710 333.8l-9.1 .7M700.5 334l.4 .5M694.7 353.8l-3.9 0M694.7 353.8l-2.8 3.2M690.8 353.8l-1.8 2.7M691.9 357l-2.9-.5M682.2 354l7.5-4.1M684.5 358.1l4.5-1.6M689.7 349.9l1.1 3.9M692.3 362.3l1.4-3M693.7 359.3l-1.7-2.4M743.3 352.1l-.3 1.3M743.3 352.1l-8.3-1M743 353.4l-1.7 2.5M741.3 355.9l-6.8-3.3M735 351.1l-.6 1.4M731.5 325.7l-1.5 2.3M732.1 325.5l-.6 .2M733.9 328.5l-.6 3.3M730.1 328l3.3 3.8M750.4 300l-1.4-2M750 300.9l-2.1-2M749 298l-1.2 .9M749 298l1.7-3.7M747.3 294.8l.7 .3M750.7 294.3l-2.6 .8M749.9 301l-2.3 1.5M747.7 302.6l-.2-3.6M747.8 298.9l-.4 .1M738.1 306.1l1.1 .6M738.1 304.1l1.7-1.2M739.2 306.7l1-.1M740.2 306.6l.2-1.9M737.8 304.7l.1-.4M740.4 304.7l-.6-1.8M745.4 304.8l-.7-.6M745.4 304.8l1.7-.6M747.1 304.2l.3-1.2M747.4 302.9l-2.2-3M744.7 304.1l-1.2-1.6M743.5 302.5l1.1-2.3M744.5 300.2l.7-.3M749.3 305.4l-2 3.2M749.3 305.4l-2.2-1.2M744.5 306.8l.9-2.1M751.1 306.1l-1.8-.7M747.7 302.6l-.2 .4M740.5 301.7l-.7 1M740.9 301.3l-.4 .4M740.9 301.3l2.6 1.2M740.4 304.7l4.3-.5M742.8 308.7l-1-.7M742.8 308.7l-2.7 3.4M741.8 308l-4.7 1.3M740.1 312.1l-1.9-.5M738.2 311.6l-.2-.3M738 311.3l-1.1-1.7M737.1 309.3l-.2 .2M740.2 306.6l1.6 1.4M740.5 313.1l-.4-1M745.3 313.1l-1.3-3.3M744.7 313.7l.6-.6M739.2 306.7l-2.1 2.6M736.8 315l-1.3-.9M735.5 314.1l2.7-2.5M734 314.5l1.5-.4M734 314.5l-.6-.3M733.4 314.2l-.8-2.3M732.7 311.8l5.3-.5M712.4 399l-1 1.5M712.4 399l-1.6-2.7M711.4 400.6l-7.7 1M710.8 396.3l-7 1.8M703.7 398.1l0 3.4M717 388.5l-5.8 1.7M711 390.3l-.3 6M721.8 391.9l-4.8-3.5M714.4 399.6l-2-.6M702.2 395.9l1 1.8M711 390.3l-2.2-.1M703.2 397.6l.6 .5M708.9 404.7l2.4-3.9M708.9 404.7l4.6 2M713.5 406.7l-2.2-5.9M703.4 403.1l.3-1.5M707.2 406l-3.8-2.9M707.2 406l1.7-1.3M697.5 405.7l-.5-5.9M697.5 405.7l.6-.1M698.1 405.6l2.9-1.5M700.9 404.1l-1.2-4.9M699.8 399.3l-2.7 .5M696.8 399.5l.2 .3M692 409.7l5.5-4M698.4 413.6l4.6-3.2M703 410.4l.4-1M703.4 409.5l-5.3-3.9M703.2 397.6l-3.4 1.6M703.4 403.1l-2.5 1.1M706.8 414.9l2.9 1M706.8 414.8l1.1-.7M708 414.1l2.8 1.3M709.7 415.9l.4 0M710.1 415.9l.7-.5M709 418.9l1.1-3M708.5 416.4l-.8 1.7M708.5 416.4l1.2-.5M713.4 415.1l-.7-.7M712.8 414.4l-2 1M702.2 417.4l.3-.2M706.1 418.5l-1.6-1.6M702.5 417.2l.9-.4M704.5 416.9l-1.1 0M704.6 415.3l2 .1M706.8 414.9l-.2 .6M706.5 414.3l.3 .6M706.4 414.2l-.8 0M704.6 415.3l0-.4M704.6 415l1-.7M717.5 422.1l-.1 3M717.3 425.1l1.7 0M714.6 425.4l.4 .6M717.3 425.1l-2.4 .8M714.3 430.4l.9-3.1M715 425.9l.3 1.3M718.4 382.5l-6.9-1.3M718.4 382.5l-.4 1M718 383.4l-6.6-1.1M711.5 381.1l-.2 1.2M719.9 379l-1.5 3.4M711.6 374.4l-.1 6.7M717 388.5l1-5.1M702.7 382.4l1.8-1.5M706.2 376l-.8 2.8M704.5 381l.9-2.1M735.4 506.5l-.3-4.5M738 498.8l-.6-.2M735.2 502l2.3-3.5M737.9 494.1l-.8 3.8M730.9 495.5l-.1 1.1M735.4 490.5l-4.5 5M730.8 496.6l6.3 1.3M737.5 498.5l-.4-.7M725.8 489.7l-3.9 1.6M725.8 489.7l2.5 .8M728.3 490.5l.9 2M729.1 492.5l-5.5 3.8M721.9 491.3l-.8 1.4M721.2 492.7l.6 1.7M721.7 494.3l1.9 2M727 484.8l-1.2 4.9M721.9 491l.1 .3M732.8 488.2l-4.6 2.3M730.9 495.5l-1.8-3M730.8 496.6l-1.6 1.7M724.7 497.5l4.6 .8M724.7 497.5l-1.1-1.3M713.3 492.3l7.9 .4M713.7 486.4l-1.4 5.6M717.9 499.7l3.8-5.4M724.7 497.5l-2 5.4M720.7 503.1l2-.2M789.5 475.6l.9-.5M789.5 475.6l-1.8 .2M787.6 475.5l2.1-1.7M789.7 473.9l.7 1.2M790.3 477.7l-.9-2.2M791.4 475.1l-1.1 0M787.4 477l.2-1.2M789.4 473.2l-2.7 .5M789.4 473.2l.3 .7M786.7 473.7l.9 1.8M789.4 473.2l.7-.8M792.3 471.9l-2.2 .5M792.3 470.1l-3.9 .8M790.1 472.4l-1.7-1.4M790 466.8l-1.4 1.1M788.5 470.9l.1-2.9M715.1 477.6l-.6 .4M715.1 477.6l.7-1.1M715.9 476.5l-.4-.2M715.5 476.3l-1.8 1.4M713.7 477.7l.8 .3M716.4 478.8l-1.3-1.2M715.3 479.5l-.7-1.5M716.5 476.5l-.6 0M713.7 477.7l-1.4-.3M715.5 476.3l-1.5-1.1M712.3 477.4l1.7-2.2M716.2 475.2l-2.3-.8M714 475.2l0-.9M715.9 473.3l-2 .6M714 474.3l0-.4M709.8 472.6l.5 1M711.3 471.9l.5 .9M710.3 473.6l1.5-.8M713.5 472.1l-.2 1M711.8 472.8l1.4 .3M713.8 473.7l-.4-.4M710.3 484.5l-4.5 4.5M710.3 484.5l-1-.6M709.3 483.9l-.9 .4M708.4 484.3l-1.5 1.1M705.9 489l1.1-3.6M705.5 489.7l.3-.7M712.8 484.9l-2.5-.4M707.6 483.1l.9 1.3M706.7 483.7l.3 1.7M833.5 478.1l.6 1M833.1 482l.3-.5M833.4 481.4l.8-2.3M835.2 477.1l-.7 1.8M834.1 479.1l.4-.2M839.2 479.1l-1.4 .5M839.2 479.1l.4 .4M837.8 479.7l.8 1.7M839.6 479.5l0 1.9M839.6 481.4l-1-.1M840.9 479.6l-1.3 0M840.2 482.4l-.6-1M836.8 482.5l1.5-1.2M824.3 476.4l1.1-1.3M825.8 475.2l-.4-.1M825.6 471.9l1 1.2M825.6 471.9l1.2 0M827.6 472.3l-.8-.3M827.6 472.3l-.5 1M827.1 473.3l-.5-.2M824.6 471.3l1 .6M825.3 470.4l1.5 1.6M828.2 471.7l-.5 .6M827.2 473.8l-.1-.5M825.3 473.2l.1 1.9M825.3 473.2l1.3-.1M757 483.3l-3.2 2.6M752.3 483.6l-.1 1.9M753.8 485.9l-1.6-.4M748.2 484.7l.5 1.7M748.7 486.4l2.1-.3M752.1 485.5l-1.3 .6M756.2 493.3l-2.3-4.8M756.2 493.3l.5-.3M756.7 493l.1-5.3M756.8 487.7l-2.7-.8M753.9 488.4l.3-1.6M753.5 494.4l-1.8-2M755.5 493.9l.7-.7M751.7 492.5l.4-3.6M752.2 488.8l.3-.3M752.5 488.5l1.4 0M761.9 492.1l-5.2 .9M753.8 485.9l.3 .9M752.5 488.5l-1.6-2.4M693.4 604.5l-.7 1.2M693.4 604.5l1.9 1.8M692.7 605.7l2 1.2M694.7 607l.6-.3M695.2 606.3l.1 .4M693.5 603.2l-.1 1.3M692.3 606.1l.4-.3M695.6 605.3l-.4 1M693.8 607.8l.8-.8M697 607.7l-1.7-1M740.8 243.3l2.3-.9M740.8 243.3l.3 2.9M743.1 242.4l1.7 3.1M741.1 246.2l2.9-.3M744 245.9l.8-.4M739.3 242.3l1.5 1M743.8 240.6l-.7 1.8M737.3 248l-1.7-.9M739.7 247.7l1.4-1.5M751.4 246.2l-6.6-.8M743.8 247.1l.2-1.3M755.3 249.6l-10.4 2.4M761 277.1l-1.8 2.2M756.9 276.9l-.4 1.9M756.5 278.8l2.7 .4M755.2 275.4l.2 3.9M756.5 278.8l-1.2 .4M752.4 281.1l.2 .1M752.7 281.2l2.7-2M767.4 278.3l-1.6 1.7M765.8 280l-6.3 1.6M759.5 281.6l-.3-2.4M765.8 258.6l2.9 1M765.8 258.6l-.4-1.4M765.4 257.1l4 2.1M768.7 259.6l.7-.4M766.3 260.5l1.1 .4M767.3 260.9l1.4-1.3M765.5 259.9l.8 .6M765.5 259.9l.4-1.3M763.7 260.3l1.8-.4M772.1 258.3l-2.6 .9M767.4 262.1l-.1-.4M767.3 261.7l.1-.8M767 262.9l-1.4 0M767.3 261.7l-1.2 .3M765.6 262.8l-.1-.3M766 262l-.6 .6M765.7 263.8l-.2-.6M765.7 263.8l-1.2 2.4M765.5 263.1l-1.7 .2M764.5 266.2l-1-1.3M763.5 264.9l0-1.4M763.5 263.5l.3-.2M767 263.2l-1.3 .6M765.6 262.8l-.1 .3M764.8 262.3l.7 .3M764.8 262.3l-.9 1M762.5 264.8l1 .1M762.4 261.7l1.2 1.9M745.1 259.7l5.3 4.3M745.1 259.7l9.4-5.6M754.5 254.1l-1.8 7.7M750.4 264l2.3-2.2M750.1 265.1l.3-1.1M743.9 262.6l-.4-1.6M743.5 261l1.1-1.3M744.7 259.7l.5 0M742.9 255.3l1.8 4.5M754.9 253.5l-.4 .6M756.7 265.4l-4-3.7M740.1 277.2l.6 .1M740.1 277.2l.1 1.3M740.7 277.4l1.8 .9M740.1 278.5l2.4-.1M739.8 273.6l-1.5 2.1M738.3 275.7l1.7 1.5M741.3 274.5l-.7 2.9M743.3 276l-.8 2.3M743.8 281.2l-.7-.4M743 280.9l-.6-2.5M733.6 272.6l-1.7 1.2M731.4 271.4l-.9 2.3M731.9 273.8l-1.4-.2M730.1 273.5l-1.6-1.5M730.1 273.5l.4 .1M729.4 269.9l-1 2.1M731.2 270.2l-1.8-.3M819.8 349.3l.3-.2M818 344l1.4 .4M821.9 346.5l0 .3M820 349.1l1.8-2.3M819.3 344.4l2.5 1.8M821.9 346.5l2.2-.9M822.8 347.2l2.4 .2M821.8 346.8l1 .4M824.1 345.5l1.2 1.9M698.3 297.7l-1.5 .8M698.3 297.7l.6-1.1M699 296.6l-2-.2M696.8 298.5l.2-2.1M692.7 302.3l3.8-2.8M696.5 299.5l.4-.9M714.5 277.4l-.2 2.4M716.9 279.4l-1.7 1.1M715.2 280.6l-.8-.2M714.2 279.8l.2 .5M742 384l-1.2 .7M742 384l.8 0M740.8 384.7l1.7 .6M742.8 384l-.3 1.3M739.9 382.6l1-.5M740.9 382.1l1.2 1.9M739.6 383.9l.7 .9M740.3 384.8l.6-.1M740.3 384.8l0 .4M740.3 385.2l2.6 1.6M742.9 386.7l-.3-1.4M743.2 383.8l.4 0M743.2 383.8l-.3 .2M742.1 388.5l-2.5 0M739.6 388.4l-.3 3M731.5 390.4l2-.8M733.4 385.3l1.3 .6M733.5 389.6l1.2-3.6M735.9 391.2l-.5-1.6M733.5 389.6l1.9 .1M739.2 391.4l-3.1-2.5M735.4 389.7l.8-.7M748.6 313.8l-1.4-.8M748.6 313.8l.9-1.1M747.2 313.1l0-2.3M749.5 312.8l.8-3.3M747.2 310.8l2.5-1.2M749.8 309.5l.5 0M749.1 316.3l-.6-2.4M745.3 313.1l1.9 0M754.3 313.1l-4.8-.4M746.5 310.2l.7 .5M751.1 308.8l-.9 .7M747.4 308.6l2.4 .9M735 320l.6 .1M735 320l-1.9-1.6M735.6 320.1l.4-2.5M733.2 318.4l1.1-2.9M734.3 315.5l1.7 2M733.4 324.8l-1-3.1M735.7 324.8l.6-4.1M732.4 321.6l2.7-1.6M736.3 320.7l-.7-.6M731.5 318.6l-.3 .6M731.5 318.6l1.6-.2M731.6 321.2l-.3-1.9M732.4 321.6l-.8-.4M736.3 320.7l4-.7M740.4 319.7l-.1 .3M737.5 317l-1.5 .5M733.4 314.2l-2.5 3.3M731.5 318.6l-.6-1.2M734 314.5l.3 1.1M717 321.8l.5-.8M717.5 321.1l1.2 .3M719.5 322.7l-.1-1M719.3 321.6l-.6-.3M731.6 321.2l-.7 .3M731.5 325.7l-.9-.9M730.9 321.5l-.2 3.3M727.6 325.7l1.5-1.8M727.6 325.7l1.8 2.4M729.4 328.1l.6-.1M730.6 324.8l-1.5-1M719.3 321.6l1.9-.8M719.9 322.9l1.7-.7M721.6 322.2l-.4-1.3M711.5 312.7l-1.1 .3M710.7 318.6l.4-.3M712 313.1l-.5-.4M712 313.1l0 .4M712 313.4l-.9 4.9M714.6 320.3l-.1-1.3M714.5 318.9l-3.3-.7M705.9 324.8l-.7 1M705.9 324.8l.3-1.7M703 323.1l1.7-.6M703 323.1l.6 2.4M703.6 325.5l1.6 .3M704.7 322.5l1.5 .6M706.2 328.6l-1-2.8M708.8 326.4l-3-1.5M708.7 328.6l.4-.3M707.4 322.7l-1.2 .4M699.9 322.2l3.1 .8M704.7 320.4l0 2M699.5 329.6l4.1-4.1M733.4 314.2l-1.5 .2M730.7 317.3l-.4-1.3M730.9 317.4l-.3-.1M732 314.4l-1.6 1.6M732.7 311.8l.1-.6M736.9 309.5l-.5-.3M732.7 311.2l3.6-1.9M736.1 306.5l-.4 1.2M735.6 307.7l.1 .4M735.7 308.1l.6 1.2M734.2 307.1l-.6-.6M734.2 307.1l-1.5 1.7M733.6 306.5l-1.9 2.5M732.7 308.8l-.9 .5M731.9 309.3l-.2-.2M735.7 308.1l-3 .7M735.6 307.7l-1.4-.6M732.7 311.2l-.9-2M733.3 305.8l.3 .7M733.3 305.8l-1.2 .1M731.7 309l-.4-1.8M731.3 307.2l.8-1.2M742.6 298.8l1.9 1.4M742.6 298.8l-1.3 .9M740.9 301.3l0-.4M741.3 299.8l-.4 1.2M725.5 310.5l-1.6-1.8M725.5 310.5l.8-.8M726.3 309.6l-.3-1.6M724 308.7l1.9-.7M744.6 361.7l-3.2 2.1M744.6 361.7l.4 .2M744.9 362l1.2 .8M741.5 364.2l3.2 1.7M746.1 362.8l-1.5 3.1M751.9 361.9l-1.9 .6M751.3 365.1l-.7-.3M753 362.4l-1.7 2.7M750.6 364.8l-.6-2.3M744.9 362l2.6-2.2M747.9 360.1l.2 1.9M746.1 362.8l.9 0M748 362l-1.1 .8M742.8 371.6l2.6-1.5M741.7 368.2l3.5-.6M745.4 370.1l-.2-2.4M756.1 362.6l-4.1 2.9M751.3 365.1l.3 .2M752 365.5l-.4-.2M758.4 367.1l-5.7-.7M752 365.5l.7 .8M754.4 339.9l-2.6-4M757.4 331.1l-3-1.6M751.9 335.9l2.5-6.4M752.9 326.4l-.1 .4M754.4 329.6l-1.6-2.7M749.8 359.9l.5 1.5M749.8 359.9l1.4 .5M751.2 360.3l-.9 1.1M750 362.6l-2-.6M749.3 359.2l.4 .7M750 362.6l.2-1.2M752.2 359.8l-1 .5M751.1 357.6l-.5 .3M751.1 357.6l-3.3-2.1M750.6 357.9l-3.3-1.1M747.8 355.5l-.5 1.3M749.3 359.2l1.2-1.3M751.9 357.4l-.8 .3M748.9 350.8l-.5 0M748.5 350.8l-.7 4.8M745.8 349.6l2.7 1.2M743 353.4l2.6 4M743.3 352.1l2.5-2.5M745.2 357.8l-.8 .4M744.4 358.2l-3.2-2.1M738.7 359.6l.7-.5M735 358.1l-.7-2.4M734.3 355.7l-.1-2.7M734.2 353l.3-.5M739.4 359.1l1.8-3M744.4 382.6l-.7-.9M743.2 383.8l-.9-1.2M743.7 381.7l-1.4 .9M743.8 381.2l-.2 .3M743 380.7l0 .6M743.7 381.6l-.6-.3M740.9 382.1l.2-.2M742.3 382.6l-1.2-.7M740.1 379.9l1.2-.5M740.1 379.9l1.1 1.9M741.4 379.4l.4 .7M741.8 380.1l-.2 1.3M741.2 381.7l.4-.4M739.4 379.7l.7 .2M738.8 380.8l.6-1.1M741.8 377.6l-.4 1.8M742.2 377.3l-.5 .3M742 380l-.2 0M742.6 377.6l-.4-.2M743 381.2l-1.4 .1M739.2 375.4l-.2 3M739.2 375.4l1.5 2.2M740.7 377.6l-1.7 .9M739.1 375.1l.1 .3M737 377.9l2.1 .5M741.7 373l.5 4.3M741.8 377.6l-1 0M739.4 379.7l-.4-1.3M743 261.1l-3-2M743 261.1l-4 2.1M740 259.1l-2.1 .5M739 263.2l-.5-.2M738.5 263l-1.2-1.5M737.3 261.4l.7-1.8M743.5 261l-.5 .1M739.4 267.1l-.4-3.9M735 255l2 2.2M735 255l.1-1M735.2 253.9l4.5 1.6M737 257.1l2.2-1M739.6 255.6l-.5 .6M732.9 252l2.2 2M730.4 253.9l1.6 3.6M732 257.5l3-2.5M738 252l-2.8 1.9M740.1 255.1l-.5 .4M736.9 257.4l1 2.2M740 259.1l-.8-2.9M736.9 257.4l.1-.3M737.3 261.4l-1.3-.3M736.9 257.4l-1.5 1.1M735.4 258.5l.5 2.7M723 276.2l.8 .6M721 277.8l2.5 0M723.5 277.8l.4-1M724.9 276l0 .6M723.9 276.8l1-.2M726.1 256.5l.9 1.6M732 257.5l-.1 .4M727 258l5-.2M735.4 258.5l-3.3-.3M732 257.8l.2 .4M714.2 279.8l-1.3-1.4M714.1 276.9l-1.2 1.5M702.2 278l-1.5-.3M702.2 278l1-2.3M703.2 275.7l-2.5 2M702.6 278.6l-2.1 2.1M702.6 278.6l-.5-.7M700.5 280.7l-1-3.2M699.6 277.5l1.1 .1M703.4 278.9l1.6-.7M704.3 275.6l.6 2.6M702.6 278.6l.7 .2M713.4 263.9l-.6 2.7M709.9 264.3l-1 .9M708.8 265.1l2.5 1.6M712.8 266.6l-1.5 .2M709.5 284l-1-1.5M709.3 284.4l.2-.4M708.8 284.8l-1.6-.4M707.2 284.4l-.5-1.5M709.3 284.4l-.6 .3M706.7 282.8l1.8-.3M705 280.3l.1-2M705 280.3l1 1M706 281.4l.7-.7M706.7 280.7l-.4-2.2M706.3 278.5l-1.2-.2M703.4 278.9l0 2M703.3 280.9l1.6-.6M705.8 282.5l.2-1.1M705.2 282.8l.5-.3M703.2 281.1l.7 .8M707.6 276l-.5-.5M707.6 276l1.7-.8M709.3 275.2l-.1-.5M707.7 274.4l1.5 .3M704.3 264.4l.3-4.4M704.3 264.4l2.5 .8M707.3 265.2l-.6 0M707.3 265.2l-1.2-5.6M706 259.6l-1.5 .4M701.8 264.4l2.4 0M703.8 260l.8-.1M707.3 258.4l-1.2 1.2M707.9 265.6l-.6-.4M708.8 265.1l-1 .4M712.8 266.6l.4 1M713.2 267.5l-1.6 .3M711.4 266.7l0 .7M711.6 267.8l-.2-.4M700.8 267.2l2.2 .3M706.7 265.2l-2.7 1.8M703 267.5l1-.4M699.4 284.8l1.1-.5M699.4 284.8l-.3-.1M699.1 284.7l.8-3.2M700.5 284.3l.4-1.9M701 282.4l-.3-.9M700.5 281.4l-.6 .1M702 286.9l0-1M702 285.9l-1.5-1.6M699.5 285.4l-.1-.6M698 284.5l1.1 .3M699.3 281.6l.7-.1M702.4 285.1l-1.5-2.7M702.4 285.1l-.5 .8M703.3 284.1l-.9 1M702.6 283.3l-1.7-.9M703.2 281.1l-2.6 .5M700.5 280.7l0 .7M694.2 288.6l2 .3M696.5 288l0 .6M696.2 289l.3-.4M693.6 292.4l2.2-1.9M696.2 289l-.3 1.5M698.5 288.2l0 1.3M696.5 288.6l2.1 .9M699.7 289.2l-.7 .5M699.7 289.2l-.1-.7M699 289.7l-.4-.1M704.7 284.1l.1 .4M706.7 282.8l-.9-.3M707.2 284.4l-.8 .8M704.8 284.4l1.6 .7M691 338.4l2.7 2.5M687.5 341.9l5.7 1.7M693.7 340.9l-.4 2.7M698.4 335l-2.2 5.5M693.7 340.9l2.5-.5M706.4 344.5l-2.1-1.6M706.4 344.5l3.7-2.9M710.1 341.6l0-.4M710.2 341.2l-6.3-1.7M704.3 342.9l-.4-3.4M694.8 353.7l1.7 0M693.7 359.3l3.2-1.4M696.6 353.7l.3 4.2M697.4 364.8l3.3-3.4M696.9 357.9l3.8 3.4M700.7 361.3l3.2-.5M696.2 340.5l2.1 3.3M702.1 336.3l-1.2-1.9M702.1 336.3l.5 2M702.6 338.3l-3.2 5.1M698.3 343.8l1.1-.4M727.8 354.7l-.6 3.7M727.8 354.7l1.6-1.6M729.5 353.1l0 3.8M729.5 356.9l-2 1.7M734.3 355.7l-4.9 1.2M734.2 353l-4.7 .1M730.4 362.9l-3-4.3M721.6 366l-1.4-5.8M712.7 362l1.1-1.9M720.2 360.1l-6.4 0M703.9 360.8l.5-1.4M706.3 356.9l-1.9 2.5M706.3 356.9l4.7-2.3M713.8 360.1l-2.8-5.5M706.4 344.5l-.5 3.9M713.1 349.6l-3-8M713.1 349.6l.1 .6M705.9 348.4l7 2.1M713.2 350.3l-.3 .2M718.7 343.5l-1.6-.2M718.7 343.5l0 .5M718.7 344l-1.8 3.4M716.9 347.4l-.1-3.8M716.8 343.6l.3-.3M716.3 341.6l.8 1.7M719.4 341.9l-3.1-.3M719.4 341.9l-.7 1.5M715.2 343.5l1-1.9M715.2 343.5l1.6 .1M747.4 299l-.6-.2M745.2 299.9l.4-.7M746.8 298.8l-1.2 .5M742.6 298.8l.1-.2M742.7 298.6l2.1-.2M745.6 299.3l-.8-.8M705.4 413.1l1 1.1M705.4 413.1l.4-1M706.5 414.3l.3-1.6M705.8 412.2l1.1 .4M703 410.4l.9 2.1M703.4 409.5l2.2-.7M703.9 412.5l1.6-.7M705.5 411.9l.2-3M706.6 415.8l-1.9 1.1M706.6 415.8l.3 .7M704.7 416.8l2.2 .9M706.9 416.5l0 1.2M703.4 416.8l1.2-1.5M706.6 415.5l0 .3M708.5 416.4l-1.6 .1M703.4 414.6l.9-.1M703.4 414.6l-.5-1.2M704.3 414.4l.2-.8M702.9 413.4l.9-.6M703.8 412.8l.5 .5M704.3 413.4l.1 .3M702.5 417.2l.9-2.7M704.6 415l-.3-.5M698.4 413.7l4.4-.3M705.6 414.2l-1.2-.6M703.9 412.5l-.1 .3M705.8 412.2l-.3-.3M705.4 413.1l-1 .2M718.8 426.4l-1.1 1.1M718.8 426.4l2.4 2.4M717.7 427.5l3.7 3.8M721.2 428.8l.3 2.3M715.2 427.3l2.5 .2M719 425.1l-.3 1.3M721.3 428.1l0 .7M717.2 434.4l4.2-3.2M722.3 431.2l-.8 0M711.1 382.6l-1.9-1M711.1 382.6l-1.2 3.6M709.2 381.6l.1 4M709.9 386.2l-.6-.7M711.3 382.3l-.2 .3M705.4 378.8l3.8 2.7M711.1 390.2l-1.2-4M704.5 381l4.8 4.6M725 505.6l4.5-1.9M725 505.6l-1.3-1.6M723.7 504l5.9-4.4M729.5 503.7l.4-3.3M729.9 500.3l-.3-.8M732.6 507l-3.2-3.3M725 506.1l0-.5M722.7 502.9l1 1.1M729.3 498.3l.3 1.3M735.2 502l-5.3-1.7M788.6 468l-2.1 .5M787.8 462l-3.1 4.1M786.5 468.4l-1.8-2.3M780.5 465.5l2.7 1M780.4 470.5l3.3-1.5M783.7 469l-.5-2.6M783.2 466.4l1.5-.3M786.5 472.1l-.5-3M786.5 472.1l-.5 1.1M785.2 473.3l.8-.1M785.2 473.3l-1.3-1.6M784 471.7l.3-2.4M784.3 469.3l1.6-.2M788.4 471l-1.9 1.1M786.5 468.4l-.5 .7M786.7 473.7l-.6-.5M781.7 476.3l3.6-3M780.4 470.5l3.6 1.2M783.7 469l.6 .3M711.7 476.7l.1-1.4M711.7 476.7l-2-1.9M711.8 475.2l-.3-.7M711.5 474.6l-1.4-.3M710.1 474.3l-.4 .4M712.2 477.5l-.5-.8M713.8 473.7l-2 1.5M708.9 475.4l.7-.6M713.4 473.3l-1.9 1.3M710.3 473.6l-.3 .7M708.3 473.2l1.4 1.5M835.8 476.8l-.1 1.4M834.5 478.9l.6-.1M835.7 478.2l-.7 .7M837.8 476.4l-.8 1.5M835.7 478.2l1.3-.3M824.3 471.7l.2 .8M824.3 471.7l-1.6 2.8M824.6 472.5l-.6 1.8M822.7 474.5l1.2-.1M825.3 473.2l-.8-.7M822.3 474.6l.5-.1M825.3 475.1l-1.4-.8M750.2 491.3l-1.1-2.9M750.2 491.3l-3.4 .9M746.7 492.2l-.5-.5M746.3 491.7l1.2-4.1M749.1 488.4l-.7-1.2M747.5 487.6l.9-.4M751.7 492.5l-1.5-1.2M752.2 488.8l-3-.4M746.7 493.6l0-1.4M745.8 491.6l.5 .1M744.5 487.7l2.9-.1M748.7 486.4l-.3 .7M759.3 282.5l-3.7 2.5M759.3 282.5l3.8 1.9M763.6 288.7l-.5-4.3M763.6 288.7l-8-3.3M755.6 285.4l0-.3M752.7 281.2l2.9 3.9M759.5 281.6l-.2 .9M765.8 280l-2.7 4.5M765.3 291.5l-1.7-2.8M753.1 291.1l2.6-5.7M764.1 260.8l.6 1.3M764.1 260.8l1.2 .5M764.8 262.1l.6-.5M765.4 261.3l0 .3M763.7 260.3l.4 .5M766.3 260.5l-.9 .8M766 262l-.7-.3M742 285.3l-1.8-1.5M743 280.9l-1.3 .3M740.2 283.7l0-.6M741.8 281.2l-1.6 1.9M825.4 340.1l-.6 2.6M822.1 342.7l.3 .6M822.4 343.3l1 .1M824.8 342.8l-1.5 .7M822.2 344.8l-.2-.7M822.2 344.8l-.2 1M821.9 345.7l-1.1-1.5M822 344.1l-.5 0M821.5 344l-.6 .2M822.4 343.3l-.4 .7M823.4 343.4l0 1.2M823.3 344.6l-1.2 .2M823.3 344.6l.8 .7M824.1 345.5l.1-.3M821.8 346.2l.1-.5M819.3 344.4l1.5-.2M821 343l.5 1M822.4 349.2l1.1-.3M822.4 349.2l1.5 1.6M823.5 348.8l2.7 .3M823.9 350.7l.8 .4M824.7 351.1l1.3-1.2M826 349.9l.3-.8M820 349.1l2.4 .1M822.8 347.2l.7 1.6M819.4 349.9l4.5 .8M826.7 348.6l-.2-.3M826.7 348.6l-.5 .6M825.2 347.4l1.2 .9M822.7 355.2l2-4.1M828 353.8l-2.1-3.9M828.9 348.2l-2.1 .4M827.5 344.2l-1.4 1.5M827.5 344.2l-2.3-.2M826.1 345.7l-.9-1.5M829.1 343.9l-1.6 .3M826.5 348.3l-.4-2.5M824.8 342.8l.4 1.3M824.1 345.3l1.1-1M697.9 294.7l1.8 1.5M699 296.6l.7-.2M714.4 280.3l-1 .4M711.1 278.6l1.2-.3M711.1 278.6l1.3 1.7M712.9 278.4l-.5-.1M712.4 280.4l1 .3M710.3 286.4l-1-2M710.3 286.4l1.4 .6M711.7 287l.5-.8M712.2 286.2l.4-2.3M712.6 284l-.5-.5M709.5 284l2.2-.7M712 283.5l-.4-.1M712.4 278.4l.5-2.4M713 276l1.1 1M709.3 275.2l1.1 .3M709.2 274.7l.6-.5M709.9 274.3l.7 .7M710.6 275l-.2 .6M717 283.2l-.7 .7M717 283.2l-.5-.9M716.5 282.3l-1.2-.9M716 283.8l.3 .1M716 283.8l-.7-2M715.4 281.4l-.1 .4M719.1 281.3l-1.4-1.2M719.1 281.3l-2.6 .9M715.2 280.6l.1 .9M714.2 284.3l-.5-.3M713.7 284l1.6-2.2M714.2 284.3l1.8-.5M712.6 284l1.1 0M713.4 280.7l-1.4 2.8M736.6 387.9l-.6-1.7M736.6 387.9l3 .5M739.6 388.4l.1-1.5M736.7 385.5l3 1.2M736.7 385.5l-.7 .7M736.2 389l.4-1.1M734.7 386l1.3 .2M742.8 386.8l-3.1 .1M740.3 385.2l-.6 1.5M742.2 377.3l2.3-1.6M744.7 377.6l.5-.2M744.6 375.6l.6 1.8M741.9 372.9l2.2 1.1M744.1 374l.6 1.2M744.6 375.6l.1-.4M746.3 378.8l-.5-1.2M745.2 377.5l.7 .1M747.8 376.9l-2 .7M727.1 321.2l1.5-1.6M727.1 321.2l.6 1.3M728.6 319.6l.9 2.1M729.6 321.7l-1 1.1M727.7 322.5l.9 .3M731.3 319.2l-2.6 .3M730.9 321.5l-1.3 .2M728.7 323.1l.5 .8M728.7 323.1l-.1-.3M727.8 315.9l1.2-.6M727.8 315.9l-.2 .3M729 315.3l.4 2M729.4 317.3l-1.2 .6M728.2 317.9l-.6-1.7M730.7 317.3l-1.3 0M728.7 319.6l-.7-1.2M728.2 317.9l-.3 .5M728.7 323.1l-1.8 1.7M727.5 325.7l-.6-.9M714.7 292.6l-3.4 1.3M714.6 292.4l-.6-.7M714.1 291.7l-1.6 0M712.5 291.8l-1.4 2M711.1 293.7l.2 .2M711.9 289.8l.6 2M712.5 289.2l-.6 .6M712.5 289.2l1.2 1.4M713.7 290.6l.3 1.2M712.2 286.2l1.8 .2M711.8 287.4l.8 1.5M711.7 287l0 .4M712.5 289l.9-.3M713.4 288.7l.6-2.2M713.3 329.3l0 .3M713.3 329.3l5.2-1.5M713.3 329.6l5.6 3.7M718.9 333.3l0-5M718.5 327.8l.3 .5M710.4 334.2l2.4-.7M712.8 333.6l.5-3.9M712.2 328.3l1.1 1M710 333.8l.4 .4M718.5 326.9l0 .9M715.7 335.3l-2.8-1.8M719.2 334.7l-.3-1.3M715.7 335.3l3.5-.7M709.4 336.4l.6-1.1M709.4 336.4l.9 4.6M710 335.4l4.2 2.9M710.3 341l1.7-.6M712 340.5l1.8-1M713.8 339.5l.4-1.2M702.1 336.3l7.3 .1M710.4 334.2l-.4 1.1M702.6 338.3l1.3 1.2M715.7 335.3l-1.5 3M713.1 349.6l2-6.1M715.2 343.5l-3.2-3M715.6 340.4l.6 1.1M715.6 340.4l-1.8-1M724.6 329l.5 .6M724.6 329l-.1-1.8M729.4 328.1l-.8 .6M728.6 328.7l-2.3 1.3M724.6 327.3l3-1.6M726.3 330l-1.3-.3M714.8 320.5l2.3-1.5M714.5 318.9l.9-.8M715.4 318.1l.7 .3M717.1 319l-1-.5M717.5 321.1l0-2M717.1 319l.5 .1M714.6 316.5l-1.8-.8M714.6 316.5l-1.3 .6M713.3 317l-.5-1.4M712 313.1l2.1 .2M714.1 313.3l.8 2.8M714.9 316l-.2 .4M712 313.4l.9 2.2M715.4 318.1l-.7-1.7M711.2 318.2l2.1-1.2M708.6 311.6l-.5-1.3M711.3 311.3l.1 1.4M711.3 311.3l-1.6-1.3M709.8 309.9l-1.7 .4M712.7 305.4l-.7 .7M712.7 305.4l1.4 .1M714 305.5l1.9 1.6M712 306.2l-.1 .7M712 306.8l1.2 1.4M713.1 308.2l1 .2M714.2 308.4l1.8-1.3M716.2 312l-2.1 1.3M716.2 312l-2-3.6M711.3 311.3l1.8-3M718.8 307.5l.1-1.6M718.9 305.9l-1-.5M717.7 308l1.1-.5M717.7 308l-1.7-.9M717.9 305.4l-1.9 1.5M712 296.9l-.7-3M712 296.9l2-1.3M711.3 293.9l1.7 .6M714 295.6l-.9-1.2M736.1 306.5l-1.6-2.2M736.7 304.8l-1.5-1.1M734.4 304.4l.8-.7M733.3 305.8l.9-1.4M734.4 304.4l-.3 .1M720.9 308.6l-.3 0M720.9 308.6l.2-1.7M720.6 308.6l-.8-1.1M721.1 306.9l-1.3 .6M719.9 309.7l.7-1M719.9 309.7l-.8-2.1M719.1 307.6l.7-.1M728.2 311.9l-1.1 .2M728.2 311.9l.4-1.9M727.1 312.1l-.5-2.4M726.6 309.7l1.6-.3M728.6 310l-.4-.5M725.9 311.7l.8 .6M726.6 312.3l.4-.1M725.5 310.5l.3 1.2M726.3 309.6l.3 .1M726.4 307.8l-.5 .2M727.9 308.8l-1.5-.9M727.9 308.8l.3 .7M728.1 308.6l1.1-1M730.7 309.1l-1.5-1.5M730.7 309.1l-2.1 .9M727.9 308.8l.2-.2M728.8 312.2l1.6 2.2M728.6 312.2l0 2.2M728.5 314.3l.5 .9M730.4 314.5l-.8 .7M729 315.3l.6-.1M732.7 311.8l-3.9 .4M732 314.4l-1.6 .1M730.7 309.1l1 0M728.2 311.9l.4 .3M730.3 316l-.7-.9M727.8 314.5l-.7-.6M727.8 314.5l-.5 .5M727.1 313.9l.1 1M726.6 312.3l-.2 .4M726.5 312.6l.7 1.3M728.5 314.3l-.7 .2M727.8 315.9l-.4-.8M725.3 314.2l1.2-1.5M724.9 314.9l.4-.8M724.9 314.9l2.4 .1M725.9 311.7l-2.1-.1M725.3 314.2l-1.6-2.1M723.6 312.1l.2-.5M723.9 308.7l-.4 2.4M723.5 311.1l.3 .4M722.8 308.6l-1.9 0M722.8 308.6l-1 1.2M720.9 308.6l.2 1.2M721.8 309.8l-.6 0M719.9 309.7l0 .4M721.2 309.8l-1.3 .3M717.7 308l.1 3.2M716.2 312l.8 0M717.8 311.2l-.8 .8M718.7 321.3l1.8-2.2M717.6 319l1-.8M718.7 318.2l1.7 .8M721.2 320.8l.1-.8M720.5 319.1l.9 .9M748.3 365.3l-.7-.6M748.3 365.3l-3.3 1.5M747.7 364.7l-2.9 1.4M745 366.8l-.2-.7M750.6 364.8l-1.6 .9M749 365.7l-.6-.4M747 362.8l.7 1.9M744.7 365.8l.2 .3M745.2 367.6l-.1-.8M745.2 367.6l2.1-.2M749 365.7l-.4 1.4M748.6 367.1l-1.2 .3M745.4 370.1l3 1.8M747.3 367.4l1 4.5M744.1 374l3.2-.9M747.3 373.1l1.4-.9M748.3 371.9l.4 .3M738.9 328.3l1 1.2M738.9 328.3l-.4-3M738.5 325.3l3-1.2M740.2 329.5l3.3-3.4M741.6 324.1l1.5 .8M743.1 324.9l.4 1.2M735.9 331.4l.5-2.2M735.9 331.4l4.1-2M736.4 329.2l2.5-.9M736 326.7l.4 2.5M736.1 325.1l2.4 .2M740.3 319.9l1.3 4.2M745.9 328.9l-5.3 1.5M745.9 328.9l-2.4-2.9M740.6 330.5l-.4-1M746.1 322.4l-3 2.5M744.7 339.3l-1.1 2.8M744.7 339.3l5.1 2.7M749.8 342l-4 7M743.7 342.1l2.1 6.8M745.8 349.6l-.1-.3M753.3 341.3l-3.5 .7M745.7 349.3l0-.3M746.3 329.3l-1.4 5.6M746.3 329.3l3.9-1.2M750.3 328.1l-.5 7.2M744.9 334.9l4.8 .4M743.5 336.2l-2.2-.3M743.5 336.2l1.5-1.2M740.6 330.5l.6 5.4M745.9 328.9l.4 .4M752.8 326.8l-2.6 1.2M751.9 335.9l-2.1-.6M743.5 336.2l1.2 3.1M741.2 359.3l2.7-.5M741.2 359.3l3.3 2M743.9 358.8l.7 2.1M744.5 361.4l.1-.4M744.4 358.2l-.5 .6M739.4 359.1l1.8 .2M744.6 361.7l0-.4M745.5 360l-.9 .9M723.7 266.5l2.6-.6M725.3 269.4l1.7-1.7M726.3 265.9l.6 1.7M726.7 272l1.8 0M729.4 269.9l-.1-2M726.9 267.6l2.4 .3M721 261.1l3.5 .4M724.4 264.5l1.4-.6M725.7 263.9l.1-.3M724.5 261.5l1.2 2.1M727 258l-.1 1.2M724.5 261.5l2.3-2.2M736.5 270.5l-.9 .1M733.9 269l-.5-1.2M733.4 267.8l.5-2.4M733.9 265.5l.3-.2M738.5 263l-4.2 2.2M735.9 261.2l-1.6 .5M734.2 265.2l.1-3.5M732.1 258.2l1.6 3.1M734.4 261.7l-.6-.4M712.3 273.2l-.4 1.2M712.3 273.2l.4 0M713 276l1-1.3M712.9 276l-.9-1.5M712.7 273.2l1.3 1.4M719 275.5l-2.9-.3M715.8 276.1l.1-1M714 274.6l1.2-.3M716 275.2l-.8-.8M712.7 273.2l.9-.8M713.7 272.4l1.5 1.5M715.2 274.3l0-.4M707.3 278.1l.4-.9M707.3 278.1l-1 .4M707.6 276l.1 .6M707.8 276.6l-.1 .6M706.7 280.7l1.6 0M708.5 282.6l.4-1.5M708.3 280.7l.5 .4M708.6 271.8l-.2 1.1M708.6 271.8l1.2-.6M709.8 271.2l1 1.7M708.4 272.9l.4 .2M708.8 273.2l1 .1M709.8 273.3l.6-.1M710.4 273.2l.4-.3M708.1 271.2l-2.5 .1M708.1 271.2l.5 .6M709.2 274.7l-.4-1.5M709.9 274.3l-.1-1M710.9 274.7l-.2 .3M710.9 274.7l-.5-1.5M711.6 272.7l-.9 .2M712.3 273.2l-.7-.5M711.9 274.4l-1.1 .3M706 268.9l-.8 1.1M706 268.9l1.8-1.8M707.8 267.1l.7 2.2M705.2 270.1l2.8 .2M708 270.3l.4-.9M704 267.1l2 1.8M703 267.5l2.3 2.4M707.9 265.6l0 1M707.9 266.6l-.2 .5M708.1 271.2l0-.9M705 270.7l.2-.6M710.3 270.4l-1.9-1M710.3 270.4l-.6 .8M710.2 267.9l1.1 1.1M710.2 267.9l-1.5-.8M708.7 267.1l2 3.1M711.2 269l.2 .7M711.4 269.8l-.5 .4M711.4 267.5l-1.2 .5M711.6 267.8l-.4 1.2M707.9 266.6l.8 .6M710.3 270.4l.4-.1M711.6 272.4l0 .3M711.6 272.4l-.7-2.2M697 290.8l1-.6M697 290.8l1.7 2M697.9 290.2l.7 2.6M695.9 290.5l1.1 .3M698.6 289.5l-.6 .6M698 293.2l.6-.4M704.5 285.4l.3 1M704.5 285.4l.3-.6M704.8 284.8l.9 1.5M704.8 286.4l.9 0M702.2 287.1l2.3-1.7M702 286.9l.2 .3M704.8 284.4l-.1 .4M706.9 286.8l1.7 1.2M706.9 286.7l1.3-1M708.2 285.7l1.1 1.3M708.6 288l.7-1M706.8 286.9l-1.1-.5M706.4 285.1l.5 1.5M708.8 284.8l-.6 .9M710.3 286.4l-1 .6M708.8 288.8l2.9-1.4M708.8 288.8l-.3-.8M687.5 341.9l4.2 4.8M693.3 343.6l.8 2M694 345.6l-2.3 1.1M685.8 344.9l4.2 4M691.7 346.7l-1.8 2.3M694.8 353.7l-3.3-3.4M689.7 349.9l.2-.3M691.5 350.3l-1.6-.6M690 349l0 .7M694 345.6l.8 .3M691.5 350.3l3.4-.9M694.9 349.4l0-3.5M698.3 343.8l-1.2 1.7M697.2 345.4l-2.3 .4M705.9 348.4l-.6 .1M704.3 342.9l-1.5 1.7M705.3 348.5l-2.5-3.8M699.4 343.4l2 1.2M702.8 344.7l-1.4-.1M727.3 358.5l-5.9-1M727.8 354.7l-4.3-.8M721.4 357.5l2.2-3.6M720.2 360.1l1.2-2.6M713.2 350.3l1.3 0M710.9 354.6l2-4.2M721.4 357.5l-6.8-7.2M723.6 353.9l.6-2.1M729.5 353.1l-.7-.6M728.8 352.4l-4.6-.6M746.7 296.1l0 2.5M746.7 296.1l-2.2 .1M746.8 298.6l-2-1.7M744.6 296.2l.2 .7M748.1 295.2l-1.3 1M744.1 295.9l.5 .2M744.9 298.4l0-1.5M743 296.2l1.1-.3M743 296.2l-.3 2.4M709 412.2l-.8-.5M709 412.2l3.4 .5M708.2 411.8l-1.5-3.7M713.2 410.2l-.7 2.6M713.2 410.2l-5.9-3.2M707.2 407l-.5 1M708 414.1l1-1.9M706.8 412.6l1.4-.9M712.8 414.4l-.4-1.7M705.6 408.8l1.1-.8M714.7 408.8l-1.5 1.4M707.2 406l0 1M836.9 479l-.8 .2M836.9 479l.8 .7M836.1 479.2l.2 1.2M837.7 479.7l-.5 .7M836.3 480.4l.7 .2M837 480.6l.3-.2M835.1 478.8l1 .3M837 477.8l-.1 1.2M833.4 481.4l2.9-1M838.3 481.4l-1.1-1M836.8 482.5l.1-1.9M719.1 281.3l.6 .4M720.6 278.8l0 2M720.6 280.8l-.8 1M718 283.3l1.8-1M718 283.3l-.9-.1M719.8 281.7l0 .5M718.5 284.6l-.7-.4M718 283.3l-.2 1M718.5 284.6l.4 .1M719.8 282.3l.5 .8M719 284.7l1.3-1.7M741.7 286.3l-3.1 .9M742.2 287.5l-1.9 2.5M738.7 287.2l1 2.7M739.7 289.9l.7 .1M743.3 289.4l-2.3 .8M740.4 290l.6 .3M743.8 292.2l-2.3-1.2M741 290.2l.5 .9M730.8 276.4l0 1.5M730.8 276.4l1.4 .5M732.2 276.9l0 1.3M730.7 277.9l1.4 .3M730.6 276.2l-1.2 .9M729.4 277.1l.8 .8M730.2 278l.6-.1M735.9 276.3l-3.5-1.7M735.9 276.3l.5 .8M736.4 277l-4-.6M732.4 274.6l0 1.8M734.8 271.9l1.1 4.3M731.9 273.8l.5 .8M738.3 275.7l-1.8 1.4M732.9 279.3l-.8-1.1M732.9 279.3l3.5-1M732.2 276.9l.2-.5M736.4 278.3l.2-1.2M730.5 273.6l.1 2.6M700.5 289.2l0 1M700.5 289.2l-.8 0M699 289.7l.6 2M699.5 291.6l.6-.4M700.5 290.2l-.4 1M698.6 292.8l.4-.1M699.5 291.6l-.2 .8M699.1 292.7l.2-.3M696.5 299.5l3.3 0M698.3 297.7l1.5 .9M699.8 298.6l0 .9M699.7 296.4l.3 1M699.8 298.6l.2-1.1M711.2 277.5l-1.3-1.1M711.2 277.5l.4-1.1M711.5 276.4l-1.2-.8M709.9 276.4l.5-.8M711 278.6l.2-1.1M712.8 276l-1.3 .4M707.8 276.6l1.8 .3M709.5 276.9l.4-.5M715.5 286l-.8-.5M715.5 286l-.1 1.2M714.8 285.5l-.3 1M714.4 286.4l.7 1M715.4 287.2l-.3 .2M714.8 285.2l0 .3M714.2 284.3l.6 .9M714 286.5l.4-.1M713.4 288.7l.3-.1M713.7 288.6l1.4-.8M715.1 287.8l.1-.4M716.3 283.9l.3 1M717.8 284.2l-.8 1M716.7 285l.3 .3M714.8 285.2l.8 0M716.7 285l-1.1 .2M715.5 286l.4 0M715.5 285.1l.4 .9M745.7 375.4l.3 1.3M745.7 375.4l.5-.2M746.2 375.3l.7 .6M746 376.8l.8-.9M744.7 375.2l1 .2M745.9 377.6l.2-.8M747.3 373.1l-1.2 2.2M748.1 375.9l-1.2 0M748.1 375.9l1.3-3.6M749.3 372.2l-.6-.1M728 318.4l-.4 0M727.6 316.2l-2 0M727.5 318.4l-1.9-2.2M724.6 315.3l.7 .8M724.9 314.9l-.3 .4M725.3 316.1l.3 .1M722.3 319.9l-.9 .2M723.4 320.4l-1.2-.5M721.6 322.2l1.2 1.6M723.4 320.4l.6 .6M724.1 321l-1.2 2.7M720.5 325.4l2.5-1.1M724.6 327.3l-.8-2.6M724.6 329l-5.8-.7M723.8 324.7l-.8-.4M723 324.3l-.1-.5M716.9 288l-1.6 0M715.3 288l.3 .5M716.9 288l-.2 .9M715.6 288.6l1 .3M719.4 341.9l.3-.3M715.6 340.4l3.7-1.7M719.3 338.8l.4 2.9M719.2 334.7l1.2 .7M719.3 338.8l1-3.4M720.2 344.8l.2-2.8M720.2 344.8l-1.5-.8M719.7 341.7l.7 .3M716.1 318.4l.6-2.4M718.6 318.2l-1.4-2M717.2 316.2l-.4-.2M716.9 312l.3 1.4M714.9 316l1.8 0M717.2 313.3l-.6 2.6M707.4 308.6l-1.3 1.2M707.4 308.6l0-2.5M706.8 305.8l.6 .2M706.8 305.8l-3.7 3.9M705.6 304.5l1 .9M703.2 305.7l2.5-1.3M703.1 307.4l.1-1.7M703.1 307.4l0 2.3M706.6 305.3l.2 .5M708 310.3l-1.9-.5M703.1 307.4l-3.8-3.1M705.6 304.5l-.1-1.6M706.6 305.3l1.1-1.5M707.7 303.9l.1-1.2M705.5 302.9l.5-.3M706 302.6l1.7 .1M709.2 304.8l-.2 .2M707.7 303.9l1.3 1.1M709.2 304.8l-1.2-2.3M708 302.5l-.2 .1M710.4 307.3l-1.9-1.6M710.4 307.3l-.9 .8M709.6 308.1l-.5-.1M709 308.1l-1.4-2M707.6 306l.9-.4M712 306.8l-1.5 .5M709 305l-.4 .7M710.3 304.3l-1.2 .5M710.3 304.3l1.7 1.8M709.8 309.9l-.2-1.8M707.4 308.6l1.6-.5M716 306.9l-.1-.5M715.9 306.4l-1.2-1.2M714 305.5l.6-.3M716 293.6l-.1 .3M716 293.6l-1.4-1M713 294.5l2.9-.4M731.3 307.2l-1-.5M730.3 306.7l.2-1.6M732.1 306l-.3-.4M730.5 305.1l1.3 .5M732 304.5l2.2-.1M732 304.5l-.2 .8M731.8 305.3l0 .3M738.1 304.1l-1-1.5M737.9 304.2l-1.7-1M736.2 303.2l.9-.6M735.2 303.6l.1-.3M736.2 303.2l-.8 .1M739.8 302.7l-2.3-.6M737.1 302.6l.4-.5M734.1 301.8l1 0M734.1 301.8l-.9-1.3M733.1 300.5l1.1-1.3M734.3 299.3l.9 2.4M735.4 303.4l-.3-1.6M734.2 304.4l-2-1.8M732.2 302.5l1.9-.7M733.1 300.5l-1.2 1.5M732.2 302.5l-.2-.5M736.9 300.9l.6 1.3M736.9 300.9l-1.8 .8M727.5 303.5l-1.4 1M727.5 303.5l.8-1M728.2 302.3l-2.7-.3M725.2 304.5l-.7-1.6M725.2 304.5l.6 .1M725.5 302.1l-1 .9M722.6 306.5l-1 0M722.6 306.5l.2-.4M722.9 306.1l-.4-1.5M722.5 304.6l-2.6-.1M721.7 306.5l-1.8-1.4M719.9 305.1l0-.6M723.3 308.3l-.6-1.7M723.3 308.3l-.4 .3M721.1 306.9l.5-.4M725.2 306.4l.7 1.6M725.2 306.4l-1.1-.8M723.3 308.3l.7 .4M724.1 305.6l-1.2 .5M725.2 304.5l-1.2 1.1M722.5 302.4l2 .5M722.5 302.4l-.1 2.1M718.8 307.5l.4 .1M718.9 305.9l1-.8M721.7 314.4l0-2M723.6 312.1l-1.9 2.4M721.7 312.4l1.6-1.3M721.8 309.8l.2 1M723.3 311.1l-1.3-.3M722.7 315.3l-.7 2.2M722.7 315.3l-.9-.6M721.6 314.9l.2-.2M721.6 314.9l-1 4M720.6 318.9l1.4-1.4M724.6 315.3l-1.3 .1M723.3 315.4l-.6-.2M719.6 316.4l2-1.5M718.7 318.2l.9-1.8M722.3 319.9l.5-.8M722 317.5l.6 .7M722.8 319.1l-.2-.9M750.7 367.7l1.7 1M750.7 367.7l-1.4 .6M749.3 368.3l.4 3.9M749.7 372.2l1.7 .3M751.4 372.5l1.6-1M753.1 371.5l-.6-2.9M751.6 365.4l-.9 2.3M752.7 366.4l-.3 2.3M748.6 367.1l.8 1.2M749.3 372.2l.3-.1M751.6 373.3l-.2-.8M757.3 370.9l-4.2 .6M727.1 275.9l-.7 1.2M727.1 275.9l1.8-.7M726.4 277.1l2 .4M728.8 275.2l.4 1.9M729.2 277.1l-.9 .4M726.5 274l.6 1.8M724.9 276.6l1.4 .6M730.1 273.5l-1.2 1.7M729.9 278.6l.3-.7M729.9 278.6l-.6 .7M728.3 277.5l.4 1.8M729.3 279.3l-.5 0M725.7 263.9l.6 1.6M725.8 263.6l1.8-.6M727.5 263l1.2 1.3M726.4 265.5l2.4-1.2M726.3 265.9l0-.3M729.7 267.8l1.6-3.6M729.7 267.8l-.3 .1M729.4 267.9l-.5-2.3M728.9 265.5l.3-1.1M729.2 264.5l1.8-.7M730.9 263.8l.4 .4M733.4 267.8l-3.7-.1M733.9 265.5l-2.6-1.3M726.4 265.6l2.5 0M728.7 264.3l.4 .2M733.7 261.3l-2.9 1.6M730.9 262.9l.1 .8M728.4 261.6l-.6-1.2M728.4 261.6l1.9 .6M727.8 260.4l3.3-.6M730.4 262.1l.8-2.4M727.5 263l.9-1.4M726.9 259.2l1 1.2M730.9 262.9l-.5-.8M732.1 258.2l-1 1.5M716 264.6l-.3 3.6M713.2 267.5l.7 .9M715.7 268.2l-1.7 .2M711.4 269.8l1.5 0M714 268.4l-1.1 1.4M711.6 272.4l1.6-1.7M712.9 269.8l.4 .9M713.7 272.4l.3-.9M713.3 270.6l.7 .9M716.2 272.3l1.6 .7M716.2 272.3l-.1-.3M716.1 272l1.6-2.9M718.8 271.9l.1 1.1M718.8 271.9l-.9-2.7M718.8 273l-1 0M716.2 275.1l1.6-2.1M715.2 273.9l1-1.6M721.2 270l-2.4 1.8M719.4 273.4l-.6-.5M718.8 268.7l-.9 .5M715.9 268.3l1.8 .9M708 278.7l1.4-.8M708 278.7l2.5 .3M710 277.8l-.6 0M710 277.8l.8 .8M710.8 278.6l-.4 .4M707.6 277.2l1.7 .7M707.3 278.1l.7 .6M708.3 280.7l-.3-2M709.5 276.9l.5 1M710.3 279.4l-.9 1.5M710.3 279.4l1.1 1.6M709.4 280.9l1.6 .9M711.5 281l-.5 .8M708.8 281.1l.6-.2M710.5 279l-.1 .3M712.4 280.4l-.9 .6M711.7 283.4l-.7-1.6M696.9 353.4l2.5-.2M696.9 353.4l-.2-1.4M696.7 352l1.8-4.3M699.4 353.2l3.5-2.6M698.5 347.7l2.8 1M701.4 348.6l1.7 1.4M702.9 350.6l.2-.6M696.6 353.7l.3-.3M704.3 359.4l-5-6.3M694.9 349.4l1.9 2.6M697.2 345.4l1.4 2.2M706.3 356.9l-3.4-6.3M701.4 344.6l0 4.1M705.3 348.5l-2.3 1.5M728.8 352.4l-.4-3M728.4 349.4l2.9-1M735 351l-.9-.9M734.1 350.1l-2.9-1.7M723.1 349.8l-7.5 0M723.1 349.8l-.2-1.8M722.9 347.9l-.8-2.4M716.4 348.7l5-3.1M716.4 348.7l-.8 1.1M721.4 345.6l.7-.1M714.6 350.3l1-.6M724.1 351.8l-.3-1.4M723.9 350.4l-.8-.6M716.9 347.4l-.5 1.3M720.2 344.8l1.2 .9M723.9 350.4l2.8-1.9M728.4 349.4l-1.7-.9M715.6 288.6l0 1.1M716.6 288.9l.2 .3M716.8 289.2l-1.2 .4M713.7 290.6l1.7-.6M714.6 292.4l1-2.2M715.6 290.3l-.2-.3M715.1 287.8l.2 .2M713.7 288.6l1.7 1.3M715.6 289.6l-.2 .3M712.5 289.2l.1-.2M721.7 278.5l1.7 .1M721.7 278.5l.9 1.5M722.6 280l1-.8M723.4 278.7l.2 .5M720.9 278.2l.8 .4M723.5 277.8l-.1 .9M720.6 280.8l1.6-.2M722.2 280.6l.4-.5M725.6 281.4l-2.8-.3M726 280.2l-.4 1.2M722.2 280.6l.5 .5M726 280.2l-2.4-1M726.1 280.1l.1-2.9M722.6 283.4l.3-1.7M722.6 283.4l1 .3M722.8 281.7l2.8 1.4M723.6 283.7l.6 .1M724.2 283.8l1.4-.5M722.8 281.1l0 .6M720.9 283.5l-.6-.5M720.9 283.5l1.7-.1M725.6 281.4l0 1.6M729.9 278.6l2 1.2M732.8 279.5l-.9 .4M729.3 279.3l1.4 1.2M731.9 279.8l-1.2 .7M738.3 282.5l1.6-2M738.3 282.5l-1.3-.1M737.1 282.4l-.5-.7M736.6 281.7l.2-2.8M736.7 278.9l2 .5M738.7 279.4l1.3 1M741.8 281.2l-1.8-.8M740.2 283.1l-1.9-.7M740.1 278.5l-1.5 .9M736.4 278.3l.3 .6M735.6 285.3l1.5-2.1M735.6 285.3l.9 1.8M737.1 283.3l1.6 2.2M736.5 287.2l2-.1M738.7 285.4l-.2 1.6M735 285.1l.5 .2M735 285.1l-1.3 1.2M735 288.6l-1.3-2.3M735 288.6l1.5-1.4M737.1 282.4l0 .9M740.2 283.7l-1.5 1.7M731.6 286.2l-1.1-1.3M730.5 284.9l-1 .7M731.6 286.2l-.3 1.3M729.4 285.6l1.9 1.9M728 285.2l1.4 .4M728 285.2l-.9 0M727.1 285.3l-.3 1.3M729.4 286.2l0-.5M729.4 286.2l-1.5 1.9M726.8 286.6l.4 1.3M727.9 288.1l-.6-.2M730.3 281.6l-.4 1M730.3 281.6l-2.4-1.4M729.9 282.6l-.5 0M729.4 282.7l-.5-.2M728.8 282.5l-1.2-2.4M730.4 281.5l.2-.6M730.6 280.9l-2.7-.6M730.5 284.9l.4-1M730.9 283.9l-1-1.3M728 285.2l1.4-2.6M726.4 284.4l.7 .9M725.8 283.4l3-.8M725.8 283.4l.6 1M726.1 280.1l1.5 .1M730.7 280.6l-.1 .3M728.8 279.4l-1.1 .8M702 290.9l-.8-2M702 290.9l-.5-.1M701.5 290.9l-.4-.5M701.1 290.4l-.2-1.3M700.9 289.1l.4-.2M700.5 290.2l.6 .2M700.2 291.2l1.3-.3M700.5 289.2l.4-.1M702.3 292.4l-3 .1M702.3 292.4l-.9 1.9M699.1 292.7l1.3 1.6M701.4 294.3l-1.1 .1M699.9 296.1l.4-1.7M704.8 286.4l-.7 1.6M706.8 286.9l-.7 .8M706.1 287.7l-2 .3M702.3 287.4l1.7 .7M702.3 287.4l-.3 .6M701.2 288.9l.7-.8M708.8 288.8l-.1 .7M711.9 289.8l-1 .5M708.8 289.5l2.1 .8M711.1 293.7l-.7-.3M710.9 290.3l-.6 3.1M705.6 291.3l0-1.4M705.6 291.3l.8 .4M706.4 291.7l1.7-1.5M705.6 289.9l1-.5M706.6 289.3l1.5 .6M708.8 289.5l-.6 .5M706.1 287.7l.5 1.7M709.3 293.6l-1.2-3.4M710.3 293.4l-1 .1M718.8 285.7l-1.5-.4M718.9 285.9l-1.9 .9M717.3 285.3l-.3 0M717 285.3l-.2 1M716.8 286.3l0 .3M719 284.7l-.2 1M718.5 284.6l-1.2 .7M715.9 286l.9 .2M715.4 287.2l1.4-.6M717.3 287.7l-.2-.8M716.9 288l.4-.3M727.5 318.4l-1.6 .7M725.3 316.1l0 1.5M725.3 317.6l.7 1.5M725.3 320.9l-1.3 .1M723.4 320.4l1.2-1.3M725.8 320.5l.1-1.3M725.8 320.5l-.5 .4M724.6 319.1l1.2 .2M727.1 321.2l-1.3-.6M727.1 322.8l-.3 2M727.1 322.8l-1.6 .4M725.5 323.2l-1 1.1M726.8 324.8l-2.3-.5M727.7 322.5l-.6 .3M725.3 320.9l.2 2.2M723.8 324.7l.7-.4M726.3 330l1.3 2.6M728.6 328.7l1.9 4.1M727.7 332.5l2.8 .2M733.3 331.8l.8 1.6M730.4 332.8l3.7 .6M741.2 335.9l-2.4 .5M738.8 336.3l-4.2-2.2M735.9 331.4l-1.4 2.4M734.6 334.1l-.1-.3M734.5 333.8l-.4-.4M722.2 342.5l-1.8-.5M722.2 342.5l2.1-4.3M724.3 338.2l-4-2.8M727.7 332.5l-.5 1.6M733.2 335.6l-5.8-.4M733.2 335.6l1.5-1.4M727.2 334.1l.2 1.1M725.1 329.7l-2.9 4.2M727.2 334.1l-5.1-.2M722.1 333.9l-1.7 1.5M718.4 315.2l-1 .9M717.4 316.1l.4-1.9M718.4 315l-.6-.9M719.6 316.4l-1.2-1.3M720.2 314.1l1.5 .4M720.2 314.1l-1.8 .9M717.2 316.2l.2-.2M717.2 313.3l.5 .8M717 312l3.2 2.1M714 295.6l.9-.2M715.9 294.1l-1 1.3M712.6 297.9l2.4-.7M715 297.3l.1-.5M711.9 297.3l.7 .6M712 296.9l-.1 .4M714.9 295.4l.1 1.4M716 293.9l2.5 2.6M718.4 296.7l.1-.3M715.9 294.1l.8 2.2M718.4 296.7l-1.1 .2M717.3 296.9l-.6-.6M715.1 296.8l1.3-.3M716.3 296.5l.3-.2M725.2 306.4l.9-.5M725.8 304.6l.2 .8M726 306l0-.5M728.1 308.6l.2-1.8M729.2 307.6l0-.7M728.3 306.8l1 .1M721.5 311.6l0-.3M721.5 311.6l-1.6 .1M721.5 311.3l-1.8-1M719.8 310.3l-1 .7M718.7 311l1.2 .8M721.7 312.4l-.2-.8M722 310.8l-.5 .5M721.7 314.4l-1.8-2.6M717.8 311.2l.9-.2M715.2 271.6l.7-3.2M715.2 271.6l-.9-.1M714.2 271.5l1.6-3.1M716.1 272l-.9-.4M722.9 347.9l1.7-1.2M726.7 348.5l-1.6-1.8M724.7 346.7l.4 0M722.2 345.5l.7-1.1M724.7 346.7l-1.1-2.2M723.6 344.5l-.7-.1M722.2 342.5l.2 .3M722.4 342.7l.5 1.7M731 342.4l.1 3.9M731 342.4l-1.9 .6M731.1 346.3l-.3 .7M730.8 347l-1.7-.9M729 346.1l.1-3.2M724.2 283.8l-.7 2.6M723.6 283.7l-1 1.5M723.5 286.3l-1-1.2M727.9 288.1l1.6 1.1M729.4 286.2l.7 2.1M729.4 289.2l.6-.8M735 285.1l-.5-.4M733.7 286.3l-.8-.3M732.8 285.9l.2-1.3M733.1 284.6l1.5 .1M736.6 281.7l-1.7 .7M734.6 284.7l.3-2.3M701.9 288.1l.6 2.7M702 288l1 2.2M703 290.2l-.5 .6M702 290.9l.4 .2M702.4 291.2l.1-.3M696.1 304.3l3.1-2.8M699.2 301.5l.4-.7M699.8 299.4l.2 .2M699.6 300.8l.4-1.2M700 297.4l1.6 .2M701.6 297.6l-.2 2.3M700 299.6l1.4 .2M723.3 315.4l.1 1.3M722.6 318.2l.7-.9M723.4 316.7l-.1 .6M722.8 319.1l.5-.3M723.3 317.3l0 1.4M726.3 339.7l5.2-.3M726.3 339.7l-1-1.4M725.3 338.3l1.3-1.1M726.6 337.2l5.1 .8M731.5 339.5l.2-1.5M724.3 338.2l1 .1M727.4 335.2l-.8 1.9M733.2 335.6l-1.5 2.4M710.3 304.3l.1-1.7M710.4 302.6l-.9-.3M708.1 302.4l1.4-.2M719.9 304.5l-.3-1.4M721.7 301.4l-.3-.2M722.5 302.4l-.8-1M719.6 303l1.9-1.8M730.5 304.7l-.9-1.3M730.5 304.7l.7-.5M729.6 303.4l2.1-.2M731.2 304.2l.4-.4M731.6 303.8l.1-.6M730.5 305l0-.3M731.8 305.3l-.7-1.2M732 304.5l-.5-.8M732.2 302.6l-.5 .6M727.2 306l-.5 1.3M727.2 306l.4-.3M727.5 305.7l.3-.1M728.2 306.8l-.2-1.1M728.2 306.8l-1.5 .6M726 306l.6 1.3M726 305.4l1.1 .5M726 304.5l1.5 1.2M727.5 303.5l.4 2.1M726.4 307.8l.2-.5M728.2 302.5l.2 .2M728.8 304l-.3-1.3M728.8 304l-.6 1.6M728.8 304l.6 1.2M728.5 302.8l1.1 .6M730.5 305l-1 .2M730.3 306.7l-.8 0M729.5 305.3l.1 1.5M729.5 306.7l-.2 .1M740.5 301.7l-3.3-1.2M740.9 300.9l-3.2-2M737.6 298.9l-.4 1.6M734.3 298.9l-.1 .3M734.4 298.8l2.5 2M737.2 300.5l-.3 .3M737.4 298l.2 .9M741.3 299.8l-1.5-2.3M737.4 298l.7-.3M739.8 297.5l-1.7 .2M743.2 292.9l-1.7 1.2M741.5 291.1l-.3 1.8M741.6 294l-.3-1.1M724.7 288.4l-1.1-.2M724.7 288.4l1-1.5M723.7 288.2l-.2-1.4M725.7 286.9l-1.4-.3M724.4 286.5l-.9 .2M726.8 288.4l-2 .1M727.2 287.9l-.4 .4M726.8 286.6l-1 .3M726.4 284.4l-2 2.1M723.5 286.3l0 .4M723.7 294.6l-.1 .6M723.7 294.6l-1.8-1.7M723.6 295.2l-1.6-1.4M721.9 292.9l.1 .9M722.4 292.7l-.5 .1M723.8 294.3l-.1 .3M722.4 292.7l1.4 1.6M723.8 294.3l.6-1M722.4 292.7l1.9-1M724.4 293.3l-.1-1.6M723.6 288.3l.1 2.7M723.7 290.9l.7 .6M724.9 288.5l.6 1.9M725.5 290.3l-.7 1.1M724.8 291.4l-.4 .1M720.9 297.1l.7-1.3M723.4 295.8l-1.8 .1M720.9 299.8l-.7-.6M720.9 297.1l-.7 2.1M723.4 295.8l-.3 2.4M720.9 299.8l2.1-1.4M723.1 298.2l-.1 .2M723.8 300.6l.8-.9M723.8 300.6l1.5 .7M725.5 300.7l-.2 .6M725.5 300.7l-.7-1M721.7 301.4l2.1-.8M724.1 299l-1.1-.6M724.1 299l.5 .7M721.4 301.3l-.5-1.5M725.5 302.1l-.2-.8M737.1 345.8l-.2 2.6M737.1 345.8l.4-.8M737.5 345l3.6 1.7M736.9 348.4l4.4-1.4M741.3 347l-.1-.3M735.2 350.7l-.4-5.9M735.2 350.7l1.7-2.3M734.8 344.8l2.2 1M745.7 349.3l-4.4-2.3M735 351l.2-.3M743.7 342.1l-3.3 1.4M740.3 343.5l.8 3.2M737.8 344l.9-1.2M737.8 344l-2.1-.2M735.7 343.7l.2-2.8M738.7 342.8l-.9-2.7M737.8 340l-1.9 .9M740.3 343.5l-1.6-.7M737.5 345l.3-1.1M738.8 336.3l-1 3.7M735.9 340.9l-1.4 .4M735.7 343.7l-.6 .2M734.5 341.4l.6 2.5M731.5 339.5l.3 1.9M734.5 341.4l-2.7 0M726.7 348.5l.4-1.1M731.3 348.4l-.5-1.3M729 346.1l-.9 .3M727.2 347.3l1-.9M716.8 289.2l.9 .7M715.6 290.3l2.6 .9M718.2 291.2l-.5-1.3M716 293.6l2-1.1M718 292.6l.6-.8M718.2 291.2l.5 .6M717.3 287.7l.7 .4M717.7 289.9l.3-1.8M718.8 294.3l1.4 .9M718.8 294.3l-.3 2.1M720.2 295.2l-.6 .8M718.5 296.4l1-.4M718 292.6l.8 1.7M719.9 299.1l.4 .1M718.4 296.7l1.5 2.4M720.9 297.1l-1.4-1.1M721.6 295.8l-.2-.3M721.4 295.6l-1-.4M722 293.8l-.6 .9M723.6 295.7l0-.4M721.4 295.6l0-.8M721.1 286.7l-1.5 .5M721.1 286.7l.2-.3M721.4 286.4l-.2-1.3M719.6 287.2l-.3-.5M721 284.6l-2 1.4M721 284.6l.2 .5M719 286l.2 .7M723.4 286.8l-2.1-.3M722.6 285.2l-1.4 0M720.9 283.5l.1 1.1M717.1 286.9l2.2-.1M726.8 288.4l-.2 1.1M725.5 290.3l1-.5M726.5 289.8l.2-.3M731.6 286.2l1.2-.3M732.9 286l0 .7M732.9 286.8l-1.5 .8M730.1 288.3l1.3-.6M731.3 283.8l1.2 .2M731.3 283.8l.9-1.9M732.6 284l1.1-1.8M732.2 281.9l.9-.5M733.1 281.4l.6 .8M730.9 283.9l.4-.1M733.1 284.6l-.5-.5M730.4 281.5l1.8 .4M734.9 282.4l-1.2-.2M732.8 279.5l.3 2M701.4 294.3l.5 .4M699.9 296.1l1.7 .2M701.9 294.7l-.3 1.6M704.9 293.4l-1.4 .2M704.7 293l-1.8-1.3M703.5 293.6l-1-1.3M702.5 292.3l.2-.5M702.7 291.8l.3 0M701.9 294.7l.8 .1M703.2 294.7l-.4 0M703.2 294.7l.3-1.1M702.4 291.2l.3 .6M709.3 293.6l-.6 .4M706.4 291.7l.2 .9M706.6 292.6l2.1 1.3M711 297.7l-3.1-1.1M711 297.7l-2.5-3.5M707.9 296.6l-.3-1M707.6 295.5l1-1.3M711.9 297.3l-.9 .3M708.6 294.2l.1-.2M703.6 289.8l.3 1.7M703.6 289.8l.6-.6M704.3 289.2l.1 2.1M704.2 291.4l-.3 0M702.9 291.7l1.1-.3M703 290.2l.6-.4M704 288.1l.2 1.1M705.6 289.9l-1.3-.6M705.5 291.3l-1.1 .1M705.5 291.3l-.7 1.9M704.7 293l-.5-1.6M701.4 299.9l.3 .1M701.7 300l1.7-.1M701.9 297.3l1.8 1.2M701.6 297.6l.3-.3M703.7 298.4l-.4 1.5M702.5 304.4l-1.9-.6M702.5 304.4l.1-.2M702.6 304.2l-.2-1.9M700.6 303.8l.3-1.2M702.4 302.3l-1.2-.2M700.9 302.5l.3-.5M703.2 305.7l-.7-1.3M699.3 304.3l1.3-.5M705.5 302.9l-1.1-.5M704.4 302.4l-1.8 1.8M704.4 302.4l-.6-1.1M703.8 301.3l-1.4 .9M699.2 301.5l1.7 1.2M703.6 300.2l-.2-.3M703.8 301.3l-.2-1.1M701.7 300l-.4 2.1M699.6 300.8l1.3 1.7M724.7 317.9l-.5 .9M724.7 317.9l-.6 0M724.1 317.9l-.1 .8M724.2 318.8l-.3-.1M725.3 317.6l-.6 .2M724.6 319.1l-.4-.3M723.4 316.7l.6 1.1M723.3 318.7l.6-.1M706.9 300l.9-1M706.9 300l.9 1.3M707.8 301.3l1.3-1M707.8 299l.7 .2M708.5 299.2l.6 .8M708.1 302.4l-.3-1.2M709.5 302.3l-.4-2M707.5 298.1l.3 .9M707.9 296.6l-.4 1.5M711 297.8l-2.5 1.4M711 297.8l-.3 2.3M710.7 300.1l-1.6-.1M716 301.8l-.8 .3M715.2 302.1l-.9-.4M715.8 300.4l.3 1.4M715.8 300.4l-.5 0M715.2 300.4l-.9 1.3M715.9 298.1l-.4 .8M715.3 297.5l-1.3 1.7M715.3 297.5l.5 .4M715.5 298.8l-1.3 .4M717.3 296.9l-.8 1.2M716.5 298.1l-.6 0M716.3 296.5l-.6 1.4M713.5 299.2l.5 0M712.8 298.4l.7 .8M712.6 297.9l.2 .5M715 297.3l.3 .3M715.8 300.4l.2-.2M715.2 300.4l-1.1-1.1M716 300.2l-.5-1.3M717.7 300.2l1.2-.9M717.7 300.2l-1.1-.2M716.6 300l-.2-2M718.9 299.4l-2.4-1.3M716 300.2l.7-.1M719.9 299.1l-1 .3M728.2 305.6l.8 .7M728.2 305.6l.7-.2M728.9 305.4l.1 .9M729.3 306.9l-.3-.5M729.3 305.2l-.4 .2M723.1 298.2l2.4-.5M723.6 295.7l2 .5M725.6 296.2l0 1.5M724.1 299l1.5-1.1M739.8 297.5l.7-1.2M738.1 297.7l.4-2.9M738.5 294.8l2.1 1.5M743 296.2l-1.2-.6M741.5 294.2l.3 1.4M741.8 295.6l-1.2 .7M738.5 294.8l-.3-.6M741.5 294.2l-3.1-.7M738.1 294.1l.3-.6M732.9 286.8l.8 1.8M731.4 287.7l1.6 1.1M733.7 288.6l-.8 .2M734.1 350.1l-.7-4.1M731.1 346.3l1.3-.7M732.3 345.6l1.1 .4M734.8 344.8l0-.5M734.8 344.8l-1.2 .8M734.8 344.3l-2.4-1.1M733.6 345.6l-1.1-2M732.4 343.2l.1 .5M735.1 343.9l-.4 .4M733.5 346l.2-.4M731.5 342.1l.9 1.1M731.5 342.1l.3-.7M732.3 345.6l.1-2M731 342.4l.5-.3M726.9 344l-1.2 .7M726.9 344l1.2-1.3M728.1 342.7l-1.5-1.9M724.8 344.5l.6-2.5M724.8 344.5l.7 .2M726.6 340.9l-1.1 1.1M727.2 347.3l-1.5-2.6M728.2 346.5l-1.3-2.4M729.2 342.9l-1.1-.2M726.3 339.7l.3 1.2M723.6 344.5l1.3 0M722.4 342.7l3.1-.8M725.1 346.7l.4-2M720.4 295.2l0-1.2M718.7 291.8l.4-.1M719 291.7l1.4 2.3M721.9 292.9l-.5-.2M723.6 290.9l-3.5 .7M720.1 291.7l1.3 1M721.4 294.7l-.2-.5M721.4 292.7l-.2 1.5M721.2 294.2l-.8-.3M702.8 294.7l-.5 1.4M702.3 296.1l-.5 .2M701.9 297.3l0-.4M703.9 298.2l-.2 .2M703.9 298.2l-.2-1.7M703.7 296.5l-1.7 .4M701.7 296.3l.2 .6M706.6 292.6l-.7 .4M705 293.5l.9-.4M707.6 295.5l-.9 0M705.9 293l.7 2.5M707.5 298.1l-2-.2M705.3 297.8l.5-2.2M705.8 295.6l.8-.1M704.4 300.1l1.3-1.4M704.4 300.1l2 .1M705.7 298.8l.9 1.3M706.4 300.2l.2-.2M703.9 298.2l1.4-.4M705.5 297.9l.2 .8M703.6 300.2l.8 0M706 302.6l.3-2.4M706.9 300l-.3 .1M717.7 300.2l-.2 1.3M717.5 301.6l-1.2 .3M715.2 302.1l0 1.6M715.2 303.7l-1.1 0M714.3 301.7l-.5 0M713.8 301.7l.3 2M712.7 305.4l.5-1.2M714.6 305.2l-.6-1.4M713.2 304.2l.8-.4M714.8 305.2l.7-1.3M715.5 303.9l-.3-.2M713.4 300.1l.1 .4M713.4 300.1l-1.8 .4M713.5 300.6l-.1 .9M713.4 301.5l-1.6 .7M711.8 302.2l-.6-.1M711.2 302.1l-.1-1.2M711.6 300.5l-.4 .4M713.5 299.2l-.1 .9M715.2 300.4l-1.8 .2M712.8 298.4l-1.2 2.1M713.8 301.7l-.4-.2M713.2 304.2l-1.3-2M710.4 302.6l.8-.5M710.7 300.1l.5 .8M730.9 301.2l.6-1.5M730.9 301.2l-.9-2M731.5 299.7l0-.5M731.5 299.2l-.6-.8M731 298.5l-1 .8M732 302l-1-.8M733.1 300.5l-1.6-.8M728.2 302.3l.2-.4M728.4 301.9l.7-.3M729.1 301.6l1.8-.4M729.1 301.6l.7-2.3M734.3 298.9l-2.8 .3M724.4 293.3l1.8 .8M725.6 296.2l.3-.6M726 295.5l.2-1.4M727.2 296.6l-1.6-.4M728.2 295.2l-.4-.2M728.2 295.2l-1 1.5M726 295.5l1.8-.6M728.4 301.9l-.7-1.6M725.5 300.7l1.4-.7M727 300l.7 .4M724.8 299.7l1.3-.9M727 300l-.8-1.2M725.6 297.8l.5 .8M729.7 296.2l-.6 .5M729.7 296.2l1.1 .7M730.8 296.9l.1 1.4M730.9 298.3l-1.8-.2M729.1 296.7l0 1.4M733.7 288.6l1.3 0M729.6 295.7l-1-.6M729.6 295.7l.5-.7M728.6 294.3l0 .8M728.6 294.3l1-.6M729.6 293.7l.4 1.2M719 291.7l.4-.2M719.9 291.6l-.5-.1M723.6 290.9l-1.3-1M719.9 291.6l2.3-1.7M723.6 288.3l-1.6 .5M722.3 289.9l-.3-1.1M721.1 286.7l.6 2.1M721.7 288.7l.3 .1M705.7 295.5l-.3-.4M705.7 295.5l-2 .9M705.4 295.2l-2.2-.4M703.2 294.7l.2 1.2M703.7 296.5l-.3-.5M705 293.5l.4 1.7M702.3 296.1l1.1-.1M716.4 303l1.9-.3M716.4 303l-.5 1M716.2 304.3l1.3 0M716.2 304.3l-.3-.3M717.5 304.4l1.2-1.3M718.8 303.1l-.5-.3M717.5 301.6l.8 1.1M716.2 301.8l.2 1.2M715.5 303.9l.4 .1M717.9 305.4l-.4-1M715.9 306.4l.3-2.1M719.6 303l-.8 0M724.8 291.4l1.2 .5M726.2 294.1l.2-.2M726.4 293.9l-.4-2M729.6 290.2l.4 .9M729.6 290.2l3.1-1.2M730 291.1l1.1 .3M731.1 291.4l1.3-.7M732.8 289.1l-.3 1.7M734.1 291.7l-1.7-1M734.1 291.7l-2.3 .6M731.8 292.3l-.7-1M732.9 288.8l-.2 .3M734.2 291.7l.8-3.1M728.2 295.2l.4 0M729.7 296.2l-.1-.5M729.1 296.7l-.8 .2M727.3 296.7l1 .2M739.7 289.9l-.5 .5M741.2 292.9l-2.4-.9M739.2 290.4l-.4 .6M738.9 291l0 1M738.8 292l-.4 1.3M733.2 293.5l1-1.6M731.8 292.3l.1 .9M733.2 293.5l-.8 .3M732 293.2l.4 .6M730.8 296.9l1.8-.9M732.6 296l-.5-1.4M730.1 295l.9-.4M732.1 294.6l-1.2 0M720.8 289.2l-1.3 2.2M720.8 289.2l-1.2-2M719.4 291.4l-.4-3.6M719.6 287.3l-.5 .6M721.7 288.7l-.9 .5M717.9 288.1l1.1-.3M727.8 294.9l-.3-.8M726.4 293.9l.3 0M727.5 294.2l-.8-.4M726.9 291.8l.5 .5M726.9 291.8l.5-.9M727.4 292.3l2.1-2.1M727.4 290.9l1.7-.6M729.2 290.3l.4-.1M726.5 289.8l1 1.1M726 291.9l.9-.1M726.6 289.5l2.6 .8M729.4 289.2l.1 1M728.2 297.9l-.9 0M728.2 297.9l.4 .8M727.2 298.1l1.2 .9M727.2 298.1l.1-.2M727.3 296.7l0 1.2M728.3 296.9l-.1 1M729.1 298.1l-.5 .6M729.8 299.3l-1.2-.4M726.1 298.7l1.1-.6M727.7 300.3l.7-1.3M734.9 295l.9-.5M734.9 295l-1.1 1.6M737 297.9l-2.4 .3M737 297.9l-.5-3.2M736.5 294.7l-.7-.2M734.6 298.1l-.5-.9M734.1 297.3l-.2-.7M733.2 293.5l1.7 1.5M734.3 292l.3 .1M735.3 292.6l-.7-.5M735.3 292.6l.5 1.9M732.4 293.8l-.3 .8M732.6 296l1.3 .6M737.4 298l-.4-.2M734.4 298.8l.2-.7M738.1 294.1l-1.6 .6M735.3 292.6l.9-.4M738.5 293.4l-2.3-1.1M731 298.4l3.1-1.2M729.8 292.8l1.1 1.6M729.8 292.8l1 .5M730.8 293.3l0 1.1M729.6 293.7l0-1M729.5 292.4l.5-1.3M729.5 292.4l.1 .3M732 293.2l-1.1 .1M728.3 293.7l-.3 .1M728.3 293.7l.3-1M728 293.8l-.6-.8M728.7 292.7l-1-.2M727.7 292.5l-.3 .5M728.6 294.3l-.3-.6M727.5 294.2l.5-.3M729.5 292.4l-.9 .3M726.7 293.8l.7-.7M727.4 292.3l.2 .3M737.2 291.1l-.5 .3M737.2 291.1l-1.6-1.9M736.7 291.4l-.8-.4M735.9 291l-.5-1.9M738.9 291l-1.7 0M736.2 292.2l.6-.9M739.2 290.4l-3.7-1.2M734.6 292.1l1.3-1.1M735 288.6l.5 .5" fill="none" stroke="#5a5e63" stroke-width=".8" stroke-opacity=".76"/>
<ellipse cx="717" cy="294" rx="22" ry="26.4" fill="url(#cg)" opacity="0.39"/>
<ellipse cx="720" cy="288" rx="11" ry="8.8" fill="url(#cg)" opacity="0.34"/>
<ellipse cx="701" cy="288" rx="6.6" ry="11" fill="url(#cg)" opacity="0.34"/>
<ellipse cx="723.8" cy="316" rx="6.6" ry="6.6" fill="url(#cg)" opacity="0.40"/>
<ellipse cx="732" cy="300" rx="8.8" ry="8.8" fill="url(#cg)" opacity="0.29"/>
<ellipse cx="712" cy="272" rx="5.5" ry="4.4" fill="url(#cg)" opacity="0.29"/>
<ellipse cx="744.4" cy="381.5" rx="7.15" ry="8.25" fill="url(#cg)" opacity="0.69"/>
<ellipse cx="747.5" cy="360.5" rx="4.4" ry="4.4" fill="url(#cg)" opacity="0.57"/>
<ellipse cx="822.5" cy="417.7" rx="9.35" ry="7.15" fill="url(#cg)" opacity="0.69"/>
<ellipse cx="720" cy="421" rx="5.5" ry="4.95" fill="url(#cg)" opacity="0.63"/>
<ellipse cx="708.5" cy="475" rx="9.9" ry="6.6" fill="url(#cg)" opacity="0.63"/>
<ellipse cx="852" cy="474" rx="9.9" ry="7.15" fill="url(#cg)" opacity="0.63"/>
<ellipse cx="842" cy="479" rx="6.6" ry="4.4" fill="url(#cg)" opacity="0.46"/>
<ellipse cx="829" cy="473" rx="6.6" ry="4.95" fill="url(#cg)" opacity="0.57"/>
<ellipse cx="868.5" cy="443" rx="5.5" ry="6.6" fill="url(#cg)" opacity="0.57"/>
<ellipse cx="869.5" cy="408" rx="3.3" ry="4.95" fill="url(#cg)" opacity="0.57"/>
<ellipse cx="794.4" cy="377" rx="3.85" ry="3.85" fill="url(#cg)" opacity="0.52"/>
<ellipse cx="791" cy="476" rx="3.85" ry="3.3" fill="url(#cg)" opacity="0.52"/>
<ellipse cx="762" cy="502" rx="3.3" ry="3.85" fill="url(#cg)" opacity="0.46"/>
<ellipse cx="679.5" cy="504" rx="2.64" ry="2.64" fill="url(#cg)" opacity="0.63"/>
<ellipse cx="765" cy="261" rx="3.08" ry="3.85" fill="url(#cg)" opacity="0.52"/>
<ellipse cx="844.5" cy="271" rx="2.75" ry="2.75" fill="url(#cg)" opacity="0.46"/>
<ellipse cx="857" cy="292" rx="2.75" ry="4.4" fill="url(#cg)" opacity="0.52"/>
<ellipse cx="818.5" cy="234" rx="2.2" ry="2.2" fill="url(#cg)" opacity="0.40"/>
<ellipse cx="727.5" cy="347" rx="3.85" ry="3.85" fill="url(#cg)" opacity="0.52"/>
<ellipse cx="778.8" cy="333" rx="3.3" ry="3.3" fill="url(#cg)" opacity="0.46"/>
<ellipse cx="794.4" cy="321" rx="3.3" ry="3.3" fill="url(#cg)" opacity="0.40"/>
<ellipse cx="822.5" cy="345.6" rx="3.08" ry="3.08" fill="url(#cg)" opacity="0.46"/>
<ellipse cx="736" cy="344" rx="2.75" ry="2.75" fill="url(#cg)" opacity="0.34"/>
<ellipse cx="802" cy="403" rx="3.3" ry="2.75" fill="url(#cg)" opacity="0.34"/>
<ellipse cx="841.5" cy="413" rx="3.3" ry="3.3" fill="url(#cg)" opacity="0.40"/>
<ellipse cx="706.9" cy="414.4" rx="3.52" ry="3.3" fill="url(#cg)" opacity="0.52"/>
<ellipse cx="695" cy="420.5" rx="3.08" ry="3.08" fill="url(#cg)" opacity="0.46"/>
<ellipse cx="743.5" cy="468" rx="2.75" ry="2.75" fill="url(#cg)" opacity="0.34"/>
<ellipse cx="747.5" cy="492.5" rx="3.52" ry="3.08" fill="url(#cg)" opacity="0.52"/>
<ellipse cx="818.5" cy="500" rx="3.3" ry="3.3" fill="url(#cg)" opacity="0.40"/>
<ellipse cx="690" cy="607.5" rx="4.95" ry="11" fill="url(#cg)" opacity="0.57"/>
<ellipse cx="693" cy="350" rx="3.3" ry="3.3" fill="url(#cg)" opacity="0.34"/>
<ellipse cx="719" cy="344" rx="3.3" ry="3.3" fill="url(#cg)" opacity="0.34"/>
<ellipse cx="862" cy="425" rx="3.3" ry="3.3" fill="url(#cg)" opacity="0.40"/>
<ellipse cx="806" cy="363" rx="2.75" ry="2.75" fill="url(#cg)" opacity="0.34"/>
<ellipse cx="770" cy="405" rx="2.75" ry="2.75" fill="url(#cg)" opacity="0.29"/>
<ellipse cx="745" cy="425" rx="2.75" ry="2.75" fill="url(#cg)" opacity="0.29"/>
<ellipse cx="729" cy="455" rx="2.75" ry="2.75" fill="url(#cg)" opacity="0.29"/>
<ellipse cx="700" cy="455" rx="2.75" ry="2.75" fill="url(#cg)" opacity="0.34"/>
</g>
<polyline points="690.4,413.5 688,418 687.6,424.5 689.2,430.2 691.6,433.8" fill="none" stroke="#666" stroke-width=".5"/>
</svg><!--/MAP--></div>
<div class="a" style="left:366px;top:642px;width:108px;height:9.2px;background:rgba(245,245,245,.85)"></div>
<div class="t" style="left:368.5px;top:642.7px;font-size:6.65px;line-height:8px;height:8px;color:#4a4a4a">© 2023 Mapbox © OpenStreetMap</div>

<!-- bottom bars -->
<div class="a" id="tabbar" style="left:46px;top:663.5px;width:1197px;height:25px;background:#ebebeb;border-top:1px solid #dcdcdc"></div>
<div class="a" id="statusbar" style="left:46px;top:688.5px;width:1197px;height:18px;background:#ececec;border-top:1px solid #dcdcdc"></div>


<!-- bottom bar content -->
<div class="a" style="left:154.6px;top:664.5px;width:38.4px;height:24px;background:#fbfbfb;border-left:1px solid #dcdcdc;border-right:1px solid #dcdcdc"></div>
<div class="vsep" style="left:219.3px;top:664.5px;height:24px;background:#dcdcdc"></div>
<div class="vsep" style="left:245.9px;top:664.5px;height:24px;background:#dcdcdc"></div>
<div class="vsep" style="left:272.5px;top:664.5px;height:24px;background:#dcdcdc"></div>
<svg width="8" height="11" viewBox="0 0 8 11" style="left:54.3px;top:671px" fill="none" stroke="#555" stroke-width=".9"><ellipse cx="4" cy="2.2" rx="2.9" ry="1.3"/><path d="M1.1 2.2v6.4c0 .8 1.3 1.4 2.9 1.4s2.9-.6 2.9-1.4V2.2"/></svg>
<div class="t" style="left:66.6px;top:669.6px;font-size:8.8px;color:#333">데이터 원본</div>
<div class="t" style="left:160.2px;top:669.6px;font-size:8.8px;color:#333">시트 1</div>
<svg width="90" height="20" viewBox="196 667 90 20" style="left:197.2px;top:668.2px" fill="none" stroke="#555" stroke-width="1" stroke-linejoin="round">
<path d="M208.6 676v-5.4h-9v8h6"/><path d="M201.6 677v-1M203.4 677v-1.6M205.2 677v-1M207 676v-1.4" stroke-width=".8"/><path d="M209.4 676.6v5M206.9 679.1h5" stroke="#333" stroke-width="1.4"/>
<path d="M235.4 675.6v-5h-8.8v8h6M226.6 674.4h8.8M231 670.6v8"/><path d="M236.2 676.6v5M233.7 679.1h5" stroke="#333" stroke-width="1.4"/>
<path d="M257.6 671.4c-1.4-.8-2.8-.8-4.2 0v7.6c1.4-.8 2.8-.8 4.2 0zM257.6 671.4c1.4-.8 2.8-.8 4.2 0v4"/><path d="M262.8 676.6v5M260.3 679.1h5" stroke="#333" stroke-width="1.4"/>
</svg>
<div class="t" style="left:56.6px;top:690.8px;font-size:7.4px;font-weight:bold;color:#333">1개 마크</div>
<div class="t" style="left:98.2px;top:690.8px;font-size:7.4px;font-weight:bold;color:#333">행 1개 x 열 1개</div>
<div class="vsep" style="left:930px;top:689.5px;height:17px;background:#dadada"></div>
<div class="vsep" style="left:1036.2px;top:689.5px;height:17px;background:#dadada"></div>
<div class="vsep" style="left:1058.2px;top:689.5px;height:17px;background:#dadada"></div>
<div class="vsep" style="left:1080.2px;top:689.5px;height:17px;background:#dadada"></div>
<div class="vsep" style="left:1119.5px;top:689.5px;height:17px;background:#dadada"></div>
<div class="vsep" style="left:1178px;top:689.5px;height:17px;background:#dadada"></div>
<svg width="120" height="16" viewBox="1122 690 120 16" style="left:1122px;top:690px" stroke="none" fill="#c2c2c2">
<path d="M1127.2 694.4h1v5.4h-1zM1132 694.4v5.4l-3.4-2.7z"/><path d="M1144.6 694.4v5.4l-3.4-2.7z"/><path d="M1154.4 694.4v5.4l3.4-2.7z"/><path d="M1171.2 694.4h-1v5.4h1zM1166.4 694.4v5.4l3.4-2.7z"/>
<g fill="#c6c6c6"><rect x="1186.2" y="692.8" width="2.2" height="2.2"/><rect x="1189.6" y="692.8" width="2.2" height="2.2"/><rect x="1193" y="692.8" width="2.2" height="2.2"/><rect x="1186.2" y="696.2" width="2.2" height="2.2"/><rect x="1189.6" y="696.2" width="2.2" height="2.2"/><rect x="1193" y="696.2" width="2.2" height="2.2"/><rect x="1186.2" y="699.6" width="2.2" height="2.2"/><rect x="1189.6" y="699.6" width="2.2" height="2.2"/><rect x="1193" y="699.6" width="2.2" height="2.2"/></g>
<g fill="#c0c0c0"><rect x="1203.6" y="692.8" width="9" height="5.6"/><rect x="1203.6" y="699.6" width="2.2" height="2.2"/><rect x="1207" y="699.6" width="2.2" height="2.2"/><rect x="1210.4" y="699.6" width="2.2" height="2.2"/></g>
<rect x="1221" y="692.6" width="9.2" height="9.2" fill="#5c5c5c"/>
</svg>

</div></div>
</body>
</html>
